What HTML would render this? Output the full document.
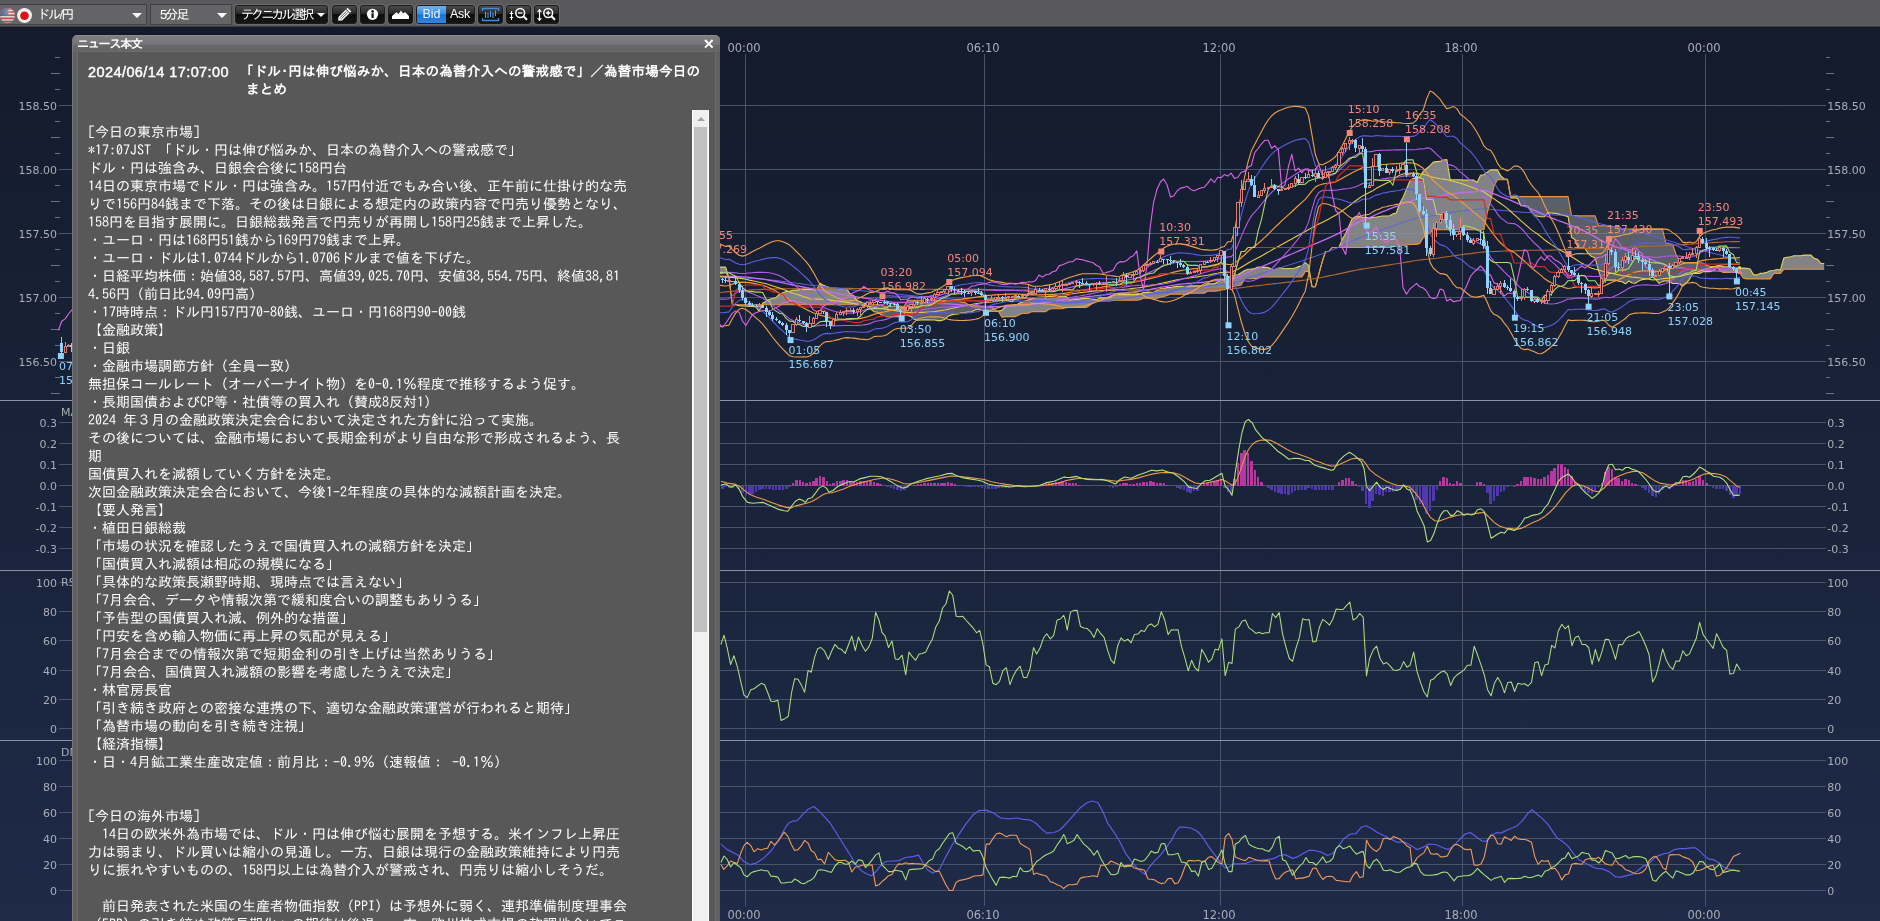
<!DOCTYPE html>
<html lang="ja"><head><meta charset="utf-8"><title>ドル/円 チャート</title>
<style>
html,body{margin:0;padding:0;}
body{width:1880px;height:921px;overflow:hidden;position:relative;background:linear-gradient(#141a2b 0%,#182238 45%,#1e2a47 100%);font-family:"Liberation Sans","IPAGothic","Noto Sans CJK JP",sans-serif;}
#tb,#news{will-change:transform;}
#tb{position:absolute;left:0;top:0;width:1880px;height:27px;background:#59595b;border-bottom:1px solid #3c3c3e;box-sizing:border-box;}
.cb{position:absolute;top:4px;height:21px;box-sizing:border-box;background:#646466;border:1px solid #434345;border-top-color:#3e3e40;color:#fff;font-size:12px;line-height:19px;font-family:"Liberation Sans","IPAGothic",sans-serif;}
.cb .ar{position:absolute;top:8px;width:0;height:0;border-left:5px solid transparent;border-right:5px solid transparent;border-top:5px solid #fff;}
.bt{position:absolute;top:5px;height:19px;width:25px;box-sizing:border-box;border:1px solid #1c1c1c;border-radius:3px;background:linear-gradient(#4a4a4a 0%,#2a2a2a 45%,#0c0c0c 50%,#161616 100%);color:#fff;font-size:12px;line-height:17px;text-align:center;box-shadow:0 0 0 1px #6a6a6c;}
#news{position:absolute;left:72px;top:35px;width:648px;height:900px;box-sizing:border-box;background:#606062;border-radius:5px 5px 0 0;border-left:1px solid #757577;border-top:1px solid #8a8a8c;}
#nt{position:absolute;left:0;top:0;width:647px;height:16px;border-radius:4px 4px 0 0;background:linear-gradient(#7f7f81 0%,#757577 52%,#676769 58%,#656567 100%);}
#nt span{position:absolute;left:4px;top:2px;font-size:12px;line-height:13px;font-weight:bold;color:#fff;font-family:"Liberation Sans","IPAGothic",sans-serif;letter-spacing:-1.2px;}
#nc{position:absolute;left:4px;top:15px;width:639px;height:890px;background:#585858;border:1px solid #6c6c6c;box-sizing:border-box;}
#hd{position:absolute;left:11px;top:11px;color:#fff;font-weight:bold;font-size:13.5px;line-height:18px;font-family:"Liberation Sans","IPAGothic",sans-serif;}
#bd{position:absolute;left:10px;top:71px;color:#fff;font-size:14px;line-height:18px;white-space:pre;font-family:"IPAGothic","Liberation Mono",monospace;}
#sb{position:absolute;left:614px;top:58px;width:17px;height:830px;background:#f0f0f0;border-left:1px solid #fff;border-right:1px solid #fff;box-sizing:border-box;}
#sb i{position:absolute;left:1px;top:17px;width:13px;height:505px;background:#c1c1c1;}
#sb b{position:absolute;left:4px;top:7px;width:0;height:0;border-left:4px solid transparent;border-right:4px solid transparent;border-bottom:4px solid #a3a3a3;}
</style></head><body>
<svg width="1880" height="921" viewBox="0 0 1880 921" style="position:absolute;left:0;top:0;will-change:transform">
<defs><linearGradient id="bg" x1="0" y1="0" x2="0" y2="1"><stop offset="0" stop-color="#141a2b"/><stop offset="0.45" stop-color="#182238"/><stop offset="1" stop-color="#1e2a47"/></linearGradient></defs>
<g stroke="#4a5468" stroke-width="1" shape-rendering="crispEdges"><line x1="59" y1="105.5" x2="1826" y2="105.5"/><line x1="59" y1="169.5" x2="1826" y2="169.5"/><line x1="59" y1="233.5" x2="1826" y2="233.5"/><line x1="59" y1="297.5" x2="1826" y2="297.5"/><line x1="59" y1="361.5" x2="1826" y2="361.5"/><line x1="59" y1="422.5" x2="1826" y2="422.5"/><line x1="59" y1="443.5" x2="1826" y2="443.5"/><line x1="59" y1="464.5" x2="1826" y2="464.5"/><line x1="59" y1="485.5" x2="1826" y2="485.5"/><line x1="59" y1="506.5" x2="1826" y2="506.5"/><line x1="59" y1="527.5" x2="1826" y2="527.5"/><line x1="59" y1="548.5" x2="1826" y2="548.5"/><line x1="59" y1="582.5" x2="1826" y2="582.5"/><line x1="59" y1="611.5" x2="1826" y2="611.5"/><line x1="59" y1="640.5" x2="1826" y2="640.5"/><line x1="59" y1="670.5" x2="1826" y2="670.5"/><line x1="59" y1="699.5" x2="1826" y2="699.5"/><line x1="59" y1="728.5" x2="1826" y2="728.5"/><line x1="59" y1="760.5" x2="1826" y2="760.5"/><line x1="59" y1="786.5" x2="1826" y2="786.5"/><line x1="59" y1="812.5" x2="1826" y2="812.5"/><line x1="59" y1="838.5" x2="1826" y2="838.5"/><line x1="59" y1="864.5" x2="1826" y2="864.5"/><line x1="59" y1="890.5" x2="1826" y2="890.5"/><line x1="745.5" y1="54" x2="745.5" y2="906"/><line x1="984.5" y1="54" x2="984.5" y2="906"/><line x1="1220.5" y1="54" x2="1220.5" y2="906"/><line x1="1462.5" y1="54" x2="1462.5" y2="906"/><line x1="1705.5" y1="54" x2="1705.5" y2="906"/></g>
<g stroke="#6a7385" stroke-width="1" shape-rendering="crispEdges"><line x1="1826" y1="57.5" x2="1830" y2="57.5"/><line x1="55" y1="57.5" x2="60" y2="57.5"/><line x1="1826" y1="73.5" x2="1834" y2="73.5"/><line x1="51" y1="73.5" x2="60" y2="73.5"/><line x1="1826" y1="89.5" x2="1830" y2="89.5"/><line x1="55" y1="89.5" x2="60" y2="89.5"/><line x1="1826" y1="121.5" x2="1830" y2="121.5"/><line x1="55" y1="121.5" x2="60" y2="121.5"/><line x1="1826" y1="137.5" x2="1834" y2="137.5"/><line x1="51" y1="137.5" x2="60" y2="137.5"/><line x1="1826" y1="153.5" x2="1830" y2="153.5"/><line x1="55" y1="153.5" x2="60" y2="153.5"/><line x1="1826" y1="185.5" x2="1830" y2="185.5"/><line x1="55" y1="185.5" x2="60" y2="185.5"/><line x1="1826" y1="201.5" x2="1834" y2="201.5"/><line x1="51" y1="201.5" x2="60" y2="201.5"/><line x1="1826" y1="217.5" x2="1830" y2="217.5"/><line x1="55" y1="217.5" x2="60" y2="217.5"/><line x1="1826" y1="249.5" x2="1830" y2="249.5"/><line x1="55" y1="249.5" x2="60" y2="249.5"/><line x1="1826" y1="265.5" x2="1834" y2="265.5"/><line x1="51" y1="265.5" x2="60" y2="265.5"/><line x1="1826" y1="281.5" x2="1830" y2="281.5"/><line x1="55" y1="281.5" x2="60" y2="281.5"/><line x1="1826" y1="313.5" x2="1830" y2="313.5"/><line x1="55" y1="313.5" x2="60" y2="313.5"/><line x1="1826" y1="329.5" x2="1834" y2="329.5"/><line x1="51" y1="329.5" x2="60" y2="329.5"/><line x1="1826" y1="345.5" x2="1830" y2="345.5"/><line x1="55" y1="345.5" x2="60" y2="345.5"/><line x1="1826" y1="377.5" x2="1830" y2="377.5"/><line x1="55" y1="377.5" x2="60" y2="377.5"/><line x1="1826" y1="393.5" x2="1834" y2="393.5"/><line x1="51" y1="393.5" x2="60" y2="393.5"/></g>
<g stroke="#8b93a3" stroke-width="1.4" shape-rendering="crispEdges"><line x1="0" y1="400.5" x2="1880" y2="400.5"/><line x1="0" y1="570.5" x2="1880" y2="570.5"/><line x1="0" y1="740.5" x2="1880" y2="740.5"/></g>
<clipPath id="mc"><rect x="58" y="28" width="1768" height="372"/></clipPath>
<g clip-path="url(#mc)" fill="none" stroke-linejoin="round">
<polygon points="112.3,351.2 115.7,351.2 119.0,351.2 122.4,351.2 125.8,351.2 129.1,351.2 132.5,351.2 135.9,351.9 139.2,348.2 142.6,348.2 144.4,347.1 144.4,347.1 142.6,347.1 139.2,347.1 135.9,347.1 132.5,347.1 129.1,347.1 125.8,347.1 122.4,347.1 119.0,347.1 115.7,347.1 112.3,347.1" fill="#8a8a90" fill-opacity="0.6" stroke="none"/>
<polygon points="144.4,347.1 146.0,346.1 149.4,346.1 152.7,346.1 156.1,346.1 159.5,346.1 162.8,344.9 166.2,344.9 169.6,344.9 172.9,344.9 176.3,344.6 179.7,344.5 183.1,344.5 186.4,343.8 189.8,343.8 193.2,344.1 196.5,343.0 199.9,343.0 203.3,342.1 206.6,341.7 210.0,339.9 213.4,339.9 216.8,338.8 220.1,338.5 223.5,335.4 226.9,335.4 230.2,331.8 233.6,331.5 237.0,329.9 240.3,325.8 243.7,324.8 247.1,324.3 250.5,324.3 253.8,323.7 257.2,323.7 260.6,319.4 263.9,318.2 267.3,316.1 270.7,312.5 274.0,312.3 277.4,312.3 280.8,312.1 284.2,311.7 287.5,311.0 290.9,310.4 294.3,309.4 297.6,309.0 301.0,307.3 304.4,306.6 307.7,306.3 311.1,306.3 314.5,306.3 317.9,302.8 321.2,302.0 324.6,299.7 328.0,298.7 331.3,297.4 334.7,297.2 338.1,295.9 341.4,295.6 344.8,295.2 348.2,293.4 351.6,292.4 354.9,292.4 358.3,292.4 361.7,292.2 365.0,291.7 368.4,291.7 371.8,291.7 375.1,291.9 378.5,292.4 381.9,292.4 385.3,292.4 388.6,291.5 392.0,291.5 395.4,291.0 398.7,290.2 402.1,289.8 405.5,288.6 408.8,288.6 412.2,288.6 415.6,285.3 419.0,285.3 422.3,285.2 425.7,285.1 429.1,285.0 432.4,285.0 435.8,285.0 439.2,285.0 442.5,285.0 445.9,285.0 449.3,285.0 452.7,285.0 456.0,285.4 459.4,285.4 462.8,284.9 466.1,284.8 469.5,284.8 472.9,284.9 476.2,284.8 479.6,284.8 483.0,284.8 486.4,285.4 489.7,285.8 492.8,285.8 492.8,285.8 489.7,287.5 486.4,288.3 483.0,288.3 479.6,288.3 476.2,288.3 472.9,290.4 469.5,290.4 466.1,290.4 462.8,290.4 459.4,290.4 456.0,290.4 452.7,290.4 449.3,291.0 445.9,291.3 442.5,291.3 439.2,291.3 435.8,293.3 432.4,293.3 429.1,293.3 425.7,294.0 422.3,294.2 419.0,294.2 415.6,294.6 412.2,299.6 408.8,300.6 405.5,302.0 402.1,308.9 398.7,308.9 395.4,309.6 392.0,309.6 388.6,310.5 385.3,310.9 381.9,311.8 378.5,311.8 375.1,311.8 371.8,313.2 368.4,313.2 365.0,313.7 361.7,313.7 358.3,313.7 354.9,313.7 351.6,313.7 348.2,314.4 344.8,317.1 341.4,317.1 338.1,317.1 334.7,318.4 331.3,318.6 328.0,320.1 324.6,320.1 321.2,322.1 317.9,322.9 314.5,322.9 311.1,322.9 307.7,322.9 304.4,322.9 301.0,322.9 297.6,324.4 294.3,324.4 290.9,324.4 287.5,325.0 284.2,325.0 280.8,327.3 277.4,327.3 274.0,327.3 270.7,327.3 267.3,329.9 263.9,331.6 260.6,331.7 257.2,331.7 253.8,331.7 250.5,332.3 247.1,332.3 243.7,332.3 240.3,332.3 237.0,335.9 233.6,337.5 230.2,337.5 226.9,340.4 223.5,340.4 220.1,343.2 216.8,343.5 213.4,344.6 210.0,344.6 206.6,346.0 203.3,346.0 199.9,346.0 196.5,346.0 193.2,346.0 189.8,346.0 186.4,346.0 183.1,346.0 179.7,346.0 176.3,346.0 172.9,346.0 169.6,346.0 166.2,346.0 162.8,346.0 159.5,347.3 156.1,347.3 152.7,347.3 149.4,347.1 146.0,347.1 144.4,347.1" fill="#929292" fill-opacity="0.88" stroke="none"/>
<polygon points="492.8,285.8 493.1,285.8 494.0,285.7 494.0,285.7 493.1,285.7 492.8,285.8" fill="#8a8a90" fill-opacity="0.6" stroke="none"/>
<polygon points="494.0,285.7 496.5,285.2 499.8,285.0 503.2,285.0 506.6,285.0 509.9,285.0 513.3,285.5 516.7,285.5 520.1,284.7 523.4,282.3 526.8,282.3 530.2,282.3 533.5,282.3 536.9,282.3 540.3,282.3 543.6,281.9 547.0,281.9 550.4,281.9 553.8,282.6 557.1,282.6 560.5,282.6 563.9,282.6 567.2,282.2 570.6,281.8 574.0,279.8 577.3,279.0 580.7,278.3 584.1,278.3 587.5,278.3 590.8,278.3 594.2,278.1 597.6,278.1 600.9,277.6 604.3,277.8 607.7,277.7 611.0,277.5 614.4,277.4 617.8,277.4 621.2,277.4 624.5,276.3 627.9,275.9 631.3,275.6 634.6,275.6 638.0,274.3 641.4,272.9 644.7,272.9 648.1,272.9 651.5,272.6 654.9,272.3 658.2,272.4 661.6,272.4 665.0,272.3 668.3,272.3 671.7,272.4 675.1,272.1 678.4,272.1 681.8,271.0 685.2,270.4 688.6,268.2 691.9,268.2 695.3,268.2 698.7,268.2 702.0,268.2 705.4,268.0 708.8,267.5 712.1,267.3 715.5,267.1 718.9,267.1 722.3,267.1 725.6,267.1 729.0,278.1 732.4,304.8 735.7,304.8 735.7,304.8 735.7,304.8 735.7,304.8 732.4,304.8 729.0,278.1 725.6,272.2 722.3,273.6 718.9,273.6 715.5,273.6 712.1,274.4 708.8,274.4 705.4,274.8 702.0,274.9 698.7,274.9 695.3,274.9 691.9,274.9 688.6,274.9 685.2,277.2 681.8,277.8 678.4,277.8 675.1,277.8 671.7,277.8 668.3,277.8 665.0,277.8 661.6,279.3 658.2,279.3 654.9,279.3 651.5,279.3 648.1,279.3 644.7,279.3 641.4,279.3 638.0,280.7 634.6,281.3 631.3,281.3 627.9,281.3 624.5,281.3 621.2,281.3 617.8,281.3 614.4,281.3 611.0,281.3 607.7,281.3 604.3,281.3 600.9,281.3 597.6,281.3 594.2,281.3 590.8,281.3 587.5,281.3 584.1,281.3 580.7,281.3 577.3,281.3 574.0,281.3 570.6,283.1 567.2,283.1 563.9,283.1 560.5,283.2 557.1,283.4 553.8,283.4 550.4,283.5 547.0,284.1 543.6,284.1 540.3,284.1 536.9,284.1 533.5,284.1 530.2,284.1 526.8,284.1 523.4,284.1 520.1,285.6 516.7,285.6 513.3,285.6 509.9,285.6 506.6,285.6 503.2,285.7 499.8,285.7 496.5,285.7 494.0,285.7" fill="#929292" fill-opacity="0.88" stroke="none"/>
<polygon points="735.7,304.8 739.1,305.6 742.5,306.0 745.8,306.0 749.2,306.4 752.6,306.4 756.0,306.9 759.3,311.4 762.0,304.8 762.0,304.8 759.3,304.8 756.0,304.8 752.6,304.8 749.2,304.8 745.8,304.8 742.5,304.8 739.1,304.8 735.7,304.8" fill="#8a8a90" fill-opacity="0.6" stroke="none"/>
<polygon points="762.0,304.8 762.7,303.1 766.1,301.4 769.4,299.3 772.8,298.5 776.2,297.4 779.5,294.2 782.9,292.8 786.3,291.4 789.7,291.2 793.0,290.0 796.4,290.4 799.8,289.4 803.1,289.2 806.5,289.5 809.9,289.5 813.2,289.5 816.6,290.5 820.0,283.3 823.4,285.3 826.7,286.6 830.1,287.7 833.5,288.3 836.8,288.3 840.2,288.6 843.6,288.6 846.9,289.1 850.3,294.6 853.7,295.6 857.1,300.6 860.4,301.7 863.8,303.4 867.2,304.1 867.7,304.8 867.7,304.8 867.2,304.8 863.8,304.8 860.4,304.8 857.1,304.8 853.7,304.8 850.3,304.8 846.9,304.8 843.6,304.8 840.2,304.8 836.8,304.8 833.5,304.8 830.1,304.8 826.7,304.8 823.4,304.8 820.0,304.8 816.6,304.8 813.2,304.8 809.9,304.8 806.5,304.8 803.1,304.8 799.8,304.8 796.4,304.8 793.0,304.8 789.7,304.8 786.3,304.8 782.9,304.8 779.5,304.8 776.2,304.8 772.8,304.8 769.4,304.8 766.1,304.8 762.7,304.8 762.0,304.8" fill="#929292" fill-opacity="0.88" stroke="none"/>
<polygon points="867.7,304.8 870.5,308.7 873.9,311.7 877.3,312.0 880.6,314.4 884.0,315.6 887.4,316.7 890.8,316.7 894.1,316.7 897.5,316.8 900.9,315.8 904.2,314.5 907.6,315.5 911.0,316.5 914.3,319.3 917.7,320.3 921.1,320.0 924.5,319.9 927.8,319.9 931.2,320.0 934.6,320.0 937.9,320.6 941.3,320.6 944.7,319.4 948.0,316.3 951.4,314.9 954.8,314.2 958.2,313.9 961.5,312.7 964.9,312.5 968.3,312.0 971.6,311.8 975.0,309.9 978.4,309.2 981.7,309.9 985.1,311.2 988.5,311.2 991.9,311.2 995.2,311.2 997.6,311.1 997.6,311.1 995.2,309.7 991.9,307.2 988.5,307.2 985.1,307.2 981.7,306.9 978.4,306.9 975.0,306.9 971.6,306.6 968.3,304.8 964.9,302.4 961.5,302.3 958.2,300.3 954.8,300.3 951.4,300.3 948.0,300.3 944.7,300.3 941.3,300.3 937.9,300.3 934.6,300.3 931.2,300.3 927.8,300.3 924.5,300.3 921.1,300.3 917.7,300.3 914.3,300.3 911.0,300.3 907.6,300.3 904.2,306.2 900.9,306.2 897.5,306.2 894.1,306.2 890.8,306.2 887.4,306.2 884.0,306.2 880.6,304.8 877.3,304.8 873.9,304.8 870.5,304.8 867.7,304.8" fill="#8a8a90" fill-opacity="0.6" stroke="none"/>
<polygon points="997.6,311.1 998.6,311.1 1002.0,310.2 1005.3,306.9 1008.7,305.9 1012.1,305.9 1015.4,305.5 1018.8,303.5 1022.2,302.0 1025.6,300.7 1028.9,299.9 1032.3,298.4 1035.7,297.5 1039.0,297.4 1042.4,297.3 1045.8,297.3 1049.1,296.1 1052.5,296.1 1055.9,296.1 1059.3,296.1 1062.6,296.3 1066.0,296.5 1069.4,299.9 1072.7,299.4 1076.1,299.1 1079.5,299.1 1082.8,298.5 1086.2,298.5 1089.6,298.5 1093.0,299.3 1096.3,299.9 1099.7,297.9 1103.1,297.9 1106.4,297.9 1109.8,297.8 1113.2,295.3 1116.5,294.7 1119.9,294.6 1123.3,294.6 1126.7,294.6 1130.0,294.6 1133.4,294.6 1136.8,294.6 1140.1,294.0 1143.5,292.5 1146.9,292.5 1150.2,292.5 1153.6,292.5 1157.0,290.5 1160.4,288.7 1163.7,288.7 1167.1,287.5 1170.5,287.5 1173.8,286.8 1177.2,286.4 1180.6,286.4 1183.9,286.4 1187.3,286.4 1190.7,285.9 1194.1,285.9 1197.4,285.9 1200.8,285.9 1204.2,285.9 1207.5,283.8 1210.9,283.8 1214.3,283.8 1217.6,281.9 1221.0,279.4 1224.4,279.2 1227.8,277.3 1231.1,276.3 1234.5,275.3 1237.9,274.8 1241.2,272.8 1244.6,270.5 1248.0,269.3 1251.3,269.1 1254.7,268.5 1258.1,267.0 1261.5,267.4 1264.8,267.4 1268.2,267.5 1271.6,269.2 1274.9,269.5 1278.3,268.0 1281.7,268.0 1285.0,268.8 1288.4,268.5 1291.8,268.5 1295.2,268.0 1298.5,266.6 1301.9,265.9 1305.3,262.6 1308.6,265.4 1312.0,286.7 1315.4,286.7 1318.7,274.7 1322.1,262.1 1325.5,251.5 1328.9,251.5 1332.2,247.5 1335.6,247.5 1339.0,247.5 1342.3,239.3 1345.7,233.4 1349.1,225.7 1352.4,218.6 1355.8,216.4 1359.2,216.4 1362.6,217.1 1365.9,217.4 1369.3,218.1 1372.7,217.4 1376.0,217.3 1379.4,216.5 1382.8,216.0 1386.1,216.0 1389.5,215.8 1392.9,213.9 1396.3,213.0 1399.6,203.8 1403.0,197.4 1406.4,189.5 1409.7,181.1 1413.1,178.3 1416.5,178.1 1419.8,177.2 1423.2,171.4 1426.6,168.5 1430.0,165.7 1433.3,162.1 1436.7,161.6 1440.1,161.4 1443.4,160.0 1446.8,159.5 1450.2,179.8 1453.5,179.8 1456.9,179.8 1460.3,179.8 1463.7,180.1 1467.0,180.1 1470.4,180.1 1473.8,180.1 1477.1,182.5 1480.5,175.2 1483.9,174.7 1487.2,172.3 1490.6,169.9 1494.0,169.9 1497.4,169.9 1500.7,175.6 1504.1,178.9 1507.5,179.3 1508.3,184.0 1508.3,184.0 1507.5,179.8 1504.1,179.8 1500.7,179.8 1497.4,179.8 1494.0,186.0 1490.6,201.5 1487.2,213.2 1483.9,229.7 1480.5,229.7 1477.1,229.7 1473.8,229.7 1470.4,229.7 1467.0,229.7 1463.7,229.7 1460.3,229.7 1456.9,229.7 1453.5,229.7 1450.2,229.7 1446.8,229.7 1443.4,229.7 1440.1,229.7 1436.7,229.7 1433.3,229.7 1430.0,233.1 1426.6,234.8 1423.2,237.7 1419.8,243.5 1416.5,244.4 1413.1,244.5 1409.7,244.5 1406.4,245.2 1403.0,245.2 1399.6,245.2 1396.3,246.2 1392.9,246.8 1389.5,247.5 1386.1,247.5 1382.8,247.5 1379.4,247.5 1376.0,247.5 1372.7,247.5 1369.3,247.5 1365.9,247.5 1362.6,247.5 1359.2,247.5 1355.8,247.5 1352.4,247.5 1349.1,247.5 1345.7,247.5 1342.3,247.5 1339.0,247.5 1335.6,247.5 1332.2,247.5 1328.9,251.5 1325.5,251.5 1322.1,262.1 1318.7,274.7 1315.4,286.7 1312.0,286.7 1308.6,271.4 1305.3,271.4 1301.9,276.9 1298.5,277.0 1295.2,277.0 1291.8,277.0 1288.4,277.0 1285.0,277.0 1281.7,277.0 1278.3,277.0 1274.9,277.0 1271.6,277.0 1268.2,277.0 1264.8,277.0 1261.5,277.1 1258.1,278.5 1254.7,278.5 1251.3,278.7 1248.0,278.7 1244.6,278.7 1241.2,285.0 1237.9,285.8 1234.5,286.2 1231.1,287.3 1227.8,287.9 1224.4,289.8 1221.0,290.0 1217.6,291.0 1214.3,291.2 1210.9,291.2 1207.5,291.2 1204.2,293.3 1200.8,293.3 1197.4,293.3 1194.1,293.3 1190.7,293.3 1187.3,294.2 1183.9,294.2 1180.6,294.2 1177.2,294.2 1173.8,294.2 1170.5,294.2 1167.1,295.4 1163.7,296.5 1160.4,297.3 1157.0,298.2 1153.6,298.2 1150.2,298.2 1146.9,298.2 1143.5,298.2 1140.1,299.7 1136.8,300.3 1133.4,300.3 1130.0,300.3 1126.7,300.3 1123.3,300.3 1119.9,300.3 1116.5,300.3 1113.2,300.5 1109.8,301.0 1106.4,301.0 1103.1,301.0 1099.7,301.0 1096.3,301.0 1093.0,302.9 1089.6,305.5 1086.2,307.4 1082.8,307.4 1079.5,307.4 1076.1,307.4 1072.7,307.4 1069.4,307.4 1066.0,307.4 1062.6,308.8 1059.3,308.8 1055.9,308.8 1052.5,308.8 1049.1,309.2 1045.8,311.6 1042.4,311.6 1039.0,311.6 1035.7,311.6 1032.3,311.6 1028.9,313.1 1025.6,313.5 1022.2,313.5 1018.8,315.0 1015.4,316.6 1012.1,316.6 1008.7,316.6 1005.3,316.6 1002.0,317.1 998.6,311.7 997.6,311.1" fill="#929292" fill-opacity="0.88" stroke="none"/>
<polygon points="1508.3,184.0 1510.8,197.9 1514.2,197.9 1517.6,198.2 1520.9,205.7 1524.3,205.7 1527.7,206.1 1531.1,211.2 1534.4,215.6 1537.8,216.2 1541.2,216.7 1544.5,216.7 1547.9,212.6 1551.3,213.0 1554.6,213.4 1558.0,213.9 1561.4,214.9 1564.8,215.6 1568.1,216.6 1571.5,237.2 1574.9,239.5 1578.2,248.0 1581.6,248.0 1585.0,248.4 1588.3,253.5 1591.7,256.6 1595.1,257.7 1598.5,270.6 1601.8,280.1 1605.2,280.1 1608.6,280.1 1611.9,280.1 1615.3,280.1 1618.7,281.1 1622.0,281.8 1625.4,283.8 1628.8,281.0 1632.2,283.0 1635.5,283.3 1638.9,280.9 1642.3,279.6 1645.6,279.3 1649.0,278.5 1652.4,277.0 1655.8,279.4 1659.1,283.4 1662.5,281.4 1665.9,280.7 1669.2,281.1 1672.6,283.5 1676.0,283.5 1679.3,283.5 1682.7,286.0 1686.1,283.3 1689.4,279.3 1692.8,273.4 1696.2,273.4 1699.6,273.4 1702.9,271.8 1706.3,271.6 1709.7,271.6 1713.0,270.8 1716.4,268.0 1717.1,267.4 1717.1,267.4 1716.4,266.6 1713.0,266.6 1709.7,266.6 1706.3,265.0 1702.9,263.0 1699.6,263.0 1696.2,263.0 1692.8,263.0 1689.4,263.0 1686.1,263.0 1682.7,262.0 1679.3,260.8 1676.0,254.4 1672.6,244.3 1669.2,243.6 1665.9,243.6 1662.5,229.1 1659.1,229.1 1655.8,229.1 1652.4,229.1 1649.0,229.1 1645.6,229.1 1642.3,229.1 1638.9,229.1 1635.5,229.1 1632.2,229.1 1628.8,229.1 1625.4,229.1 1622.0,229.1 1618.7,226.5 1615.3,226.5 1611.9,226.5 1608.6,226.5 1605.2,225.8 1601.8,225.8 1598.5,225.8 1595.1,215.9 1591.7,215.9 1588.3,215.9 1585.0,215.9 1581.6,215.9 1578.2,215.9 1574.9,215.5 1571.5,215.2 1568.1,196.6 1564.8,196.6 1561.4,196.6 1558.0,196.6 1554.6,196.6 1551.3,196.6 1547.9,196.6 1544.5,196.6 1541.2,196.6 1537.8,196.6 1534.4,196.6 1531.1,196.6 1527.7,196.6 1524.3,196.6 1520.9,196.6 1517.6,196.6 1514.2,196.3 1510.8,196.3 1508.3,184.0" fill="#8a8a90" fill-opacity="0.6" stroke="none"/>
<polygon points="1717.1,267.4 1719.8,265.4 1723.1,266.8 1726.5,266.8 1729.9,266.7 1733.3,267.8 1736.6,268.1 1740.0,268.1 1743.4,268.1 1746.7,268.4 1750.1,269.0 1753.5,274.6 1756.8,274.9 1760.2,273.4 1763.6,273.1 1767.0,272.3 1770.3,270.7 1773.7,270.5 1777.1,269.5 1780.4,270.1 1783.8,258.0 1787.2,257.2 1790.5,256.7 1793.9,255.7 1797.3,255.7 1800.7,255.7 1804.0,255.1 1807.4,255.1 1810.8,255.0 1814.1,258.3 1817.5,259.3 1820.9,263.4 1824.2,263.5 1824.2,269.3 1820.9,269.3 1817.5,269.3 1814.1,269.3 1810.8,269.3 1807.4,269.3 1804.0,269.3 1800.7,269.3 1797.3,269.3 1793.9,269.3 1790.5,269.3 1787.2,269.3 1783.8,269.3 1780.4,273.4 1777.1,273.4 1773.7,273.4 1770.3,278.9 1767.0,278.9 1763.6,278.9 1760.2,278.9 1756.8,278.9 1753.5,278.9 1750.1,278.9 1746.7,278.9 1743.4,278.1 1740.0,273.3 1736.6,272.4 1733.3,272.4 1729.9,272.4 1726.5,272.4 1723.1,272.4 1719.8,270.7 1717.1,267.4" fill="#929292" fill-opacity="0.88" stroke="none"/>
<polyline points="105.5,350.9 108.9,351.2 112.3,351.2 115.7,351.2 119.0,351.2 122.4,351.2 125.8,351.2 129.1,351.2 132.5,351.2 135.9,351.9 139.2,348.2 142.6,348.2 146.0,346.1 149.4,346.1 152.7,346.1 156.1,346.1 159.5,346.1 162.8,344.9 166.2,344.9 169.6,344.9 172.9,344.9 176.3,344.6 179.7,344.5 183.1,344.5 186.4,343.8 189.8,343.8 193.2,344.1 196.5,343.0 199.9,343.0 203.3,342.1 206.6,341.7 210.0,339.9 213.4,339.9 216.8,338.8 220.1,338.5 223.5,335.4 226.9,335.4 230.2,331.8 233.6,331.5 237.0,329.9 240.3,325.8 243.7,324.8 247.1,324.3 250.5,324.3 253.8,323.7 257.2,323.7 260.6,319.4 263.9,318.2 267.3,316.1 270.7,312.5 274.0,312.3 277.4,312.3 280.8,312.1 284.2,311.7 287.5,311.0 290.9,310.4 294.3,309.4 297.6,309.0 301.0,307.3 304.4,306.6 307.7,306.3 311.1,306.3 314.5,306.3 317.9,302.8 321.2,302.0 324.6,299.7 328.0,298.7 331.3,297.4 334.7,297.2 338.1,295.9 341.4,295.6 344.8,295.2 348.2,293.4 351.6,292.4 354.9,292.4 358.3,292.4 361.7,292.2 365.0,291.7 368.4,291.7 371.8,291.7 375.1,291.9 378.5,292.4 381.9,292.4 385.3,292.4 388.6,291.5 392.0,291.5 395.4,291.0 398.7,290.2 402.1,289.8 405.5,288.6 408.8,288.6 412.2,288.6 415.6,285.3 419.0,285.3 422.3,285.2 425.7,285.1 429.1,285.0 432.4,285.0 435.8,285.0 439.2,285.0 442.5,285.0 445.9,285.0 449.3,285.0 452.7,285.0 456.0,285.4 459.4,285.4 462.8,284.9 466.1,284.8 469.5,284.8 472.9,284.9 476.2,284.8 479.6,284.8 483.0,284.8 486.4,285.4 489.7,285.8 493.1,285.8 496.5,285.2 499.8,285.0 503.2,285.0 506.6,285.0 509.9,285.0 513.3,285.5 516.7,285.5 520.1,284.7 523.4,282.3 526.8,282.3 530.2,282.3 533.5,282.3 536.9,282.3 540.3,282.3 543.6,281.9 547.0,281.9 550.4,281.9 553.8,282.6 557.1,282.6 560.5,282.6 563.9,282.6 567.2,282.2 570.6,281.8 574.0,279.8 577.3,279.0 580.7,278.3 584.1,278.3 587.5,278.3 590.8,278.3 594.2,278.1 597.6,278.1 600.9,277.6 604.3,277.8 607.7,277.7 611.0,277.5 614.4,277.4 617.8,277.4 621.2,277.4 624.5,276.3 627.9,275.9 631.3,275.6 634.6,275.6 638.0,274.3 641.4,272.9 644.7,272.9 648.1,272.9 651.5,272.6 654.9,272.3 658.2,272.4 661.6,272.4 665.0,272.3 668.3,272.3 671.7,272.4 675.1,272.1 678.4,272.1 681.8,271.0 685.2,270.4 688.6,268.2 691.9,268.2 695.3,268.2 698.7,268.2 702.0,268.2 705.4,268.0 708.8,267.5 712.1,267.3 715.5,267.1 718.9,267.1 722.3,267.1 725.6,267.1 729.0,278.1 732.4,304.8 735.7,304.8 739.1,305.6 742.5,306.0 745.8,306.0 749.2,306.4 752.6,306.4 756.0,306.9 759.3,311.4 762.7,303.1 766.1,301.4 769.4,299.3 772.8,298.5 776.2,297.4 779.5,294.2 782.9,292.8 786.3,291.4 789.7,291.2 793.0,290.0 796.4,290.4 799.8,289.4 803.1,289.2 806.5,289.5 809.9,289.5 813.2,289.5 816.6,290.5 820.0,283.3 823.4,285.3 826.7,286.6 830.1,287.7 833.5,288.3 836.8,288.3 840.2,288.6 843.6,288.6 846.9,289.1 850.3,294.6 853.7,295.6 857.1,300.6 860.4,301.7 863.8,303.4 867.2,304.1 870.5,308.7 873.9,311.7 877.3,312.0 880.6,314.4 884.0,315.6 887.4,316.7 890.8,316.7 894.1,316.7 897.5,316.8 900.9,315.8 904.2,314.5 907.6,315.5 911.0,316.5 914.3,319.3 917.7,320.3 921.1,320.0 924.5,319.9 927.8,319.9 931.2,320.0 934.6,320.0 937.9,320.6 941.3,320.6 944.7,319.4 948.0,316.3 951.4,314.9 954.8,314.2 958.2,313.9 961.5,312.7 964.9,312.5 968.3,312.0 971.6,311.8 975.0,309.9 978.4,309.2 981.7,309.9 985.1,311.2 988.5,311.2 991.9,311.2 995.2,311.2 998.6,311.1 1002.0,310.2 1005.3,306.9 1008.7,305.9 1012.1,305.9 1015.4,305.5 1018.8,303.5 1022.2,302.0 1025.6,300.7 1028.9,299.9 1032.3,298.4 1035.7,297.5 1039.0,297.4 1042.4,297.3 1045.8,297.3 1049.1,296.1 1052.5,296.1 1055.9,296.1 1059.3,296.1 1062.6,296.3 1066.0,296.5 1069.4,299.9 1072.7,299.4 1076.1,299.1 1079.5,299.1 1082.8,298.5 1086.2,298.5 1089.6,298.5 1093.0,299.3 1096.3,299.9 1099.7,297.9 1103.1,297.9 1106.4,297.9 1109.8,297.8 1113.2,295.3 1116.5,294.7 1119.9,294.6 1123.3,294.6 1126.7,294.6 1130.0,294.6 1133.4,294.6 1136.8,294.6 1140.1,294.0 1143.5,292.5 1146.9,292.5 1150.2,292.5 1153.6,292.5 1157.0,290.5 1160.4,288.7 1163.7,288.7 1167.1,287.5 1170.5,287.5 1173.8,286.8 1177.2,286.4 1180.6,286.4 1183.9,286.4 1187.3,286.4 1190.7,285.9 1194.1,285.9 1197.4,285.9 1200.8,285.9 1204.2,285.9 1207.5,283.8 1210.9,283.8 1214.3,283.8 1217.6,281.9 1221.0,279.4 1224.4,279.2 1227.8,277.3 1231.1,276.3 1234.5,275.3 1237.9,274.8 1241.2,272.8 1244.6,270.5 1248.0,269.3 1251.3,269.1 1254.7,268.5 1258.1,267.0 1261.5,267.4 1264.8,267.4 1268.2,267.5 1271.6,269.2 1274.9,269.5 1278.3,268.0 1281.7,268.0 1285.0,268.8 1288.4,268.5 1291.8,268.5 1295.2,268.0 1298.5,266.6 1301.9,265.9 1305.3,262.6 1308.6,265.4 1312.0,286.7 1315.4,286.7 1318.7,274.7 1322.1,262.1 1325.5,251.5 1328.9,251.5 1332.2,247.5 1335.6,247.5 1339.0,247.5 1342.3,239.3 1345.7,233.4 1349.1,225.7 1352.4,218.6 1355.8,216.4 1359.2,216.4 1362.6,217.1 1365.9,217.4 1369.3,218.1 1372.7,217.4 1376.0,217.3 1379.4,216.5 1382.8,216.0 1386.1,216.0 1389.5,215.8 1392.9,213.9 1396.3,213.0 1399.6,203.8 1403.0,197.4 1406.4,189.5 1409.7,181.1 1413.1,178.3 1416.5,178.1 1419.8,177.2 1423.2,171.4 1426.6,168.5 1430.0,165.7 1433.3,162.1 1436.7,161.6 1440.1,161.4 1443.4,160.0 1446.8,159.5 1450.2,179.8 1453.5,179.8 1456.9,179.8 1460.3,179.8 1463.7,180.1 1467.0,180.1 1470.4,180.1 1473.8,180.1 1477.1,182.5 1480.5,175.2 1483.9,174.7 1487.2,172.3 1490.6,169.9 1494.0,169.9 1497.4,169.9 1500.7,175.6 1504.1,178.9 1507.5,179.3 1510.8,197.9 1514.2,197.9 1517.6,198.2 1520.9,205.7 1524.3,205.7 1527.7,206.1 1531.1,211.2 1534.4,215.6 1537.8,216.2 1541.2,216.7 1544.5,216.7 1547.9,212.6 1551.3,213.0 1554.6,213.4 1558.0,213.9 1561.4,214.9 1564.8,215.6 1568.1,216.6 1571.5,237.2 1574.9,239.5 1578.2,248.0 1581.6,248.0 1585.0,248.4 1588.3,253.5 1591.7,256.6 1595.1,257.7 1598.5,270.6 1601.8,280.1 1605.2,280.1 1608.6,280.1 1611.9,280.1 1615.3,280.1 1618.7,281.1 1622.0,281.8 1625.4,283.8 1628.8,281.0 1632.2,283.0 1635.5,283.3 1638.9,280.9 1642.3,279.6 1645.6,279.3 1649.0,278.5 1652.4,277.0 1655.8,279.4 1659.1,283.4 1662.5,281.4 1665.9,280.7 1669.2,281.1 1672.6,283.5 1676.0,283.5 1679.3,283.5 1682.7,286.0 1686.1,283.3 1689.4,279.3 1692.8,273.4 1696.2,273.4 1699.6,273.4 1702.9,271.8 1706.3,271.6 1709.7,271.6 1713.0,270.8 1716.4,268.0 1719.8,265.4 1723.1,266.8 1726.5,266.8 1729.9,266.7 1733.3,267.8 1736.6,268.1 1740.0,268.1 1743.4,268.1 1746.7,268.4 1750.1,269.0 1753.5,274.6 1756.8,274.9 1760.2,273.4 1763.6,273.1 1767.0,272.3 1770.3,270.7 1773.7,270.5 1777.1,269.5 1780.4,270.1 1783.8,258.0 1787.2,257.2 1790.5,256.7 1793.9,255.7 1797.3,255.7 1800.7,255.7 1804.0,255.1 1807.4,255.1 1810.8,255.0 1814.1,258.3 1817.5,259.3 1820.9,263.4 1824.2,263.5" stroke="#e6d25a" stroke-width="1.1" />
<polyline points="105.5,347.1 108.9,347.1 112.3,347.1 115.7,347.1 119.0,347.1 122.4,347.1 125.8,347.1 129.1,347.1 132.5,347.1 135.9,347.1 139.2,347.1 142.6,347.1 146.0,347.1 149.4,347.1 152.7,347.3 156.1,347.3 159.5,347.3 162.8,346.0 166.2,346.0 169.6,346.0 172.9,346.0 176.3,346.0 179.7,346.0 183.1,346.0 186.4,346.0 189.8,346.0 193.2,346.0 196.5,346.0 199.9,346.0 203.3,346.0 206.6,346.0 210.0,344.6 213.4,344.6 216.8,343.5 220.1,343.2 223.5,340.4 226.9,340.4 230.2,337.5 233.6,337.5 237.0,335.9 240.3,332.3 243.7,332.3 247.1,332.3 250.5,332.3 253.8,331.7 257.2,331.7 260.6,331.7 263.9,331.6 267.3,329.9 270.7,327.3 274.0,327.3 277.4,327.3 280.8,327.3 284.2,325.0 287.5,325.0 290.9,324.4 294.3,324.4 297.6,324.4 301.0,322.9 304.4,322.9 307.7,322.9 311.1,322.9 314.5,322.9 317.9,322.9 321.2,322.1 324.6,320.1 328.0,320.1 331.3,318.6 334.7,318.4 338.1,317.1 341.4,317.1 344.8,317.1 348.2,314.4 351.6,313.7 354.9,313.7 358.3,313.7 361.7,313.7 365.0,313.7 368.4,313.2 371.8,313.2 375.1,311.8 378.5,311.8 381.9,311.8 385.3,310.9 388.6,310.5 392.0,309.6 395.4,309.6 398.7,308.9 402.1,308.9 405.5,302.0 408.8,300.6 412.2,299.6 415.6,294.6 419.0,294.2 422.3,294.2 425.7,294.0 429.1,293.3 432.4,293.3 435.8,293.3 439.2,291.3 442.5,291.3 445.9,291.3 449.3,291.0 452.7,290.4 456.0,290.4 459.4,290.4 462.8,290.4 466.1,290.4 469.5,290.4 472.9,290.4 476.2,288.3 479.6,288.3 483.0,288.3 486.4,288.3 489.7,287.5 493.1,285.7 496.5,285.7 499.8,285.7 503.2,285.7 506.6,285.6 509.9,285.6 513.3,285.6 516.7,285.6 520.1,285.6 523.4,284.1 526.8,284.1 530.2,284.1 533.5,284.1 536.9,284.1 540.3,284.1 543.6,284.1 547.0,284.1 550.4,283.5 553.8,283.4 557.1,283.4 560.5,283.2 563.9,283.1 567.2,283.1 570.6,283.1 574.0,281.3 577.3,281.3 580.7,281.3 584.1,281.3 587.5,281.3 590.8,281.3 594.2,281.3 597.6,281.3 600.9,281.3 604.3,281.3 607.7,281.3 611.0,281.3 614.4,281.3 617.8,281.3 621.2,281.3 624.5,281.3 627.9,281.3 631.3,281.3 634.6,281.3 638.0,280.7 641.4,279.3 644.7,279.3 648.1,279.3 651.5,279.3 654.9,279.3 658.2,279.3 661.6,279.3 665.0,277.8 668.3,277.8 671.7,277.8 675.1,277.8 678.4,277.8 681.8,277.8 685.2,277.2 688.6,274.9 691.9,274.9 695.3,274.9 698.7,274.9 702.0,274.9 705.4,274.8 708.8,274.4 712.1,274.4 715.5,273.6 718.9,273.6 722.3,273.6 725.6,272.2 729.0,278.1 732.4,304.8 735.7,304.8 739.1,304.8 742.5,304.8 745.8,304.8 749.2,304.8 752.6,304.8 756.0,304.8 759.3,304.8 762.7,304.8 766.1,304.8 769.4,304.8 772.8,304.8 776.2,304.8 779.5,304.8 782.9,304.8 786.3,304.8 789.7,304.8 793.0,304.8 796.4,304.8 799.8,304.8 803.1,304.8 806.5,304.8 809.9,304.8 813.2,304.8 816.6,304.8 820.0,304.8 823.4,304.8 826.7,304.8 830.1,304.8 833.5,304.8 836.8,304.8 840.2,304.8 843.6,304.8 846.9,304.8 850.3,304.8 853.7,304.8 857.1,304.8 860.4,304.8 863.8,304.8 867.2,304.8 870.5,304.8 873.9,304.8 877.3,304.8 880.6,304.8 884.0,306.2 887.4,306.2 890.8,306.2 894.1,306.2 897.5,306.2 900.9,306.2 904.2,306.2 907.6,300.3 911.0,300.3 914.3,300.3 917.7,300.3 921.1,300.3 924.5,300.3 927.8,300.3 931.2,300.3 934.6,300.3 937.9,300.3 941.3,300.3 944.7,300.3 948.0,300.3 951.4,300.3 954.8,300.3 958.2,300.3 961.5,302.3 964.9,302.4 968.3,304.8 971.6,306.6 975.0,306.9 978.4,306.9 981.7,306.9 985.1,307.2 988.5,307.2 991.9,307.2 995.2,309.7 998.6,311.7 1002.0,317.1 1005.3,316.6 1008.7,316.6 1012.1,316.6 1015.4,316.6 1018.8,315.0 1022.2,313.5 1025.6,313.5 1028.9,313.1 1032.3,311.6 1035.7,311.6 1039.0,311.6 1042.4,311.6 1045.8,311.6 1049.1,309.2 1052.5,308.8 1055.9,308.8 1059.3,308.8 1062.6,308.8 1066.0,307.4 1069.4,307.4 1072.7,307.4 1076.1,307.4 1079.5,307.4 1082.8,307.4 1086.2,307.4 1089.6,305.5 1093.0,302.9 1096.3,301.0 1099.7,301.0 1103.1,301.0 1106.4,301.0 1109.8,301.0 1113.2,300.5 1116.5,300.3 1119.9,300.3 1123.3,300.3 1126.7,300.3 1130.0,300.3 1133.4,300.3 1136.8,300.3 1140.1,299.7 1143.5,298.2 1146.9,298.2 1150.2,298.2 1153.6,298.2 1157.0,298.2 1160.4,297.3 1163.7,296.5 1167.1,295.4 1170.5,294.2 1173.8,294.2 1177.2,294.2 1180.6,294.2 1183.9,294.2 1187.3,294.2 1190.7,293.3 1194.1,293.3 1197.4,293.3 1200.8,293.3 1204.2,293.3 1207.5,291.2 1210.9,291.2 1214.3,291.2 1217.6,291.0 1221.0,290.0 1224.4,289.8 1227.8,287.9 1231.1,287.3 1234.5,286.2 1237.9,285.8 1241.2,285.0 1244.6,278.7 1248.0,278.7 1251.3,278.7 1254.7,278.5 1258.1,278.5 1261.5,277.1 1264.8,277.0 1268.2,277.0 1271.6,277.0 1274.9,277.0 1278.3,277.0 1281.7,277.0 1285.0,277.0 1288.4,277.0 1291.8,277.0 1295.2,277.0 1298.5,277.0 1301.9,276.9 1305.3,271.4 1308.6,271.4 1312.0,286.7 1315.4,286.7 1318.7,274.7 1322.1,262.1 1325.5,251.5 1328.9,251.5 1332.2,247.5 1335.6,247.5 1339.0,247.5 1342.3,247.5 1345.7,247.5 1349.1,247.5 1352.4,247.5 1355.8,247.5 1359.2,247.5 1362.6,247.5 1365.9,247.5 1369.3,247.5 1372.7,247.5 1376.0,247.5 1379.4,247.5 1382.8,247.5 1386.1,247.5 1389.5,247.5 1392.9,246.8 1396.3,246.2 1399.6,245.2 1403.0,245.2 1406.4,245.2 1409.7,244.5 1413.1,244.5 1416.5,244.4 1419.8,243.5 1423.2,237.7 1426.6,234.8 1430.0,233.1 1433.3,229.7 1436.7,229.7 1440.1,229.7 1443.4,229.7 1446.8,229.7 1450.2,229.7 1453.5,229.7 1456.9,229.7 1460.3,229.7 1463.7,229.7 1467.0,229.7 1470.4,229.7 1473.8,229.7 1477.1,229.7 1480.5,229.7 1483.9,229.7 1487.2,213.2 1490.6,201.5 1494.0,186.0 1497.4,179.8 1500.7,179.8 1504.1,179.8 1507.5,179.8 1510.8,196.3 1514.2,196.3 1517.6,196.6 1520.9,196.6 1524.3,196.6 1527.7,196.6 1531.1,196.6 1534.4,196.6 1537.8,196.6 1541.2,196.6 1544.5,196.6 1547.9,196.6 1551.3,196.6 1554.6,196.6 1558.0,196.6 1561.4,196.6 1564.8,196.6 1568.1,196.6 1571.5,215.2 1574.9,215.5 1578.2,215.9 1581.6,215.9 1585.0,215.9 1588.3,215.9 1591.7,215.9 1595.1,215.9 1598.5,225.8 1601.8,225.8 1605.2,225.8 1608.6,226.5 1611.9,226.5 1615.3,226.5 1618.7,226.5 1622.0,229.1 1625.4,229.1 1628.8,229.1 1632.2,229.1 1635.5,229.1 1638.9,229.1 1642.3,229.1 1645.6,229.1 1649.0,229.1 1652.4,229.1 1655.8,229.1 1659.1,229.1 1662.5,229.1 1665.9,243.6 1669.2,243.6 1672.6,244.3 1676.0,254.4 1679.3,260.8 1682.7,262.0 1686.1,263.0 1689.4,263.0 1692.8,263.0 1696.2,263.0 1699.6,263.0 1702.9,263.0 1706.3,265.0 1709.7,266.6 1713.0,266.6 1716.4,266.6 1719.8,270.7 1723.1,272.4 1726.5,272.4 1729.9,272.4 1733.3,272.4 1736.6,272.4 1740.0,273.3 1743.4,278.1 1746.7,278.9 1750.1,278.9 1753.5,278.9 1756.8,278.9 1760.2,278.9 1763.6,278.9 1767.0,278.9 1770.3,278.9 1773.7,273.4 1777.1,273.4 1780.4,273.4 1783.8,269.3 1787.2,269.3 1790.5,269.3 1793.9,269.3 1797.3,269.3 1800.7,269.3 1804.0,269.3 1807.4,269.3 1810.8,269.3 1814.1,269.3 1817.5,269.3 1820.9,269.3 1824.2,269.3" stroke="#e8953e" stroke-width="1.1" />
<polyline points="105.5,338.0 108.9,338.0 112.3,338.1 115.7,338.2 119.0,338.2 122.4,338.3 125.8,338.4 129.1,338.4 132.5,338.4 135.9,338.5 139.2,338.5 142.6,338.5 146.0,338.5 149.4,338.5 152.7,338.5 156.1,338.4 159.5,338.3 162.8,338.2 166.2,338.2 169.6,338.1 173.0,338.0 176.3,338.0 179.7,337.9 183.1,337.8 186.4,337.7 189.8,337.6 193.2,337.5 196.5,337.4 199.9,337.3 203.3,337.2 206.6,337.1 210.0,336.9 213.4,336.8 216.8,336.6 220.1,336.5 223.5,336.4 226.9,336.2 230.2,336.1 233.6,335.9 237.0,335.8 240.3,335.6 243.7,335.4 247.1,335.2 250.5,335.0 253.8,334.8 257.2,334.6 260.6,334.4 263.9,334.2 267.3,334.1 270.7,333.9 274.0,333.7 277.4,333.5 280.8,333.3 284.2,333.1 287.5,332.9 290.9,332.7 294.3,332.5 297.6,332.3 301.0,332.2 304.4,331.9 307.8,331.7 311.1,331.5 314.5,331.3 317.9,331.1 321.2,330.9 324.6,330.6 328.0,330.4 331.3,330.2 334.7,329.9 338.1,329.7 341.5,329.5 344.8,329.2 348.2,329.0 351.6,328.8 354.9,328.5 358.3,328.3 361.7,328.0 365.0,327.8 368.4,327.5 371.8,327.3 375.1,327.0 378.5,326.8 381.9,326.5 385.3,326.3 388.6,326.0 392.0,325.8 395.4,325.5 398.7,325.2 402.1,325.0 405.5,324.7 408.8,324.5 412.2,324.2 415.6,323.9 419.0,323.7 422.3,323.4 425.7,323.1 429.1,322.8 432.4,322.5 435.8,322.2 439.2,322.0 442.5,321.7 445.9,321.4 449.3,321.1 452.7,320.8 456.0,320.5 459.4,320.2 462.8,319.9 466.1,319.6 469.5,319.2 472.9,318.9 476.2,318.6 479.6,318.3 483.0,318.0 486.4,317.6 489.7,317.3 493.1,317.0 496.5,316.7 499.8,316.3 503.2,316.0 506.6,315.7 510.0,315.3 513.3,315.0 516.7,314.6 520.1,314.3 523.4,313.9 526.8,313.5 530.2,313.2 533.5,312.8 536.9,312.5 540.3,312.1 543.6,311.7 547.0,311.4 550.4,311.0 553.8,310.6 557.1,310.2 560.5,309.9 563.9,309.5 567.2,309.1 570.6,308.7 574.0,308.3 577.3,307.9 580.7,307.5 584.1,307.1 587.5,306.7 590.8,306.4 594.2,305.9 597.6,305.5 600.9,305.1 604.3,304.7 607.7,304.3 611.0,303.8 614.4,303.4 617.8,303.0 621.2,302.6 624.5,302.1 627.9,301.7 631.3,301.3 634.6,300.9 638.0,300.5 641.4,300.1 644.8,299.8 648.1,299.7 651.5,299.5 654.9,299.2 658.2,299.0 661.6,298.7 665.0,298.5 668.3,298.2 671.7,297.9 675.1,297.5 678.5,297.2 681.8,296.9 685.2,296.5 688.6,296.1 691.9,295.8 695.3,295.4 698.7,295.0 702.0,294.6 705.4,294.1 708.8,293.7 712.1,293.4 715.5,293.0 718.9,292.6 722.3,292.3 725.6,291.9 729.0,291.6 732.4,291.3 735.7,291.0 739.1,290.7 742.5,290.5 745.9,290.2 749.2,290.1 752.6,289.9 756.0,289.7 759.3,289.6 762.7,289.4 766.1,289.3 769.4,289.1 772.8,289.0 776.2,288.9 779.5,288.9 782.9,288.8 786.3,288.8 789.7,288.7 793.0,288.7 796.4,288.6 799.8,288.5 803.1,288.5 806.5,288.4 809.9,288.4 813.2,288.4 816.6,288.3 820.0,288.2 823.4,288.2 826.7,288.2 830.1,288.3 833.5,288.4 836.8,288.4 840.2,288.4 843.6,288.4 846.9,288.4 850.3,288.4 853.7,288.5 857.1,288.5 860.4,288.5 863.8,288.5 867.2,288.6 870.5,288.6 873.9,288.6 877.3,288.6 880.6,288.6 884.0,288.6 887.4,288.6 890.8,288.7 894.1,288.7 897.5,288.8 900.9,288.8 904.2,288.9 907.6,289.0 911.0,289.1 914.4,289.1 917.7,289.2 921.1,289.2 924.5,289.3 927.8,289.3 931.2,289.3 934.6,289.4 937.9,289.4 941.3,289.4 944.7,289.4 948.0,289.4 951.4,289.4 954.8,289.4 958.2,289.4 961.5,289.4 964.9,289.4 968.3,289.4 971.6,289.4 975.0,289.4 978.4,289.4 981.8,289.4 985.1,289.5 988.5,289.5 991.9,289.6 995.2,289.6 998.6,289.7 1002.0,289.7 1005.3,289.8 1008.7,289.9 1012.1,289.9 1015.4,290.0 1018.8,290.0 1022.2,290.0 1025.6,290.1 1028.9,290.1 1032.3,290.2 1035.7,290.2 1039.0,290.2 1042.4,290.3 1045.8,290.3 1049.2,290.3 1052.5,290.3 1055.9,290.3 1059.3,290.3 1062.6,290.3 1066.0,290.3 1069.4,290.3 1072.7,290.3 1076.1,290.3 1079.5,290.2 1082.8,290.2 1086.2,290.2 1089.6,290.2 1093.0,290.2 1096.3,290.2 1099.7,290.2 1103.1,290.2 1106.4,290.2 1109.8,290.3 1113.2,290.2 1116.5,290.2 1119.9,290.3 1123.3,290.2 1126.7,290.2 1130.0,290.2 1133.4,290.2 1136.8,290.1 1140.1,290.1 1143.5,290.0 1146.9,290.0 1150.2,289.9 1153.6,289.8 1157.0,289.7 1160.4,289.6 1163.7,289.5 1167.1,289.4 1170.5,289.3 1173.8,289.3 1177.2,289.2 1180.6,289.1 1183.9,289.1 1187.3,289.1 1190.7,289.1 1194.1,289.1 1197.4,289.1 1200.8,289.0 1204.2,289.0 1207.5,288.9 1210.9,288.8 1214.3,288.8 1217.7,288.7 1221.0,288.6 1224.4,288.6 1227.8,288.7 1231.1,288.7 1234.5,288.4 1237.9,288.1 1241.2,287.7 1244.6,287.3 1248.0,286.8 1251.3,286.4 1254.7,286.0 1258.1,285.6 1261.5,285.2 1264.8,284.8 1268.2,284.4 1271.6,284.0 1274.9,283.6 1278.3,283.3 1281.7,282.9 1285.0,282.5 1288.4,282.1 1291.8,281.7 1295.2,281.3 1298.5,280.9 1301.9,280.4 1305.3,280.0 1308.6,279.5 1312.0,279.0 1315.4,278.6 1318.8,278.0 1322.1,277.3 1325.5,276.6 1328.9,275.9 1332.2,275.2 1335.6,274.6 1339.0,273.9 1342.3,273.1 1345.7,272.4 1349.1,271.6 1352.5,270.9 1355.8,270.2 1359.2,269.6 1362.6,268.9 1365.9,268.5 1369.3,268.0 1372.7,267.5 1376.0,267.0 1379.4,266.5 1382.8,265.9 1386.2,265.4 1389.5,264.9 1392.9,264.3 1396.3,263.8 1399.6,263.2 1403.0,262.7 1406.4,262.1 1409.7,261.6 1413.1,261.0 1416.5,260.5 1419.8,260.0 1423.2,259.6 1426.6,259.3 1430.0,259.0 1433.3,258.6 1436.7,258.2 1440.1,257.7 1443.4,257.2 1446.8,256.7 1450.2,256.3 1453.5,255.8 1456.9,255.4 1460.3,254.8 1463.7,254.4 1467.0,253.9 1470.4,253.6 1473.8,253.1 1477.1,252.7 1480.5,252.3 1483.9,251.9 1487.2,251.7 1490.6,251.7 1494.0,251.5 1497.4,251.4 1500.7,251.2 1504.1,251.0 1507.5,250.9 1510.8,250.8 1514.2,250.7 1517.6,250.6 1521.0,250.6 1524.3,250.4 1527.7,250.3 1531.1,250.3 1534.4,250.3 1537.8,250.2 1541.2,250.2 1544.5,250.2 1547.9,250.2 1551.3,250.1 1554.7,250.0 1558.0,249.8 1561.4,249.7 1564.8,249.5 1568.1,249.3 1571.5,249.1 1574.9,248.9 1578.2,248.8 1581.6,248.7 1585.0,248.6 1588.3,248.6 1591.7,248.5 1595.1,248.5 1598.5,248.4 1601.8,248.3 1605.2,248.2 1608.6,248.0 1611.9,247.7 1615.3,247.6 1618.7,247.5 1622.0,247.4 1625.4,247.2 1628.8,247.1 1632.2,246.9 1635.5,246.7 1638.9,246.6 1642.3,246.4 1645.6,246.3 1649.0,246.2 1652.4,246.1 1655.8,246.0 1659.1,245.8 1662.5,245.7 1665.9,245.5 1669.2,245.4 1672.6,245.2 1676.0,245.0 1679.3,244.8 1682.7,244.6 1686.1,244.4 1689.5,244.2 1692.8,244.0 1696.2,243.8 1699.6,243.5 1702.9,243.2 1706.3,243.0 1709.7,242.8 1713.0,242.6 1716.4,242.4 1719.8,242.2 1723.2,242.0 1726.5,241.8 1729.9,241.7 1733.3,241.6 1736.6,241.6 1740.0,241.5" stroke="#b4682c" stroke-width="1.1" />
<polyline points="105.5,346.5 108.9,346.5 112.3,346.5 115.7,346.4 119.0,346.4 122.4,346.4 125.8,346.4 129.1,346.3 132.5,346.2 135.9,346.1 139.2,345.9 142.6,345.8 146.0,345.6 149.4,345.3 152.7,345.0 156.1,344.7 159.5,344.3 162.8,344.0 166.2,343.7 169.6,343.3 173.0,343.0 176.3,342.7 179.7,342.3 183.1,341.9 186.4,341.5 189.8,341.0 193.2,340.6 196.5,340.1 199.9,339.7 203.3,339.2 206.6,338.8 210.0,338.3 213.4,337.8 216.8,337.3 220.1,336.8 223.5,336.3 226.9,335.8 230.2,335.3 233.6,334.7 237.0,334.1 240.3,333.6 243.7,333.0 247.1,332.4 250.5,331.8 253.8,331.2 257.2,330.6 260.6,330.0 263.9,329.4 267.3,328.8 270.7,328.2 274.0,327.6 277.4,327.0 280.8,326.4 284.2,325.8 287.5,325.2 290.9,324.6 294.3,324.1 297.6,323.5 301.0,322.9 304.4,322.4 307.8,321.8 311.1,321.1 314.5,320.5 317.9,319.9 321.2,319.2 324.6,318.6 328.0,318.0 331.3,317.3 334.7,316.7 338.1,316.0 341.5,315.4 344.8,314.7 348.2,314.0 351.6,313.3 354.9,312.7 358.3,312.0 361.7,311.3 365.0,310.7 368.4,310.0 371.8,309.4 375.1,308.7 378.5,308.0 381.9,307.4 385.3,306.7 388.6,306.1 392.0,305.5 395.4,304.9 398.7,304.2 402.1,303.7 405.5,303.1 408.8,302.5 412.2,301.9 415.6,301.3 419.0,300.8 422.3,300.3 425.7,299.7 429.1,299.1 432.4,298.6 435.8,297.9 439.2,297.4 442.5,296.8 445.9,296.2 449.3,295.7 452.7,295.1 456.0,294.5 459.4,293.9 462.8,293.4 466.1,292.8 469.5,292.3 472.9,291.8 476.2,291.3 479.6,290.8 483.0,290.4 486.4,289.9 489.7,289.6 493.1,289.3 496.5,289.0 499.8,288.7 503.2,288.3 506.6,288.0 510.0,287.6 513.3,287.2 516.7,286.9 520.1,286.7 523.4,286.4 526.8,286.0 530.2,285.8 533.5,285.5 536.9,285.3 540.3,285.0 543.6,284.7 547.0,284.5 550.4,284.2 553.8,283.9 557.1,283.7 560.5,283.5 563.9,283.2 567.2,283.0 570.6,282.8 574.0,282.5 577.3,282.3 580.7,282.1 584.1,281.9 587.5,281.6 590.8,281.5 594.2,281.2 597.6,281.0 600.9,280.8 604.3,280.5 607.7,280.3 611.0,280.1 614.4,279.9 617.8,279.6 621.2,279.3 624.5,279.0 627.9,278.8 631.3,278.6 634.6,278.3 638.0,278.1 641.4,277.9 644.8,277.9 648.1,278.2 651.5,278.4 654.9,278.6 658.2,278.7 661.6,278.9 665.0,278.9 668.3,279.0 671.7,279.1 675.1,279.1 678.5,279.1 681.8,279.1 685.2,279.0 688.6,278.9 691.9,278.8 695.3,278.7 698.7,278.6 702.0,278.4 705.4,278.3 708.8,278.1 712.1,278.0 715.5,278.0 718.9,277.9 722.3,277.9 725.6,277.8 729.0,277.8 732.4,277.7 735.7,277.7 739.1,277.7 742.5,277.8 745.9,278.0 749.2,278.3 752.6,278.5 756.0,278.7 759.3,278.9 762.7,279.1 766.1,279.4 769.4,279.7 772.8,280.1 776.2,280.5 779.5,280.9 782.9,281.4 786.3,281.8 789.7,282.3 793.0,282.8 796.4,283.2 799.8,283.6 803.1,284.1 806.5,284.6 809.9,285.1 813.2,285.4 816.6,285.7 820.0,286.1 823.4,286.5 826.7,286.9 830.1,287.4 833.5,287.8 836.8,288.1 840.2,288.5 843.6,288.9 846.9,289.3 850.3,289.6 853.7,290.0 857.1,290.3 860.4,290.7 863.8,291.0 867.2,291.3 870.5,291.6 873.9,291.8 877.3,292.1 880.6,292.4 884.0,292.7 887.4,293.0 890.8,293.4 894.1,293.7 897.5,294.1 900.9,294.5 904.2,294.9 907.6,295.2 911.0,295.6 914.4,295.9 917.7,296.3 921.1,296.6 924.5,296.9 927.8,297.2 931.2,297.5 934.6,297.7 937.9,298.0 941.3,298.2 944.7,298.5 948.0,298.7 951.4,298.9 954.8,299.1 958.2,299.4 961.5,299.7 964.9,299.9 968.3,300.2 971.6,300.5 975.0,300.7 978.4,300.9 981.8,301.0 985.1,300.8 988.5,300.7 991.9,300.6 995.2,300.5 998.6,300.5 1002.0,300.5 1005.3,300.6 1008.7,300.6 1012.1,300.7 1015.4,300.8 1018.8,300.9 1022.2,301.1 1025.6,301.3 1028.9,301.4 1032.3,301.6 1035.7,301.8 1039.0,302.0 1042.4,302.3 1045.8,302.4 1049.2,302.6 1052.5,302.7 1055.9,302.7 1059.3,302.8 1062.6,302.8 1066.0,302.9 1069.4,302.9 1072.7,302.9 1076.1,302.8 1079.5,302.6 1082.8,302.4 1086.2,302.2 1089.6,302.0 1093.0,301.8 1096.3,301.6 1099.7,301.3 1103.1,301.1 1106.4,300.7 1109.8,300.4 1113.2,300.0 1116.5,299.6 1119.9,299.1 1123.3,298.6 1126.7,298.0 1130.0,297.5 1133.4,297.1 1136.8,296.6 1140.1,296.1 1143.5,295.4 1146.9,294.9 1150.2,294.3 1153.6,293.8 1157.0,293.3 1160.4,292.8 1163.7,292.2 1167.1,291.5 1170.5,290.9 1173.8,290.4 1177.2,289.9 1180.6,289.4 1183.9,289.0 1187.3,288.6 1190.7,288.2 1194.1,287.8 1197.4,287.5 1200.8,287.1 1204.2,286.6 1207.5,286.2 1210.9,285.8 1214.3,285.4 1217.7,284.9 1221.0,284.4 1224.4,284.2 1227.8,284.0 1231.1,283.6 1234.5,282.8 1237.9,281.7 1241.2,280.5 1244.6,279.3 1248.0,278.0 1251.3,276.8 1254.7,275.8 1258.1,274.7 1261.5,273.6 1264.8,272.5 1268.2,271.4 1271.6,270.3 1274.9,269.3 1278.3,268.3 1281.7,267.3 1285.0,266.3 1288.4,265.3 1291.8,264.2 1295.2,263.1 1298.5,262.0 1301.9,260.9 1305.3,259.7 1308.6,258.5 1312.0,257.4 1315.4,256.2 1318.8,255.0 1322.1,253.8 1325.5,252.5 1328.9,251.2 1332.2,249.9 1335.6,248.6 1339.0,247.2 1342.3,245.7 1345.7,244.2 1349.1,242.6 1352.5,241.0 1355.8,239.5 1359.2,238.0 1362.6,236.6 1365.9,235.5 1369.3,234.5 1372.7,233.2 1376.0,231.9 1379.4,230.7 1382.8,229.5 1386.2,228.3 1389.5,227.1 1392.9,225.9 1396.3,224.8 1399.6,223.6 1403.0,222.4 1406.4,221.3 1409.7,220.3 1413.1,219.2 1416.5,218.3 1419.8,217.6 1423.2,216.9 1426.6,216.5 1430.0,216.2 1433.3,215.7 1436.7,215.1 1440.1,214.4 1443.4,213.7 1446.8,213.1 1450.2,212.6 1453.5,212.1 1456.9,211.6 1460.3,211.1 1463.7,210.7 1467.0,210.3 1470.4,210.0 1473.8,209.7 1477.1,209.4 1480.5,209.1 1483.9,208.9 1487.2,209.2 1490.6,209.5 1494.0,209.8 1497.4,210.1 1500.7,210.3 1504.1,210.6 1507.5,210.8 1510.8,211.1 1514.2,211.5 1517.6,211.8 1521.0,212.1 1524.3,212.3 1527.7,212.5 1531.1,212.7 1534.4,213.0 1537.8,213.4 1541.2,213.8 1544.5,214.2 1547.9,214.5 1551.3,214.8 1554.7,215.0 1558.0,215.2 1561.4,215.1 1564.8,214.9 1568.1,214.9 1571.5,215.4 1574.9,216.1 1578.2,217.1 1581.6,218.1 1585.0,219.2 1588.3,220.3 1591.7,221.3 1595.1,222.2 1598.5,223.3 1601.8,224.2 1605.2,224.9 1608.6,225.6 1611.9,226.2 1615.3,226.9 1618.7,227.7 1622.0,228.5 1625.4,229.2 1628.8,229.9 1632.2,230.7 1635.5,231.4 1638.9,232.3 1642.3,233.1 1645.6,234.0 1649.0,234.9 1652.4,236.0 1655.8,236.9 1659.1,237.9 1662.5,238.8 1665.9,239.8 1669.2,240.8 1672.6,241.8 1676.0,242.9 1679.3,244.0 1682.7,245.1 1686.1,246.3 1689.5,247.4 1692.8,248.5 1696.2,249.5 1699.6,250.4 1702.9,250.9 1706.3,251.6 1709.7,252.4 1713.0,253.3 1716.4,254.1 1719.8,254.9 1723.2,255.7 1726.5,256.6 1729.9,257.5 1733.3,258.5 1736.6,259.5 1740.0,260.6" stroke="#5a63e6" stroke-width="1.0" />
<polyline points="105.5,347.9 108.9,347.8 112.3,347.7 115.7,347.6 119.0,347.5 122.4,347.4 125.8,347.3 129.1,347.1 132.5,346.9 135.9,346.7 139.2,346.4 142.6,346.2 146.0,345.9 149.4,345.5 152.7,345.0 156.1,344.5 159.5,343.9 162.8,343.4 166.2,342.9 169.6,342.4 173.0,341.8 176.3,341.2 179.7,340.7 183.1,340.0 186.4,339.4 189.8,338.8 193.2,338.1 196.5,337.4 199.9,336.8 203.3,336.1 206.6,335.4 210.0,334.8 213.4,334.2 216.8,333.4 220.1,332.7 223.5,332.0 226.9,331.3 230.2,330.5 233.6,329.7 237.0,328.9 240.3,328.1 243.7,327.3 247.1,326.6 250.5,325.8 253.8,324.9 257.2,324.1 260.6,323.2 263.9,322.4 267.3,321.6 270.7,320.8 274.0,319.9 277.4,319.1 280.8,318.3 284.2,317.4 287.5,316.7 290.9,315.8 294.3,315.1 297.6,314.3 301.0,313.5 304.4,312.7 307.8,312.0 311.1,311.2 314.5,310.4 317.9,309.6 321.2,308.8 324.6,308.0 328.0,307.3 331.3,306.6 334.7,305.9 338.1,305.3 341.5,304.5 344.8,303.7 348.2,303.1 351.6,302.4 354.9,301.6 358.3,301.0 361.7,300.2 365.0,299.5 368.4,298.8 371.8,298.1 375.1,297.4 378.5,296.8 381.9,296.1 385.3,295.5 388.6,294.9 392.0,294.4 395.4,293.8 398.7,293.3 402.1,292.9 405.5,292.5 408.8,292.2 412.2,291.8 415.6,291.5 419.0,291.2 422.3,290.9 425.7,290.5 429.1,290.2 432.4,289.9 435.8,289.6 439.2,289.3 442.5,289.0 445.9,288.7 449.3,288.5 452.7,288.3 456.0,287.9 459.4,287.6 462.8,287.4 466.1,287.1 469.5,286.9 472.9,286.7 476.2,286.5 479.6,286.2 483.0,286.0 486.4,285.7 489.7,285.6 493.1,285.4 496.5,285.3 499.8,285.1 503.2,284.8 506.6,284.7 510.0,284.4 513.3,284.2 516.7,284.0 520.1,283.8 523.4,283.5 526.8,283.4 530.2,283.2 533.5,282.9 536.9,282.7 540.3,282.5 543.6,282.2 547.0,282.0 550.4,281.7 553.8,281.4 557.1,281.2 560.5,280.9 563.9,280.7 567.2,280.5 570.6,280.2 574.0,280.0 577.3,279.8 580.7,279.4 584.1,279.3 587.5,279.1 590.8,278.8 594.2,278.6 597.6,278.4 600.9,278.1 604.3,277.8 607.7,277.6 611.0,277.3 614.4,277.1 617.8,276.8 621.2,276.5 624.5,276.2 627.9,276.0 631.3,275.8 634.6,275.5 638.0,275.3 641.4,275.1 644.8,275.2 648.1,275.6 651.5,276.0 654.9,276.2 658.2,276.4 661.6,276.6 665.0,276.8 668.3,276.9 671.7,277.0 675.1,277.0 678.5,277.0 681.8,277.1 685.2,277.0 688.6,277.0 691.9,276.9 695.3,276.8 698.7,276.7 702.0,276.5 705.4,276.3 708.8,276.3 712.1,276.2 715.5,276.2 718.9,276.2 722.3,276.2 725.6,276.3 729.0,276.3 732.4,276.3 735.7,276.4 739.1,276.6 742.5,276.9 745.9,277.2 749.2,277.5 752.6,277.9 756.0,278.3 759.3,278.7 762.7,279.2 766.1,279.7 769.4,280.3 772.8,280.9 776.2,281.5 779.5,282.2 782.9,282.8 786.3,283.6 789.7,284.3 793.0,285.0 796.4,285.7 799.8,286.3 803.1,287.0 806.5,287.7 809.9,288.4 813.2,289.1 816.6,289.6 820.0,290.2 823.4,290.7 826.7,291.4 830.1,292.1 833.5,292.8 836.8,293.4 840.2,294.0 843.6,294.6 846.9,295.1 850.3,295.7 853.7,296.3 857.1,296.9 860.4,297.4 863.8,298.0 867.2,298.4 870.5,298.9 873.9,299.4 877.3,299.9 880.6,300.4 884.0,300.8 887.4,301.3 890.8,301.8 894.1,302.3 897.5,302.5 900.9,302.4 904.2,302.4 907.6,302.4 911.0,302.4 914.4,302.5 917.7,302.6 921.1,302.7 924.5,302.8 927.8,302.9 931.2,303.1 934.6,303.2 937.9,303.4 941.3,303.5 944.7,303.7 948.0,303.9 951.4,304.1 954.8,304.4 958.2,304.7 961.5,305.0 964.9,305.2 968.3,305.4 971.6,305.6 975.0,305.7 978.4,305.9 981.8,306.1 985.1,306.3 988.5,306.6 991.9,306.7 995.2,306.7 998.6,306.6 1002.0,306.5 1005.3,306.4 1008.7,306.2 1012.1,306.1 1015.4,306.0 1018.8,305.8 1022.2,305.5 1025.6,305.2 1028.9,304.8 1032.3,304.4 1035.7,304.0 1039.0,303.4 1042.4,302.9 1045.8,302.4 1049.2,302.0 1052.5,301.6 1055.9,301.1 1059.3,300.5 1062.6,300.0 1066.0,299.6 1069.4,299.2 1072.7,298.8 1076.1,298.4 1079.5,297.9 1082.8,297.3 1086.2,296.8 1089.6,296.4 1093.0,296.1 1096.3,295.7 1099.7,295.3 1103.1,295.0 1106.4,294.6 1109.8,294.2 1113.2,293.9 1116.5,293.6 1119.9,293.3 1123.3,292.9 1126.7,292.6 1130.0,292.2 1133.4,291.9 1136.8,291.5 1140.1,291.0 1143.5,290.5 1146.9,290.0 1150.2,289.4 1153.6,288.7 1157.0,288.1 1160.4,287.4 1163.7,286.8 1167.1,286.3 1170.5,285.7 1173.8,285.2 1177.2,284.7 1180.6,284.2 1183.9,283.8 1187.3,283.5 1190.7,283.3 1194.1,283.0 1197.4,282.8 1200.8,282.5 1204.2,282.1 1207.5,281.7 1210.9,281.3 1214.3,280.9 1217.7,280.4 1221.0,279.8 1224.4,279.6 1227.8,279.6 1231.1,279.2 1234.5,278.3 1237.9,277.0 1241.2,275.5 1244.6,274.0 1248.0,272.4 1251.3,270.9 1254.7,269.5 1258.1,268.2 1261.5,266.8 1264.8,265.3 1268.2,263.9 1271.6,262.4 1274.9,261.0 1278.3,259.6 1281.7,258.2 1285.0,256.8 1288.4,255.4 1291.8,254.0 1295.2,252.5 1298.5,251.1 1301.9,249.6 1305.3,248.1 1308.6,246.6 1312.0,245.2 1315.4,243.7 1318.8,242.3 1322.1,240.9 1325.5,239.4 1328.9,237.9 1332.2,236.4 1335.6,234.8 1339.0,233.1 1342.3,231.2 1345.7,229.4 1349.1,227.5 1352.5,225.5 1355.8,223.7 1359.2,221.9 1362.6,220.2 1365.9,218.9 1369.3,217.6 1372.7,216.1 1376.0,214.5 1379.4,213.1 1382.8,211.6 1386.2,210.3 1389.5,208.9 1392.9,207.6 1396.3,206.3 1399.6,205.0 1403.0,203.7 1406.4,202.6 1409.7,201.4 1413.1,200.3 1416.5,199.4 1419.8,198.8 1423.2,198.1 1426.6,197.9 1430.0,197.8 1433.3,197.3 1436.7,196.8 1440.1,196.0 1443.4,195.2 1446.8,194.5 1450.2,194.0 1453.5,193.6 1456.9,193.2 1460.3,192.7 1463.7,192.4 1467.0,192.1 1470.4,192.0 1473.8,191.8 1477.1,191.3 1480.5,190.7 1483.9,190.4 1487.2,191.2 1490.6,192.4 1494.0,193.8 1497.4,195.2 1500.7,196.6 1504.1,197.9 1507.5,199.1 1510.8,200.4 1514.2,201.8 1517.6,203.3 1521.0,204.8 1524.3,206.1 1527.7,207.5 1531.1,208.9 1534.4,210.4 1537.8,211.9 1541.2,213.4 1544.5,215.0 1547.9,216.5 1551.3,217.9 1554.7,219.2 1558.0,220.5 1561.4,221.7 1564.8,222.9 1568.1,224.2 1571.5,225.5 1574.9,226.8 1578.2,228.3 1581.6,229.8 1585.0,231.4 1588.3,233.1 1591.7,235.0 1595.1,236.9 1598.5,238.9 1601.8,240.8 1605.2,242.4 1608.6,243.8 1611.9,245.2 1615.3,246.7 1618.7,247.8 1622.0,248.8 1625.4,250.0 1628.8,251.4 1632.2,252.6 1635.5,253.7 1638.9,254.9 1642.3,256.1 1645.6,257.4 1649.0,258.7 1652.4,260.1 1655.8,261.6 1659.1,262.9 1662.5,264.2 1665.9,265.4 1669.2,266.4 1672.6,267.1 1676.0,267.7 1679.3,267.9 1682.7,267.9 1686.1,268.3 1689.5,268.7 1692.8,269.2 1696.2,269.7 1699.6,269.9 1702.9,270.1 1706.3,270.3 1709.7,270.5 1713.0,270.8 1716.4,271.0 1719.8,271.1 1723.2,271.2 1726.5,271.4 1729.9,271.8 1733.3,272.2 1736.6,272.5 1740.0,272.3" stroke="#c46cf2" stroke-width="1.3" />
<polyline points="105.5,348.0 108.9,347.8 112.3,347.5 115.7,347.3 119.0,347.0 122.4,346.8 125.8,346.5 129.1,346.3 132.5,345.8 135.9,345.4 139.2,345.0 142.6,344.7 146.0,344.0 149.4,343.3 152.7,342.6 156.1,341.8 159.5,340.9 162.8,340.1 166.2,339.3 169.6,338.4 173.0,337.5 176.3,336.6 179.7,335.7 183.1,334.7 186.4,333.8 189.8,332.8 193.2,331.7 196.5,330.7 199.9,329.7 203.3,328.7 206.6,327.6 210.0,326.7 213.4,325.6 216.8,324.5 220.1,323.3 223.5,322.3 226.9,321.4 230.2,320.3 233.6,319.2 237.0,318.2 240.3,317.0 243.7,316.0 247.1,315.1 250.5,314.1 253.8,313.1 257.2,312.1 260.6,311.1 263.9,310.1 267.3,309.2 270.7,308.2 274.0,307.2 277.4,306.2 280.8,305.3 284.2,304.4 287.5,303.4 290.9,302.5 294.3,301.7 297.6,300.8 301.0,300.0 304.4,299.3 307.8,298.5 311.1,297.6 314.5,297.0 317.9,296.4 321.2,295.9 324.6,295.4 328.0,295.1 331.3,294.5 334.7,294.0 338.1,293.7 341.5,293.2 344.8,292.7 348.2,292.4 351.6,292.0 354.9,291.6 358.3,291.3 361.7,290.9 365.0,290.6 368.4,290.3 371.8,290.0 375.1,289.7 378.5,289.4 381.9,289.1 385.3,288.9 388.6,288.8 392.0,288.6 395.4,288.3 398.7,288.1 402.1,288.1 405.5,288.0 408.8,287.9 412.2,287.7 415.6,287.6 419.0,287.4 422.3,287.4 425.7,287.2 429.1,287.1 432.4,287.0 435.8,286.7 439.2,286.5 442.5,286.4 445.9,286.2 449.3,286.1 452.7,285.9 456.0,285.6 459.4,285.3 462.8,285.1 466.1,284.9 469.5,284.6 472.9,284.3 476.2,284.1 479.6,284.0 483.0,283.7 486.4,283.4 489.7,283.3 493.1,283.1 496.5,282.9 499.8,282.8 503.2,282.6 506.6,282.3 510.0,282.0 513.3,281.8 516.7,281.5 520.1,281.3 523.4,281.1 526.8,280.8 530.2,280.7 533.5,280.5 536.9,280.2 540.3,280.0 543.6,279.7 547.0,279.5 550.4,279.3 553.8,279.0 557.1,278.6 560.5,278.3 563.9,278.1 567.2,277.8 570.6,277.4 574.0,277.0 577.3,276.7 580.7,276.5 584.1,276.2 587.5,275.9 590.8,275.6 594.2,275.2 597.6,275.0 600.9,274.6 604.3,274.3 607.7,274.0 611.0,273.7 614.4,273.5 617.8,273.1 621.2,272.7 624.5,272.4 627.9,272.3 631.3,272.0 634.6,271.8 638.0,271.6 641.4,271.4 644.8,271.7 648.1,272.4 651.5,273.1 654.9,273.8 658.2,274.2 661.6,274.6 665.0,274.9 668.3,275.3 671.7,275.6 675.1,275.9 678.5,276.2 681.8,276.4 685.2,276.5 688.6,276.6 691.9,276.6 695.3,276.6 698.7,276.5 702.0,276.4 705.4,276.3 708.8,276.3 712.1,276.4 715.5,276.5 718.9,276.6 722.3,276.8 725.6,277.0 729.0,277.2 732.4,277.4 735.7,277.7 739.1,278.1 742.5,278.6 745.9,279.3 749.2,280.1 752.6,280.8 756.0,281.5 759.3,282.2 762.7,283.0 766.1,283.8 769.4,284.8 772.8,285.9 776.2,287.0 779.5,288.1 782.9,289.2 786.3,290.5 789.7,292.0 793.0,293.2 796.4,294.2 799.8,295.3 803.1,296.4 806.5,297.6 809.9,298.7 813.2,299.2 816.6,299.1 820.0,299.1 823.4,299.2 826.7,299.6 830.1,300.1 833.5,300.6 836.8,301.0 840.2,301.4 843.6,301.9 846.9,302.4 850.3,302.9 853.7,303.5 857.1,304.1 860.4,304.8 863.8,305.4 867.2,306.1 870.5,306.8 873.9,307.4 877.3,308.0 880.6,308.5 884.0,309.0 887.4,309.4 890.8,309.9 894.1,310.4 897.5,311.0 900.9,311.6 904.2,312.1 907.6,312.4 911.0,312.5 914.4,312.5 917.7,312.5 921.1,312.4 924.5,312.3 927.8,312.1 931.2,311.9 934.6,311.6 937.9,311.1 941.3,310.6 944.7,310.0 948.0,309.2 951.4,308.5 954.8,307.7 958.2,306.9 961.5,306.3 964.9,305.7 968.3,305.2 971.6,304.5 975.0,303.8 978.4,303.2 981.8,302.7 985.1,302.5 988.5,302.2 991.9,302.0 995.2,301.5 998.6,300.9 1002.0,300.5 1005.3,300.2 1008.7,299.8 1012.1,299.5 1015.4,299.2 1018.8,299.0 1022.2,298.7 1025.6,298.4 1028.9,298.1 1032.3,297.8 1035.7,297.6 1039.0,297.3 1042.4,297.1 1045.8,296.9 1049.2,296.6 1052.5,296.4 1055.9,296.0 1059.3,295.7 1062.6,295.3 1066.0,294.8 1069.4,294.2 1072.7,293.7 1076.1,293.2 1079.5,292.7 1082.8,292.4 1086.2,292.0 1089.6,291.6 1093.0,291.3 1096.3,291.0 1099.7,290.8 1103.1,290.5 1106.4,290.3 1109.8,290.2 1113.2,290.0 1116.5,289.9 1119.9,289.8 1123.3,289.4 1126.7,289.2 1130.0,288.8 1133.4,288.4 1136.8,288.0 1140.1,287.6 1143.5,287.1 1146.9,286.5 1150.2,285.9 1153.6,285.1 1157.0,284.4 1160.4,283.6 1163.7,282.8 1167.1,282.1 1170.5,281.3 1173.8,280.6 1177.2,279.9 1180.6,279.3 1183.9,278.7 1187.3,278.3 1190.7,277.8 1194.1,277.3 1197.4,276.9 1200.8,276.3 1204.2,275.7 1207.5,275.2 1210.9,274.6 1214.3,273.9 1217.7,273.2 1221.0,272.5 1224.4,272.3 1227.8,272.4 1231.1,272.0 1234.5,270.8 1237.9,269.2 1241.2,267.3 1244.6,265.3 1248.0,263.3 1251.3,261.3 1254.7,259.6 1258.1,257.8 1261.5,255.9 1264.8,254.0 1268.2,252.1 1271.6,250.1 1274.9,248.3 1278.3,246.4 1281.7,244.6 1285.0,242.7 1288.4,240.8 1291.8,239.0 1295.2,237.1 1298.5,235.2 1301.9,233.3 1305.3,231.4 1308.6,229.5 1312.0,227.7 1315.4,225.8 1318.8,224.1 1322.1,222.5 1325.5,220.7 1328.9,218.9 1332.2,217.1 1335.6,215.2 1339.0,213.0 1342.3,210.8 1345.7,208.4 1349.1,205.9 1352.5,203.3 1355.8,200.8 1359.2,198.3 1362.6,195.9 1365.9,194.2 1369.3,192.6 1372.7,190.7 1376.0,188.6 1379.4,186.8 1382.8,185.0 1386.2,183.3 1389.5,181.7 1392.9,179.6 1396.3,177.2 1399.6,175.3 1403.0,174.0 1406.4,173.5 1409.7,173.2 1413.1,173.0 1416.5,173.4 1419.8,173.9 1423.2,174.2 1426.6,175.2 1430.0,176.5 1433.3,177.3 1436.7,178.0 1440.1,178.7 1443.4,179.1 1446.8,179.7 1450.2,180.5 1453.5,181.5 1456.9,182.3 1460.3,183.2 1463.7,184.3 1467.0,185.5 1470.4,186.8 1473.8,188.0 1477.1,189.3 1480.5,190.6 1483.9,192.0 1487.2,194.2 1490.6,196.6 1494.0,198.9 1497.4,201.2 1500.7,203.5 1504.1,205.9 1507.5,208.7 1510.8,211.5 1514.2,214.6 1517.6,217.7 1521.0,220.9 1524.3,223.7 1527.7,226.6 1531.1,229.6 1534.4,231.9 1537.8,234.2 1541.2,236.9 1544.5,239.8 1547.9,242.2 1551.3,244.6 1554.7,246.6 1558.0,248.7 1561.4,250.7 1564.8,252.6 1568.1,254.6 1571.5,256.8 1574.9,258.8 1578.2,261.0 1581.6,263.1 1585.0,265.0 1588.3,266.7 1591.7,268.3 1595.1,269.2 1598.5,270.0 1601.8,271.0 1605.2,271.8 1608.6,272.4 1611.9,273.2 1615.3,274.2 1618.7,274.9 1622.0,275.5 1625.4,276.0 1628.8,276.6 1632.2,277.1 1635.5,277.4 1638.9,277.7 1642.3,278.2 1645.6,278.7 1649.0,279.3 1652.4,279.9 1655.8,279.6 1659.1,279.2 1662.5,278.8 1665.9,278.4 1669.2,278.1 1672.6,277.6 1676.0,277.1 1679.3,276.5 1682.7,275.7 1686.1,274.8 1689.5,274.0 1692.8,273.3 1696.2,272.4 1699.6,271.2 1702.9,270.0 1706.3,269.0 1709.7,267.9 1713.0,266.9 1716.4,266.1 1719.8,265.3 1723.2,264.8 1726.5,264.4 1729.9,264.4 1733.3,264.4 1736.6,264.5 1740.0,264.5" stroke="#e9c94a" stroke-width="1.1" />
<polyline points="105.5,328.5 108.9,328.1 112.3,327.2 115.7,327.0 119.0,326.9 122.4,327.2 125.8,326.1 129.1,326.2 132.5,325.2 135.9,324.4 139.2,321.9 142.6,320.9 146.0,319.1 149.4,315.9 152.7,311.6 156.1,307.1 159.5,302.5 162.8,298.8 166.2,296.4 169.6,293.3 173.0,291.0 176.3,289.1 179.7,286.8 183.1,284.2 186.4,282.4 189.8,281.2 193.2,279.4 196.5,277.9 199.9,277.7 203.3,277.9 206.6,278.3 210.0,278.6 213.4,279.8 216.8,279.6 220.1,279.8 223.5,280.2 226.9,283.3 230.2,283.9 233.6,284.3 237.0,284.0 240.3,282.8 243.7,282.2 247.1,281.4 250.5,281.9 253.8,280.8 257.2,281.1 260.6,281.5 263.9,281.0 267.3,281.1 270.7,281.1 274.0,281.1 277.4,280.7 280.8,280.9 284.2,281.4 287.5,282.2 290.9,282.6 294.3,283.6 297.6,284.2 301.0,284.3 304.4,284.3 307.8,284.4 311.1,284.0 314.5,284.1 317.9,284.2 321.2,283.8 324.6,283.2 328.0,283.3 331.3,281.8 334.7,281.6 338.1,281.8 341.5,280.8 344.8,280.5 348.2,280.5 351.6,279.9 354.9,279.6 358.3,279.5 361.7,278.7 365.0,278.4 368.4,278.1 371.8,278.3 375.1,278.3 378.5,278.3 381.9,278.1 385.3,278.5 388.6,278.8 392.0,279.0 395.4,279.0 398.7,279.2 402.1,279.0 405.5,279.0 408.8,279.0 412.2,278.2 415.6,278.5 419.0,278.4 422.3,278.9 425.7,279.0 429.1,278.6 432.4,278.5 435.8,277.1 439.2,277.0 442.5,276.6 445.9,275.9 449.3,275.8 452.7,275.7 456.0,274.4 459.4,273.6 462.8,273.1 466.1,272.7 469.5,272.0 472.9,271.2 476.2,271.3 479.6,271.1 483.0,270.0 486.4,270.1 489.7,270.6 493.1,270.8 496.5,270.8 499.8,270.8 503.2,270.2 506.6,270.5 510.0,269.2 513.3,268.6 516.7,268.4 520.1,268.2 523.4,267.9 526.8,267.6 530.2,267.4 533.5,267.6 536.9,268.1 540.3,267.7 543.6,267.2 547.0,267.2 550.4,266.9 553.8,266.2 557.1,265.5 560.5,265.9 563.9,265.9 567.2,265.6 570.6,265.2 574.0,265.5 577.3,265.5 580.7,265.5 584.1,265.8 587.5,265.7 590.8,265.8 594.2,265.3 597.6,265.0 600.9,264.2 604.3,263.0 607.7,262.7 611.0,262.0 614.4,262.2 617.8,261.6 621.2,260.3 624.5,259.9 627.9,260.0 631.3,260.2 634.6,260.3 638.0,260.2 641.4,260.2 644.8,252.4 648.1,237.8 651.5,231.7 654.9,228.5 658.2,226.9 661.6,226.2 665.0,226.4 668.3,226.7 671.7,227.1 675.1,228.0 678.5,229.1 681.8,230.1 685.2,231.6 688.6,233.3 691.9,234.2 695.3,235.3 698.7,235.6 702.0,236.2 705.4,237.6 708.8,239.0 712.1,239.9 715.5,241.5 718.9,243.2 722.3,245.0 725.6,246.4 729.0,246.0 732.4,249.6 735.7,252.8 739.1,255.3 742.5,256.1 745.9,255.2 749.2,253.5 752.6,251.6 756.0,249.7 759.3,248.2 762.7,246.5 766.1,244.5 769.4,242.9 772.8,241.5 776.2,240.8 779.5,240.8 782.9,241.8 786.3,243.3 789.7,245.1 793.0,248.1 796.4,251.5 799.8,254.8 803.1,258.5 806.5,262.2 809.9,266.6 813.2,272.1 816.6,278.2 820.0,284.4 823.4,289.3 826.7,292.3 830.1,294.3 833.5,296.1 836.8,297.7 840.2,299.0 843.6,300.6 846.9,301.2 850.3,300.7 853.7,300.2 857.1,299.0 860.4,297.5 863.8,295.8 867.2,293.7 870.5,292.5 873.9,292.1 877.3,290.7 880.6,289.3 884.0,288.3 887.4,287.9 890.8,288.8 894.1,289.4 897.5,289.8 900.9,289.8 904.2,289.8 907.6,289.6 911.0,290.3 914.4,292.5 917.7,293.9 921.1,294.1 924.5,293.5 927.8,292.9 931.2,292.3 934.6,290.7 937.9,289.2 941.3,287.4 944.7,285.3 948.0,282.5 951.4,280.6 954.8,279.4 958.2,278.4 961.5,277.6 964.9,277.0 968.3,276.5 971.6,275.8 975.0,275.5 978.4,275.3 981.8,276.2 985.1,277.8 988.5,279.6 991.9,280.5 995.2,281.3 998.6,281.7 1002.0,282.4 1005.3,283.1 1008.7,283.2 1012.1,283.4 1015.4,283.5 1018.8,283.5 1022.2,283.7 1025.6,284.0 1028.9,284.5 1032.3,286.1 1035.7,286.3 1039.0,286.2 1042.4,286.0 1045.8,285.4 1049.2,284.9 1052.5,284.2 1055.9,283.1 1059.3,281.7 1062.6,280.2 1066.0,278.7 1069.4,277.6 1072.7,276.5 1076.1,275.4 1079.5,274.5 1082.8,273.8 1086.2,273.7 1089.6,273.7 1093.0,273.7 1096.3,273.8 1099.7,274.0 1103.1,274.5 1106.4,275.0 1109.8,275.5 1113.2,275.9 1116.5,276.5 1119.9,276.2 1123.3,274.5 1126.7,274.0 1130.0,272.7 1133.4,271.8 1136.8,270.2 1140.1,268.3 1143.5,265.0 1146.9,261.9 1150.2,259.0 1153.6,256.0 1157.0,253.5 1160.4,250.5 1163.7,248.1 1167.1,246.2 1170.5,245.0 1173.8,244.2 1177.2,243.8 1180.6,243.9 1183.9,244.4 1187.3,245.3 1190.7,246.1 1194.1,247.1 1197.4,248.1 1200.8,249.2 1204.2,249.9 1207.5,249.9 1210.9,250.3 1214.3,249.9 1217.7,249.4 1221.0,247.4 1224.4,246.5 1227.8,241.7 1231.1,241.7 1234.5,231.3 1237.9,212.9 1241.2,194.2 1244.6,177.0 1248.0,162.1 1251.3,151.1 1254.7,144.4 1258.1,138.1 1261.5,131.5 1264.8,125.4 1268.2,120.0 1271.6,115.8 1274.9,113.0 1278.3,111.1 1281.7,109.7 1285.0,108.3 1288.4,107.3 1291.8,106.7 1295.2,106.2 1298.5,106.6 1301.9,107.1 1305.3,108.0 1308.6,115.9 1312.0,135.2 1315.4,154.8 1318.8,163.7 1322.1,164.9 1325.5,163.3 1328.9,161.6 1332.2,159.3 1335.6,156.5 1339.0,151.2 1342.3,145.4 1345.7,138.8 1349.1,132.0 1352.5,126.5 1355.8,123.6 1359.2,121.1 1362.6,119.9 1365.9,120.1 1369.3,120.4 1372.7,121.2 1376.0,120.8 1379.4,121.1 1382.8,121.7 1386.2,122.0 1389.5,122.3 1392.9,122.4 1396.3,122.7 1399.6,122.8 1403.0,123.3 1406.4,123.5 1409.7,123.4 1413.1,123.1 1416.5,120.2 1419.8,114.2 1423.2,110.2 1426.6,99.0 1430.0,91.1 1433.3,92.5 1436.7,95.9 1440.1,99.2 1443.4,104.2 1446.8,108.8 1450.2,107.7 1453.5,106.6 1456.9,108.6 1460.3,114.2 1463.7,116.6 1467.0,119.7 1470.4,122.5 1473.8,127.2 1477.1,132.5 1480.5,138.8 1483.9,145.9 1487.2,149.2 1490.6,150.3 1494.0,155.6 1497.4,163.1 1500.7,167.7 1504.1,169.2 1507.5,171.0 1510.8,168.9 1514.2,166.1 1517.6,166.1 1521.0,168.0 1524.3,172.4 1527.7,179.1 1531.1,184.3 1534.4,188.5 1537.8,192.2 1541.2,197.6 1544.5,205.2 1547.9,212.3 1551.3,218.7 1554.7,224.7 1558.0,231.9 1561.4,240.2 1564.8,248.9 1568.1,257.1 1571.5,255.3 1574.9,254.0 1578.2,253.6 1581.6,253.5 1585.0,253.8 1588.3,253.7 1591.7,253.8 1595.1,253.8 1598.5,253.9 1601.8,253.4 1605.2,250.1 1608.6,242.8 1611.9,237.4 1615.3,236.6 1618.7,236.1 1622.0,235.3 1625.4,234.2 1628.8,234.3 1632.2,232.8 1635.5,231.1 1638.9,229.9 1642.3,229.1 1645.6,228.6 1649.0,228.9 1652.4,229.1 1655.8,229.1 1659.1,229.0 1662.5,229.1 1665.9,229.1 1669.2,230.1 1672.6,232.6 1676.0,234.9 1679.3,237.9 1682.7,242.1 1686.1,242.9 1689.5,242.0 1692.8,243.0 1696.2,241.7 1699.6,236.5 1702.9,233.5 1706.3,231.9 1709.7,230.8 1713.0,229.8 1716.4,229.2 1719.8,228.1 1723.2,227.5 1726.5,227.1 1729.9,227.0 1733.3,227.1 1736.6,227.6 1740.0,228.1" stroke="#f0a24a" stroke-width="1.1" />
<polyline points="105.5,362.0 108.9,361.4 112.3,361.2 115.7,360.3 119.0,359.3 122.4,357.9 125.8,357.8 129.1,356.4 132.5,355.5 135.9,354.6 139.2,355.6 142.6,355.7 146.0,355.0 149.4,356.0 152.7,357.8 156.1,359.4 159.5,361.2 162.8,362.7 166.2,362.7 169.6,363.6 173.0,363.1 176.3,362.5 179.7,362.2 183.1,362.0 186.4,360.9 189.8,359.5 193.2,358.0 196.5,356.6 199.9,354.0 203.3,350.8 206.6,347.2 210.0,344.2 213.4,340.0 216.8,337.4 220.1,334.4 223.5,331.6 226.9,325.9 230.2,323.1 233.6,320.6 237.0,319.2 240.3,318.8 243.7,318.2 247.1,317.5 250.5,315.4 253.8,314.9 257.2,313.3 260.6,311.5 263.9,310.5 267.3,309.6 270.7,308.6 274.0,307.1 277.4,306.7 280.8,305.9 284.2,304.4 287.5,302.9 290.9,301.9 294.3,300.3 297.6,299.0 301.0,298.7 304.4,298.5 307.8,298.0 311.1,297.4 314.5,296.9 317.9,296.7 321.2,296.6 324.6,296.9 328.0,296.6 331.3,297.5 334.7,297.2 338.1,297.2 341.5,297.5 344.8,297.5 348.2,297.5 351.6,297.4 354.9,297.3 358.3,297.3 361.7,297.6 365.0,297.4 368.4,297.3 371.8,296.7 375.1,296.1 378.5,295.6 381.9,295.2 385.3,294.1 388.6,293.5 392.0,293.0 395.4,293.0 398.7,292.4 402.1,292.6 405.5,292.7 408.8,292.7 412.2,292.6 415.6,292.5 419.0,292.4 422.3,291.7 425.7,291.6 429.1,291.7 432.4,291.4 435.8,292.3 439.2,292.3 442.5,292.3 445.9,292.7 449.3,292.7 452.7,292.6 456.0,293.1 459.4,293.4 462.8,293.4 466.1,293.6 469.5,293.7 472.9,293.6 476.2,293.2 479.6,293.1 483.0,293.4 486.4,292.0 489.7,290.9 493.1,290.1 496.5,290.1 499.8,289.4 503.2,289.2 506.6,288.0 510.0,288.4 513.3,288.2 516.7,287.7 520.1,287.7 523.4,287.2 526.8,286.8 530.2,286.7 533.5,285.8 536.9,284.6 540.3,284.6 543.6,284.7 547.0,284.2 550.4,284.0 553.8,284.1 557.1,284.3 560.5,283.0 563.9,282.3 567.2,282.3 570.6,282.4 574.0,281.2 577.3,280.5 580.7,279.5 584.1,278.6 587.5,278.4 590.8,277.9 594.2,278.1 597.6,278.0 600.9,278.2 604.3,278.5 607.7,278.4 611.0,278.4 614.4,277.7 617.8,277.5 621.2,277.9 624.5,277.6 627.9,277.3 631.3,276.4 634.6,275.9 638.0,275.7 641.4,275.8 644.8,285.4 648.1,303.7 651.5,313.0 654.9,319.0 658.2,323.2 661.6,326.2 665.0,328.4 668.3,330.0 671.7,331.2 675.1,331.9 678.5,332.2 681.8,332.3 685.2,332.1 688.6,331.5 691.9,331.2 695.3,330.7 698.7,330.6 702.0,330.2 705.4,329.5 708.8,328.8 712.1,328.4 715.5,327.7 718.9,327.0 722.3,326.2 725.6,325.7 729.0,325.1 732.4,318.5 735.7,313.1 739.1,309.3 742.5,308.3 745.9,309.5 749.2,312.0 752.6,314.8 756.0,317.9 759.3,320.7 762.7,324.2 766.1,328.4 769.4,332.8 772.8,337.5 776.2,341.7 779.5,345.7 782.9,349.1 786.3,352.5 789.7,355.8 793.0,356.8 796.4,357.0 799.8,357.0 803.1,356.9 806.5,357.0 809.9,356.0 813.2,353.5 816.6,349.9 820.0,345.9 823.4,342.8 826.7,341.6 830.1,341.4 833.5,340.8 836.8,339.9 840.2,339.1 843.6,338.0 846.9,337.6 850.3,337.9 853.7,338.1 857.1,338.6 860.4,339.1 863.8,339.4 867.2,339.8 870.5,338.8 873.9,336.6 877.3,336.2 880.6,336.2 884.0,335.7 887.4,334.4 890.8,331.7 894.1,329.6 897.5,328.5 900.9,328.3 904.2,328.3 907.6,328.0 911.0,326.0 914.4,321.9 917.7,319.2 921.1,318.0 924.5,317.5 927.8,317.0 931.2,316.7 934.6,316.9 937.9,316.9 941.3,317.3 944.7,318.0 948.0,319.2 951.4,319.9 954.8,320.2 958.2,320.4 961.5,320.5 964.9,320.4 968.3,320.2 971.6,319.9 975.0,319.3 978.4,318.6 981.8,316.6 985.1,314.0 988.5,311.3 991.9,309.8 995.2,308.4 998.6,307.6 1002.0,306.5 1005.3,305.4 1008.7,305.1 1012.1,304.8 1015.4,304.5 1018.8,304.7 1022.2,304.9 1025.6,304.9 1028.9,304.6 1032.3,303.6 1035.7,303.5 1039.0,303.5 1042.4,303.6 1045.8,304.0 1049.2,304.3 1052.5,304.6 1055.9,305.4 1059.3,306.2 1062.6,307.0 1066.0,307.6 1069.4,307.4 1072.7,307.2 1076.1,306.9 1079.5,306.7 1082.8,306.2 1086.2,305.3 1089.6,304.3 1093.0,303.3 1096.3,302.1 1099.7,301.0 1103.1,299.4 1106.4,297.8 1109.8,296.3 1113.2,295.0 1116.5,293.5 1119.9,293.0 1123.3,293.5 1126.7,293.0 1130.0,293.2 1133.4,292.8 1136.8,293.1 1140.1,293.7 1143.5,295.4 1146.9,296.9 1150.2,298.2 1153.6,299.4 1157.0,300.2 1160.4,301.4 1163.7,301.9 1167.1,302.0 1170.5,301.3 1173.8,300.2 1177.2,299.0 1180.6,297.4 1183.9,295.5 1187.3,293.8 1190.7,292.2 1194.1,290.3 1197.4,288.4 1200.8,286.0 1204.2,283.7 1207.5,282.7 1210.9,280.9 1214.3,279.9 1217.7,279.0 1221.0,279.3 1224.4,280.6 1227.8,287.3 1231.1,287.4 1234.5,294.9 1237.9,308.6 1241.2,321.5 1244.6,332.5 1248.0,341.0 1251.3,346.0 1254.7,347.6 1258.1,348.6 1261.5,349.4 1264.8,349.4 1268.2,348.4 1271.6,345.6 1274.9,341.8 1278.3,337.2 1281.7,332.1 1285.0,327.4 1288.4,322.4 1291.8,316.8 1295.2,310.8 1298.5,304.4 1301.9,297.6 1305.3,290.9 1308.6,274.9 1312.0,246.5 1315.4,219.5 1318.8,206.7 1322.1,203.5 1325.5,203.7 1328.9,204.5 1332.2,205.9 1335.6,207.1 1339.0,208.9 1342.3,210.9 1345.7,213.8 1349.1,216.7 1352.5,218.5 1355.8,218.3 1359.2,217.4 1362.6,215.2 1365.9,214.9 1369.3,214.3 1372.7,211.9 1376.0,210.0 1379.4,209.1 1382.8,207.3 1386.2,206.7 1389.5,205.7 1392.9,205.2 1396.3,204.4 1399.6,204.1 1403.0,202.5 1406.4,202.1 1409.7,202.2 1413.1,202.9 1416.5,207.9 1419.8,217.5 1423.2,226.5 1426.6,245.6 1430.0,262.4 1433.3,268.0 1436.7,271.2 1440.1,273.6 1443.4,273.9 1446.8,274.9 1450.2,279.3 1453.5,284.4 1456.9,287.6 1460.3,287.9 1463.7,290.5 1467.0,293.2 1470.4,296.0 1473.8,297.0 1477.1,297.1 1480.5,296.4 1483.9,295.4 1487.2,302.0 1490.6,310.4 1494.0,314.3 1497.4,315.7 1500.7,318.2 1504.1,322.8 1507.5,327.0 1510.8,332.5 1514.2,338.7 1517.6,344.3 1521.0,348.4 1524.3,349.6 1527.7,349.1 1531.1,350.5 1534.4,351.8 1537.8,353.5 1541.2,353.7 1544.5,352.0 1547.9,349.5 1551.3,346.6 1554.7,343.3 1558.0,338.7 1561.4,332.9 1564.8,326.3 1568.1,319.9 1571.5,320.6 1574.9,320.4 1578.2,320.3 1581.6,320.2 1585.0,320.4 1588.3,321.2 1591.7,321.6 1595.1,321.8 1598.5,321.3 1601.8,320.2 1605.2,320.9 1608.6,325.0 1611.9,327.3 1615.3,325.3 1618.7,323.3 1622.0,320.9 1625.4,318.5 1628.8,315.1 1632.2,313.7 1635.5,313.1 1638.9,313.0 1642.3,312.9 1645.6,312.9 1649.0,313.0 1652.4,313.4 1655.8,313.5 1659.1,313.3 1662.5,312.1 1665.9,310.6 1669.2,307.9 1672.6,302.9 1676.0,298.1 1679.3,292.5 1682.7,285.3 1686.1,282.8 1689.5,283.0 1692.8,282.4 1696.2,283.2 1699.6,286.2 1702.9,287.3 1706.3,287.7 1709.7,288.2 1713.0,288.3 1716.4,288.5 1719.8,288.9 1723.2,288.8 1726.5,288.5 1729.9,289.0 1733.3,288.8 1736.6,287.9 1740.0,287.3" stroke="#f0a24a" stroke-width="1.1" />
<polyline points="105.5,334.1 108.9,333.7 112.3,332.9 115.7,332.5 119.0,332.3 122.4,332.3 125.8,331.4 129.1,331.3 132.5,330.3 135.9,329.4 139.2,327.5 142.6,326.7 146.0,325.1 149.4,322.6 152.7,319.3 156.1,315.8 159.5,312.3 162.8,309.4 166.2,307.5 169.6,305.0 173.0,303.0 176.3,301.3 179.7,299.3 183.1,297.2 186.4,295.4 189.8,294.2 193.2,292.5 196.5,291.0 199.9,290.4 203.3,290.0 206.6,289.8 210.0,289.5 213.4,289.9 216.8,289.3 220.1,288.9 223.5,288.8 226.9,290.4 230.2,290.4 233.6,290.4 237.0,289.9 240.3,288.8 243.7,288.2 247.1,287.4 250.5,287.5 253.8,286.4 257.2,286.5 260.6,286.5 263.9,285.9 267.3,285.8 270.7,285.7 274.0,285.4 277.4,285.0 280.8,285.0 284.2,285.2 287.5,285.6 290.9,285.8 294.3,286.3 297.6,286.7 301.0,286.7 304.4,286.7 307.8,286.7 311.1,286.2 314.5,286.3 317.9,286.3 321.2,285.9 324.6,285.5 328.0,285.5 331.3,284.4 334.7,284.2 338.1,284.4 341.5,283.6 344.8,283.3 348.2,283.3 351.6,282.8 354.9,282.5 358.3,282.5 361.7,281.8 365.0,281.5 368.4,281.3 371.8,281.3 375.1,281.3 378.5,281.2 381.9,280.9 385.3,281.1 388.6,281.3 392.0,281.4 395.4,281.3 398.7,281.4 402.1,281.3 405.5,281.3 408.8,281.3 412.2,280.6 415.6,280.8 419.0,280.7 422.3,281.0 425.7,281.1 429.1,280.8 432.4,280.7 435.8,279.6 439.2,279.5 442.5,279.2 445.9,278.7 449.3,278.6 452.7,278.6 456.0,277.5 459.4,276.9 462.8,276.5 466.1,276.1 469.5,275.6 472.9,274.9 476.2,274.9 479.6,274.7 483.0,273.9 486.4,273.7 489.7,273.9 493.1,274.0 496.5,274.0 499.8,273.9 503.2,273.4 506.6,273.4 510.0,272.4 513.3,271.9 516.7,271.6 520.1,271.5 523.4,271.1 526.8,270.8 530.2,270.6 533.5,270.6 536.9,270.8 540.3,270.6 543.6,270.1 547.0,270.0 550.4,269.7 553.8,269.1 557.1,268.6 560.5,268.8 563.9,268.6 567.2,268.4 570.6,268.0 574.0,268.1 577.3,268.0 580.7,267.8 584.1,267.9 587.5,267.8 590.8,267.8 594.2,267.4 597.6,267.2 600.9,266.5 604.3,265.6 607.7,265.3 611.0,264.8 614.4,264.8 617.8,264.3 621.2,263.2 624.5,262.8 627.9,262.8 631.3,262.9 634.6,262.9 638.0,262.8 641.4,262.8 644.8,257.9 648.1,248.8 651.5,245.2 654.9,243.6 658.2,243.0 661.6,242.9 665.0,243.4 668.3,243.9 671.7,244.5 675.1,245.3 678.5,246.3 681.8,247.2 685.2,248.3 688.6,249.6 691.9,250.4 695.3,251.2 698.7,251.4 702.0,251.9 705.4,252.9 708.8,253.9 712.1,254.6 715.5,255.9 718.9,257.2 722.3,258.5 725.6,259.6 729.0,259.2 732.4,261.1 735.7,262.9 739.1,264.3 742.5,264.8 745.9,264.3 749.2,263.2 752.6,262.1 756.0,261.0 759.3,260.3 762.7,259.4 766.1,258.5 769.4,257.9 772.8,257.5 776.2,257.6 779.5,258.3 782.9,259.6 786.3,261.5 789.7,263.5 793.0,266.3 796.4,269.0 799.8,271.9 803.1,274.9 806.5,278.0 809.9,281.5 813.2,285.7 816.6,290.2 820.0,294.7 823.4,298.2 826.7,300.5 830.1,302.1 833.5,303.6 836.8,304.7 840.2,305.7 843.6,306.8 846.9,307.2 850.3,306.9 853.7,306.6 857.1,305.6 860.4,304.4 863.8,303.1 867.2,301.4 870.5,300.2 873.9,299.5 877.3,298.3 880.6,297.1 884.0,296.2 887.4,295.7 890.8,295.9 894.1,296.1 897.5,296.2 900.9,296.2 904.2,296.2 907.6,296.0 911.0,296.2 914.4,297.4 917.7,298.1 921.1,298.1 924.5,297.5 927.8,296.9 931.2,296.3 934.6,295.1 937.9,293.8 941.3,292.4 944.7,290.7 948.0,288.6 951.4,287.2 954.8,286.2 958.2,285.4 961.5,284.8 964.9,284.3 968.3,283.8 971.6,283.2 975.0,282.8 978.4,282.5 981.8,282.9 985.1,283.8 988.5,284.9 991.9,285.4 995.2,285.8 998.6,286.0 1002.0,286.5 1005.3,286.8 1008.7,286.9 1012.1,287.0 1015.4,287.0 1018.8,287.0 1022.2,287.2 1025.6,287.4 1028.9,287.9 1032.3,289.0 1035.7,289.1 1039.0,289.1 1042.4,289.0 1045.8,288.5 1049.2,288.1 1052.5,287.6 1055.9,286.8 1059.3,285.8 1062.6,284.7 1066.0,283.5 1069.4,282.6 1072.7,281.6 1076.1,280.7 1079.5,279.8 1082.8,279.2 1086.2,279.0 1089.6,278.8 1093.0,278.6 1096.3,278.5 1099.7,278.5 1103.1,278.7 1106.4,278.8 1109.8,279.0 1113.2,279.1 1116.5,279.3 1119.9,279.0 1123.3,277.7 1126.7,277.2 1130.0,276.1 1133.4,275.3 1136.8,274.0 1140.1,272.5 1143.5,270.0 1146.9,267.8 1150.2,265.5 1153.6,263.2 1157.0,261.3 1160.4,259.0 1163.7,257.1 1167.1,255.5 1170.5,254.4 1173.8,253.6 1177.2,253.0 1180.6,252.8 1183.9,253.0 1187.3,253.4 1190.7,253.8 1194.1,254.3 1197.4,254.9 1200.8,255.3 1204.2,255.5 1207.5,255.4 1210.9,255.4 1214.3,254.9 1217.7,254.3 1221.0,252.7 1224.4,252.2 1227.8,249.3 1231.1,249.3 1234.5,241.9 1237.9,228.8 1241.2,215.4 1244.6,202.9 1248.0,191.9 1251.3,183.6 1254.7,178.2 1258.1,173.2 1261.5,167.8 1264.8,162.7 1268.2,158.1 1271.6,154.1 1274.9,151.1 1278.3,148.8 1281.7,146.8 1285.0,144.9 1288.4,143.2 1291.8,141.7 1295.2,140.3 1298.5,139.6 1301.9,138.9 1305.3,138.5 1308.6,142.4 1312.0,153.8 1315.4,165.6 1318.8,170.8 1322.1,171.3 1325.5,170.0 1328.9,168.8 1332.2,167.1 1335.6,165.0 1339.0,160.8 1342.3,156.3 1345.7,151.3 1349.1,146.2 1352.5,141.8 1355.8,139.4 1359.2,137.1 1362.6,135.8 1365.9,135.9 1369.3,136.1 1372.7,136.3 1376.0,135.6 1379.4,135.7 1382.8,136.0 1386.2,136.1 1389.5,136.2 1392.9,136.2 1396.3,136.3 1399.6,136.3 1403.0,136.5 1406.4,136.6 1409.7,136.6 1413.1,136.4 1416.5,134.9 1419.8,131.5 1423.2,129.6 1426.6,123.4 1430.0,119.7 1433.3,121.8 1436.7,125.2 1440.1,128.3 1443.4,132.5 1446.8,136.5 1450.2,136.3 1453.5,136.3 1456.9,138.5 1460.3,143.1 1463.7,145.6 1467.0,148.6 1470.4,151.4 1473.8,155.5 1477.1,160.0 1480.5,165.1 1483.9,170.8 1487.2,174.6 1490.6,177.0 1494.0,182.1 1497.4,188.5 1500.7,192.8 1504.1,194.8 1507.5,197.0 1510.8,196.1 1514.2,194.9 1517.6,195.8 1521.0,198.1 1524.3,202.0 1527.7,207.5 1531.1,212.0 1534.4,215.7 1537.8,219.1 1541.2,223.6 1544.5,229.6 1547.9,235.1 1551.3,240.0 1554.7,244.5 1558.0,249.7 1561.4,255.7 1564.8,261.8 1568.1,267.6 1571.5,266.2 1574.9,265.0 1578.2,264.7 1581.6,264.6 1585.0,264.9 1588.3,265.0 1591.7,265.1 1595.1,265.1 1598.5,265.2 1601.8,264.6 1605.2,261.9 1608.6,256.5 1611.9,252.4 1615.3,251.4 1618.7,250.7 1622.0,249.5 1625.4,248.2 1628.8,247.8 1632.2,246.3 1635.5,244.8 1638.9,243.8 1642.3,243.1 1645.6,242.7 1649.0,242.9 1652.4,243.1 1655.8,243.2 1659.1,243.1 1662.5,242.9 1665.9,242.7 1669.2,243.1 1672.6,244.3 1676.0,245.5 1679.3,247.0 1682.7,249.3 1686.1,249.6 1689.5,248.9 1692.8,249.5 1696.2,248.6 1699.6,244.8 1702.9,242.4 1706.3,241.2 1709.7,240.4 1713.0,239.6 1716.4,239.1 1719.8,238.2 1723.2,237.7 1726.5,237.4 1729.9,237.3 1733.3,237.3 1736.6,237.7 1740.0,237.9" stroke="#5b5fe0" stroke-width="1.1" />
<polyline points="105.5,356.4 108.9,355.9 112.3,355.5 115.7,354.8 119.0,353.9 122.4,352.8 125.8,352.5 129.1,351.3 132.5,350.5 135.9,349.5 139.2,350.0 142.6,349.9 146.0,349.0 149.4,349.4 152.7,350.1 156.1,350.7 159.5,351.5 162.8,352.0 166.2,351.7 169.6,351.8 173.0,351.1 176.3,350.2 179.7,349.7 183.1,349.0 186.4,347.8 189.8,346.5 193.2,344.9 196.5,343.5 199.9,341.2 203.3,338.6 206.6,335.7 210.0,333.3 213.4,330.0 216.8,327.8 220.1,325.3 223.5,323.0 226.9,318.8 230.2,316.5 233.6,314.5 237.0,313.3 240.3,312.8 243.7,312.2 247.1,311.4 250.5,309.8 253.8,309.2 257.2,307.9 260.6,306.5 263.9,305.6 267.3,304.9 270.7,304.0 274.0,302.8 277.4,302.4 280.8,301.7 284.2,300.6 287.5,299.4 290.9,298.7 294.3,297.5 297.6,296.6 301.0,296.3 304.4,296.1 307.8,295.7 311.1,295.1 314.5,294.8 317.9,294.6 321.2,294.5 324.6,294.6 328.0,294.4 331.3,294.9 334.7,294.6 338.1,294.7 341.5,294.7 344.8,294.7 348.2,294.7 351.6,294.5 354.9,294.3 358.3,294.3 361.7,294.5 365.0,294.2 368.4,294.1 371.8,293.6 375.1,293.2 378.5,292.7 381.9,292.3 385.3,291.5 388.6,291.1 392.0,290.7 395.4,290.7 398.7,290.2 402.1,290.3 405.5,290.4 408.8,290.4 412.2,290.2 415.6,290.2 419.0,290.1 422.3,289.5 425.7,289.5 429.1,289.5 432.4,289.2 435.8,289.8 439.2,289.7 442.5,289.7 445.9,289.9 449.3,289.9 452.7,289.8 456.0,290.0 459.4,290.1 462.8,290.0 466.1,290.1 469.5,290.1 472.9,289.8 476.2,289.6 479.6,289.4 483.0,289.5 486.4,288.3 489.7,287.5 493.1,286.9 496.5,286.9 499.8,286.3 503.2,286.1 506.6,285.1 510.0,285.2 513.3,285.0 516.7,284.5 520.1,284.5 523.4,284.0 526.8,283.6 530.2,283.5 533.5,282.8 536.9,281.8 540.3,281.8 543.6,281.8 547.0,281.4 550.4,281.1 553.8,281.1 557.1,281.2 560.5,280.1 563.9,279.5 567.2,279.5 570.6,279.5 574.0,278.6 577.3,278.0 580.7,277.2 584.1,276.5 587.5,276.3 590.8,275.9 594.2,276.0 597.6,275.9 600.9,275.9 604.3,275.9 607.7,275.8 611.0,275.6 614.4,275.1 617.8,274.9 621.2,274.9 624.5,274.6 627.9,274.4 631.3,273.7 634.6,273.3 638.0,273.2 641.4,273.2 644.8,279.9 648.1,292.7 651.5,299.5 654.9,304.0 658.2,307.2 661.6,309.6 665.0,311.4 668.3,312.8 671.7,313.8 675.1,314.5 678.5,315.0 681.8,315.3 685.2,315.3 688.6,315.1 691.9,315.0 695.3,314.8 698.7,314.7 702.0,314.6 705.4,314.1 708.8,313.8 712.1,313.7 715.5,313.3 718.9,313.0 722.3,312.7 725.6,312.4 729.0,311.9 732.4,307.0 735.7,303.1 739.1,300.3 742.5,299.6 745.9,300.4 749.2,302.2 752.6,304.3 756.0,306.6 759.3,308.6 762.7,311.2 766.1,314.4 769.4,317.8 772.8,321.5 776.2,324.9 779.5,328.3 782.9,331.2 786.3,334.3 789.7,337.3 793.0,338.7 796.4,339.4 799.8,340.0 803.1,340.5 806.5,341.2 809.9,341.1 813.2,339.9 816.6,338.0 820.0,335.7 823.4,333.9 826.7,333.4 830.1,333.6 833.5,333.3 836.8,332.8 840.2,332.4 843.6,331.8 846.9,331.6 850.3,331.7 853.7,331.8 857.1,332.0 860.4,332.2 863.8,332.2 867.2,332.1 870.5,331.1 873.9,329.2 877.3,328.6 880.6,328.4 884.0,327.8 887.4,326.6 890.8,324.5 894.1,322.9 897.5,322.0 900.9,321.9 904.2,321.9 907.6,321.6 911.0,320.1 914.4,317.0 917.7,315.0 921.1,314.0 924.5,313.5 927.8,313.0 931.2,312.6 934.6,312.6 937.9,312.3 941.3,312.3 944.7,312.5 948.0,313.1 951.4,313.4 954.8,313.4 958.2,313.4 961.5,313.3 964.9,313.2 968.3,312.9 971.6,312.6 975.0,312.0 978.4,311.4 981.8,309.8 985.1,308.0 988.5,306.0 991.9,304.9 995.2,303.9 998.6,303.3 1002.0,302.5 1005.3,301.7 1008.7,301.5 1012.1,301.2 1015.4,301.0 1018.8,301.2 1022.2,301.3 1025.6,301.4 1028.9,301.3 1032.3,300.7 1035.7,300.6 1039.0,300.6 1042.4,300.7 1045.8,300.9 1049.2,301.0 1052.5,301.2 1055.9,301.7 1059.3,302.1 1062.6,302.6 1066.0,302.8 1069.4,302.5 1072.7,302.1 1076.1,301.7 1079.5,301.3 1082.8,300.8 1086.2,300.0 1089.6,299.2 1093.0,298.3 1096.3,297.4 1099.7,296.5 1103.1,295.2 1106.4,294.0 1109.8,292.9 1113.2,291.8 1116.5,290.7 1119.9,290.2 1123.3,290.4 1126.7,289.8 1130.0,289.8 1133.4,289.3 1136.8,289.2 1140.1,289.5 1143.5,290.4 1146.9,291.1 1150.2,291.7 1153.6,292.2 1157.0,292.4 1160.4,292.9 1163.7,293.0 1167.1,292.7 1170.5,291.9 1173.8,290.9 1177.2,289.8 1180.6,288.5 1183.9,287.0 1187.3,285.7 1190.7,284.5 1194.1,283.1 1197.4,281.7 1200.8,279.8 1204.2,278.1 1207.5,277.2 1210.9,275.8 1214.3,274.9 1217.7,274.0 1221.0,274.0 1224.4,274.9 1227.8,279.7 1231.1,279.8 1234.5,284.3 1237.9,292.6 1241.2,300.2 1244.6,306.6 1248.0,311.2 1251.3,313.5 1254.7,313.8 1258.1,313.5 1261.5,313.1 1264.8,312.1 1268.2,310.3 1271.6,307.3 1274.9,303.7 1278.3,299.5 1281.7,295.0 1285.0,290.9 1288.4,286.6 1291.8,281.8 1295.2,276.7 1298.5,271.4 1301.9,265.8 1305.3,260.4 1308.6,248.4 1312.0,227.9 1315.4,208.7 1318.8,199.5 1322.1,197.0 1325.5,197.0 1328.9,197.4 1332.2,198.1 1335.6,198.7 1339.0,199.3 1342.3,200.0 1345.7,201.3 1349.1,202.6 1352.5,203.2 1355.8,202.5 1359.2,201.3 1362.6,199.3 1365.9,199.1 1369.3,198.7 1372.7,196.8 1376.0,195.1 1379.4,194.4 1382.8,193.0 1386.2,192.6 1389.5,191.8 1392.9,191.4 1396.3,190.8 1399.6,190.5 1403.0,189.3 1406.4,189.0 1409.7,189.1 1413.1,189.6 1416.5,193.3 1419.8,200.3 1423.2,207.1 1426.6,221.2 1430.0,233.8 1433.3,238.8 1436.7,242.0 1440.1,244.6 1443.4,245.6 1446.8,247.3 1450.2,250.7 1453.5,254.8 1456.9,257.8 1460.3,258.9 1463.7,261.5 1467.0,264.3 1470.4,267.1 1473.8,268.7 1477.1,269.7 1480.5,270.1 1483.9,270.5 1487.2,276.5 1490.6,283.7 1494.0,287.9 1497.4,290.3 1500.7,293.1 1504.1,297.2 1507.5,301.0 1510.8,305.3 1514.2,309.9 1517.6,314.6 1521.0,318.3 1524.3,320.1 1527.7,320.8 1531.1,322.8 1534.4,324.6 1537.8,326.6 1541.2,327.7 1544.5,327.5 1547.9,326.6 1551.3,325.3 1554.7,323.5 1558.0,320.9 1561.4,317.4 1564.8,313.4 1568.1,309.5 1571.5,309.7 1574.9,309.4 1578.2,309.2 1581.6,309.1 1585.0,309.3 1588.3,310.0 1591.7,310.3 1595.1,310.5 1598.5,310.1 1601.8,309.1 1605.2,309.1 1608.6,311.3 1611.9,312.3 1615.3,310.5 1618.7,308.8 1622.0,306.6 1625.4,304.4 1628.8,301.7 1632.2,300.3 1635.5,299.4 1638.9,299.1 1642.3,299.0 1645.6,298.9 1649.0,299.0 1652.4,299.3 1655.8,299.4 1659.1,299.2 1662.5,298.3 1665.9,297.0 1669.2,294.9 1672.6,291.2 1676.0,287.6 1679.3,283.4 1682.7,278.1 1686.1,276.1 1689.5,276.2 1692.8,275.8 1696.2,276.3 1699.6,277.9 1702.9,278.3 1706.3,278.4 1709.7,278.6 1713.0,278.6 1716.4,278.6 1719.8,278.7 1723.2,278.6 1726.5,278.3 1729.9,278.6 1733.3,278.5 1736.6,277.9 1740.0,277.4" stroke="#5b5fe0" stroke-width="1.1" />
<polyline points="105.5,339.7 108.9,339.2 112.3,338.5 115.7,338.1 119.0,337.7 122.4,337.4 125.8,336.6 129.1,336.3 132.5,335.3 135.9,334.5 139.2,333.2 142.6,332.5 146.0,331.1 149.4,329.3 152.7,327.0 156.1,324.5 159.5,322.1 162.8,320.1 166.2,318.5 169.6,316.7 173.0,315.0 176.3,313.6 179.7,311.9 183.1,310.1 186.4,308.5 189.8,307.3 193.2,305.6 196.5,304.1 199.9,303.1 203.3,302.2 206.6,301.3 210.0,300.5 213.4,299.9 216.8,298.9 220.1,298.0 223.5,297.3 226.9,297.5 230.2,297.0 233.6,296.4 237.0,295.7 240.3,294.8 243.7,294.2 247.1,293.4 250.5,293.1 253.8,292.1 257.2,291.8 260.6,291.5 263.9,290.8 267.3,290.6 270.7,290.3 274.0,289.8 277.4,289.4 280.8,289.2 284.2,289.1 287.5,289.1 290.9,289.0 294.3,289.1 297.6,289.1 301.0,289.1 304.4,289.0 307.8,289.0 311.1,288.4 314.5,288.4 317.9,288.4 321.2,288.1 324.6,287.7 328.0,287.7 331.3,287.0 334.7,286.8 338.1,287.0 341.5,286.4 344.8,286.1 348.2,286.2 351.6,285.7 354.9,285.5 358.3,285.5 361.7,285.0 365.0,284.7 368.4,284.5 371.8,284.4 375.1,284.2 378.5,284.1 381.9,283.8 385.3,283.7 388.6,283.7 392.0,283.7 395.4,283.7 398.7,283.6 402.1,283.5 405.5,283.5 408.8,283.6 412.2,283.0 415.6,283.1 419.0,283.1 422.3,283.1 425.7,283.2 429.1,283.0 432.4,282.8 435.8,282.2 439.2,282.1 442.5,281.8 445.9,281.5 449.3,281.4 452.7,281.4 456.0,280.7 459.4,280.2 462.8,279.9 466.1,279.6 469.5,279.2 472.9,278.7 476.2,278.6 479.6,278.4 483.0,277.8 486.4,277.4 489.7,277.3 493.1,277.2 496.5,277.2 499.8,277.0 503.2,276.5 506.6,276.4 510.0,275.6 513.3,275.1 516.7,274.9 520.1,274.7 523.4,274.3 526.8,274.0 530.2,273.8 533.5,273.6 536.9,273.6 540.3,273.4 543.6,273.0 547.0,272.9 550.4,272.6 553.8,272.1 557.1,271.8 560.5,271.6 563.9,271.4 567.2,271.1 570.6,270.9 574.0,270.8 577.3,270.5 580.7,270.1 584.1,270.1 587.5,270.0 590.8,269.8 594.2,269.6 597.6,269.4 600.9,268.9 604.3,268.2 607.7,267.9 611.0,267.5 614.4,267.4 617.8,266.9 621.2,266.1 624.5,265.8 627.9,265.7 631.3,265.6 634.6,265.5 638.0,265.4 641.4,265.4 644.8,263.4 648.1,259.7 651.5,258.8 654.9,258.7 658.2,259.0 661.6,259.6 665.0,260.4 668.3,261.1 671.7,261.8 675.1,262.6 678.5,263.4 681.8,264.2 685.2,265.1 688.6,266.0 691.9,266.5 695.3,267.1 698.7,267.2 702.0,267.5 705.4,268.2 708.8,268.9 712.1,269.4 715.5,270.3 718.9,271.1 722.3,272.1 725.6,272.8 729.0,272.3 732.4,272.6 735.7,272.9 739.1,273.3 742.5,273.5 745.9,273.3 749.2,273.0 752.6,272.7 756.0,272.4 759.3,272.4 762.7,272.4 766.1,272.5 769.4,272.8 772.8,273.5 776.2,274.5 779.5,275.8 782.9,277.5 786.3,279.7 789.7,282.0 793.0,284.4 796.4,286.6 799.8,288.9 803.1,291.3 806.5,293.8 809.9,296.4 813.2,299.2 816.6,302.1 820.0,304.9 823.4,307.1 826.7,308.7 830.1,310.0 833.5,311.0 836.8,311.8 840.2,312.4 843.6,313.0 846.9,313.3 850.3,313.1 853.7,312.9 857.1,312.2 860.4,311.4 863.8,310.3 867.2,309.1 870.5,307.9 873.9,307.0 877.3,305.9 880.6,304.9 884.0,304.1 887.4,303.4 890.8,303.1 894.1,302.8 897.5,302.7 900.9,302.6 904.2,302.6 907.6,302.4 911.0,302.2 914.4,302.3 917.7,302.3 921.1,302.1 924.5,301.5 927.8,301.0 931.2,300.4 934.6,299.5 937.9,298.4 941.3,297.3 944.7,296.2 948.0,294.7 951.4,293.7 954.8,293.0 958.2,292.4 961.5,291.9 964.9,291.5 968.3,291.1 971.6,290.5 975.0,290.1 978.4,289.7 981.8,289.6 985.1,289.9 988.5,290.2 991.9,290.3 995.2,290.4 998.6,290.4 1002.0,290.5 1005.3,290.5 1008.7,290.5 1012.1,290.5 1015.4,290.5 1018.8,290.6 1022.2,290.7 1025.6,290.9 1028.9,291.2 1032.3,291.9 1035.7,292.0 1039.0,292.0 1042.4,291.9 1045.8,291.6 1049.2,291.4 1052.5,291.0 1055.9,290.5 1059.3,289.9 1062.6,289.2 1066.0,288.4 1069.4,287.6 1072.7,286.8 1076.1,285.9 1079.5,285.2 1082.8,284.6 1086.2,284.2 1089.6,283.9 1093.0,283.5 1096.3,283.2 1099.7,283.0 1103.1,282.8 1106.4,282.6 1109.8,282.4 1113.2,282.3 1116.5,282.2 1119.9,281.8 1123.3,280.9 1126.7,280.3 1130.0,279.5 1133.4,278.8 1136.8,277.8 1140.1,276.8 1143.5,275.1 1146.9,273.6 1150.2,272.0 1153.6,270.5 1157.0,269.1 1160.4,267.4 1163.7,266.0 1167.1,264.8 1170.5,263.8 1173.8,262.9 1177.2,262.2 1180.6,261.7 1183.9,261.5 1187.3,261.5 1190.7,261.5 1194.1,261.5 1197.4,261.6 1200.8,261.4 1204.2,261.2 1207.5,260.8 1210.9,260.5 1214.3,259.9 1217.7,259.3 1221.0,258.0 1224.4,257.9 1227.8,256.9 1231.1,256.9 1234.5,252.5 1237.9,244.8 1241.2,236.6 1244.6,228.9 1248.0,221.7 1251.3,216.1 1254.7,212.1 1258.1,208.3 1261.5,204.2 1264.8,200.0 1268.2,196.1 1271.6,192.4 1274.9,189.3 1278.3,186.5 1281.7,183.9 1285.0,181.4 1288.4,179.0 1291.8,176.7 1295.2,174.4 1298.5,172.5 1301.9,170.6 1305.3,169.0 1308.6,168.9 1312.0,172.3 1315.4,176.4 1318.8,178.0 1322.1,177.8 1325.5,176.8 1328.9,175.9 1332.2,174.9 1335.6,173.4 1339.0,170.4 1342.3,167.2 1345.7,163.8 1349.1,160.3 1352.5,157.1 1355.8,155.2 1359.2,153.2 1362.6,151.7 1365.9,151.7 1369.3,151.7 1372.7,151.4 1376.0,150.5 1379.4,150.4 1382.8,150.2 1386.2,150.2 1389.5,150.1 1392.9,150.0 1396.3,149.9 1399.6,149.9 1403.0,149.7 1406.4,149.7 1409.7,149.7 1413.1,149.7 1416.5,149.5 1419.8,148.7 1423.2,149.0 1426.6,147.9 1430.0,148.2 1433.3,151.0 1436.7,154.4 1440.1,157.3 1443.4,160.8 1446.8,164.2 1450.2,164.9 1453.5,165.9 1456.9,168.3 1460.3,172.1 1463.7,174.6 1467.0,177.5 1470.4,180.4 1473.8,183.8 1477.1,187.4 1480.5,191.3 1483.9,195.7 1487.2,200.1 1490.6,203.7 1494.0,208.5 1497.4,213.9 1500.7,217.9 1504.1,220.4 1507.5,223.0 1510.8,223.4 1514.2,223.6 1517.6,225.5 1521.0,228.2 1524.3,231.5 1527.7,235.8 1531.1,239.7 1534.4,243.0 1537.8,246.0 1541.2,249.6 1544.5,254.1 1547.9,258.0 1551.3,261.4 1554.7,264.2 1558.0,267.5 1561.4,271.1 1564.8,274.7 1568.1,278.1 1571.5,277.1 1574.9,276.1 1578.2,275.8 1581.6,275.7 1585.0,276.0 1588.3,276.2 1591.7,276.4 1595.1,276.5 1598.5,276.4 1601.8,275.7 1605.2,273.7 1608.6,270.2 1611.9,267.4 1615.3,266.2 1618.7,265.2 1622.0,263.8 1625.4,262.3 1628.8,261.2 1632.2,259.8 1635.5,258.4 1638.9,257.6 1642.3,257.0 1645.6,256.7 1649.0,256.9 1652.4,257.2 1655.8,257.2 1659.1,257.1 1662.5,256.7 1665.9,256.3 1669.2,256.0 1672.6,256.0 1676.0,256.0 1679.3,256.1 1682.7,256.5 1686.1,256.2 1689.5,255.7 1692.8,256.1 1696.2,255.6 1699.6,253.1 1702.9,251.4 1706.3,250.5 1709.7,249.9 1713.0,249.3 1716.4,249.0 1719.8,248.4 1723.2,247.9 1726.5,247.6 1729.9,247.6 1733.3,247.6 1736.6,247.7 1740.0,247.8" stroke="#b45ae8" stroke-width="1.1" />
<polyline points="105.5,350.8 108.9,350.3 112.3,349.9 115.7,349.2 119.0,348.5 122.4,347.7 125.8,347.2 129.1,346.3 132.5,345.4 135.9,344.5 139.2,344.4 142.6,344.1 146.0,343.0 149.4,342.7 152.7,342.4 156.1,342.0 159.5,341.7 162.8,341.4 166.2,340.6 169.6,340.1 173.0,339.1 176.3,338.0 179.7,337.1 183.1,336.0 186.4,334.7 189.8,333.4 193.2,331.8 196.5,330.4 199.9,328.5 203.3,326.5 206.6,324.2 210.0,322.4 213.4,319.9 216.8,318.2 220.1,316.2 223.5,314.4 226.9,311.7 230.2,310.0 233.6,308.5 237.0,307.5 240.3,306.8 243.7,306.2 247.1,305.4 250.5,304.2 253.8,303.5 257.2,302.6 260.6,301.5 263.9,300.7 267.3,300.1 270.7,299.4 274.0,298.5 277.4,298.1 280.8,297.6 284.2,296.7 287.5,296.0 290.9,295.4 294.3,294.7 297.6,294.1 301.0,293.9 304.4,293.8 307.8,293.5 311.1,292.9 314.5,292.6 317.9,292.5 321.2,292.3 324.6,292.3 328.0,292.2 331.3,292.3 334.7,292.0 338.1,292.1 341.5,292.0 344.8,291.8 348.2,291.8 351.6,291.6 354.9,291.4 358.3,291.4 361.7,291.3 365.0,291.1 368.4,290.9 371.8,290.6 375.1,290.2 378.5,289.8 381.9,289.5 385.3,288.9 388.6,288.6 392.0,288.3 395.4,288.3 398.7,288.0 402.1,288.1 405.5,288.1 408.8,288.1 412.2,287.8 415.6,287.8 419.0,287.7 422.3,287.4 425.7,287.4 429.1,287.3 432.4,287.1 435.8,287.3 439.2,287.2 442.5,287.1 445.9,287.1 449.3,287.0 452.7,287.0 456.0,286.9 459.4,286.8 462.8,286.7 466.1,286.6 469.5,286.5 472.9,286.1 476.2,285.9 479.6,285.7 483.0,285.6 486.4,284.7 489.7,284.1 493.1,283.6 496.5,283.7 499.8,283.2 503.2,282.9 506.6,282.2 510.0,282.0 513.3,281.7 516.7,281.3 520.1,281.2 523.4,280.7 526.8,280.4 530.2,280.2 533.5,279.7 536.9,279.1 540.3,279.0 543.6,278.9 547.0,278.6 550.4,278.3 553.8,278.1 557.1,278.0 560.5,277.3 563.9,276.8 567.2,276.7 570.6,276.6 574.0,276.0 577.3,275.5 580.7,274.8 584.1,274.3 587.5,274.2 590.8,273.8 594.2,273.8 597.6,273.7 600.9,273.5 604.3,273.3 607.7,273.1 611.0,272.9 614.4,272.6 617.8,272.2 621.2,272.0 624.5,271.7 627.9,271.5 631.3,271.0 634.6,270.7 638.0,270.6 641.4,270.6 644.8,274.4 648.1,281.7 651.5,285.9 654.9,288.9 658.2,291.1 661.6,292.9 665.0,294.4 668.3,295.6 671.7,296.5 675.1,297.2 678.5,297.8 681.8,298.2 685.2,298.6 688.6,298.7 691.9,298.8 695.3,298.9 698.7,298.9 702.0,298.9 705.4,298.8 708.8,298.8 712.1,298.9 715.5,299.0 718.9,299.0 722.3,299.1 725.6,299.2 729.0,298.7 732.4,295.6 735.7,293.0 739.1,291.3 742.5,290.9 745.9,291.4 749.2,292.5 752.6,293.7 756.0,295.2 759.3,296.5 762.7,298.3 766.1,300.5 769.4,302.8 772.8,305.5 776.2,308.1 779.5,310.8 782.9,313.3 786.3,316.1 789.7,318.9 793.0,320.6 796.4,321.8 799.8,323.0 803.1,324.1 806.5,325.4 809.9,326.2 813.2,326.4 816.6,326.0 820.0,325.4 823.4,325.0 826.7,325.2 830.1,325.7 833.5,325.9 836.8,325.8 840.2,325.7 843.6,325.5 846.9,325.5 850.3,325.5 853.7,325.5 857.1,325.4 860.4,325.2 863.8,324.9 867.2,324.4 870.5,323.4 873.9,321.8 877.3,321.0 880.6,320.5 884.0,319.9 887.4,318.9 890.8,317.4 894.1,316.2 897.5,315.6 900.9,315.5 904.2,315.5 907.6,315.2 911.0,314.1 914.4,312.1 917.7,310.8 921.1,310.0 924.5,309.5 927.8,309.0 931.2,308.5 934.6,308.2 937.9,307.7 941.3,307.3 944.7,307.1 948.0,307.0 951.4,306.8 954.8,306.6 958.2,306.4 961.5,306.2 964.9,305.9 968.3,305.6 971.6,305.2 975.0,304.7 978.4,304.2 981.8,303.1 985.1,301.9 988.5,300.7 991.9,300.1 995.2,299.4 998.6,299.0 1002.0,298.5 1005.3,298.0 1008.7,297.8 1012.1,297.7 1015.4,297.5 1018.8,297.7 1022.2,297.8 1025.6,297.9 1028.9,297.9 1032.3,297.8 1035.7,297.7 1039.0,297.7 1042.4,297.8 1045.8,297.8 1049.2,297.8 1052.5,297.8 1055.9,298.0 1059.3,298.0 1062.6,298.1 1066.0,298.0 1069.4,297.5 1072.7,297.0 1076.1,296.4 1079.5,296.0 1082.8,295.4 1086.2,294.8 1089.6,294.1 1093.0,293.4 1096.3,292.7 1099.7,292.0 1103.1,291.1 1106.4,290.2 1109.8,289.4 1113.2,288.6 1116.5,287.8 1119.9,287.4 1123.3,287.2 1126.7,286.6 1130.0,286.3 1133.4,285.8 1136.8,285.4 1140.1,285.2 1143.5,285.3 1146.9,285.2 1150.2,285.1 1153.6,284.9 1157.0,284.7 1160.4,284.4 1163.7,284.0 1167.1,283.4 1170.5,282.5 1173.8,281.6 1177.2,280.6 1180.6,279.6 1183.9,278.5 1187.3,277.7 1190.7,276.9 1194.1,275.9 1197.4,275.0 1200.8,273.7 1204.2,272.4 1207.5,271.7 1210.9,270.7 1214.3,269.9 1217.7,269.1 1221.0,268.7 1224.4,269.3 1227.8,272.1 1231.1,272.2 1234.5,273.7 1237.9,276.7 1241.2,279.0 1244.6,280.7 1248.0,281.4 1251.3,281.0 1254.7,279.9 1258.1,278.5 1261.5,276.8 1264.8,274.7 1268.2,272.3 1271.6,269.0 1274.9,265.5 1278.3,261.9 1281.7,258.0 1285.0,254.4 1288.4,250.7 1291.8,246.8 1295.2,242.6 1298.5,238.5 1301.9,234.1 1305.3,229.9 1308.6,221.9 1312.0,209.4 1315.4,197.9 1318.8,192.4 1322.1,190.6 1325.5,190.2 1328.9,190.2 1332.2,190.4 1335.6,190.3 1339.0,189.7 1342.3,189.1 1345.7,188.8 1349.1,188.5 1352.5,187.8 1355.8,186.7 1359.2,185.3 1362.6,183.4 1365.9,183.3 1369.3,183.0 1372.7,181.7 1376.0,180.3 1379.4,179.7 1382.8,178.8 1386.2,178.4 1389.5,177.9 1392.9,177.6 1396.3,177.2 1399.6,177.0 1403.0,176.1 1406.4,175.9 1409.7,176.0 1413.1,176.3 1416.5,178.7 1419.8,183.1 1423.2,187.7 1426.6,196.8 1430.0,205.3 1433.3,209.5 1436.7,212.8 1440.1,215.5 1443.4,217.4 1446.8,219.6 1450.2,222.1 1453.5,225.2 1456.9,227.9 1460.3,230.0 1463.7,232.6 1467.0,235.3 1470.4,238.2 1473.8,240.4 1477.1,242.2 1480.5,243.9 1483.9,245.6 1487.2,251.0 1490.6,257.0 1494.0,261.4 1497.4,264.8 1500.7,268.0 1504.1,271.6 1507.5,275.0 1510.8,278.0 1514.2,281.2 1517.6,284.9 1521.0,288.3 1524.3,290.5 1527.7,292.4 1531.1,295.1 1534.4,297.4 1537.8,299.7 1541.2,301.7 1544.5,303.1 1547.9,303.7 1551.3,304.0 1554.7,303.8 1558.0,303.1 1561.4,302.0 1564.8,300.5 1568.1,299.0 1571.5,298.9 1574.9,298.3 1578.2,298.1 1581.6,298.0 1585.0,298.2 1588.3,298.7 1591.7,299.0 1595.1,299.1 1598.5,298.9 1601.8,298.0 1605.2,297.3 1608.6,297.6 1611.9,297.3 1615.3,295.7 1618.7,294.2 1622.0,292.3 1625.4,290.4 1628.8,288.2 1632.2,286.8 1635.5,285.8 1638.9,285.3 1642.3,285.0 1645.6,284.8 1649.0,285.0 1652.4,285.3 1655.8,285.4 1659.1,285.2 1662.5,284.4 1665.9,283.5 1669.2,282.0 1672.6,279.5 1676.0,277.1 1679.3,274.3 1682.7,270.9 1686.1,269.5 1689.5,269.3 1692.8,269.2 1696.2,269.4 1699.6,269.7 1702.9,269.3 1706.3,269.1 1709.7,269.1 1713.0,268.8 1716.4,268.7 1719.8,268.6 1723.2,268.4 1726.5,268.1 1729.9,268.3 1733.3,268.2 1736.6,267.8 1740.0,267.5" stroke="#b45ae8" stroke-width="1.1" />
<polyline points="105.5,345.2 108.9,344.8 112.3,344.2 115.7,343.6 119.0,343.1 122.4,342.5 125.8,341.9 129.1,341.3 132.5,340.4 135.9,339.5 139.2,338.8 142.6,338.3 146.0,337.1 149.4,336.0 152.7,334.7 156.1,333.3 159.5,331.9 162.8,330.7 166.2,329.6 169.6,328.4 173.0,327.1 176.3,325.8 179.7,324.5 183.1,323.1 186.4,321.6 189.8,320.3 193.2,318.7 196.5,317.3 199.9,315.8 203.3,314.3 206.6,312.7 210.0,311.4 213.4,309.9 216.8,308.5 220.1,307.1 223.5,305.9 226.9,304.6 230.2,303.5 233.6,302.4 237.0,301.6 240.3,300.8 243.7,300.2 247.1,299.4 250.5,298.7 253.8,297.8 257.2,297.2 260.6,296.5 263.9,295.7 267.3,295.3 270.7,294.9 274.0,294.1 277.4,293.7 280.8,293.4 284.2,292.9 287.5,292.5 290.9,292.2 294.3,291.9 297.6,291.6 301.0,291.5 304.4,291.4 307.8,291.2 311.1,290.7 314.5,290.5 317.9,290.4 321.2,290.2 324.6,290.0 328.0,289.9 331.3,289.6 334.7,289.4 338.1,289.5 341.5,289.2 344.8,289.0 348.2,289.0 351.6,288.6 354.9,288.4 358.3,288.4 361.7,288.2 365.0,287.9 368.4,287.7 371.8,287.5 375.1,287.2 378.5,286.9 381.9,286.6 385.3,286.3 388.6,286.2 392.0,286.0 395.4,286.0 398.7,285.8 402.1,285.8 405.5,285.8 408.8,285.8 412.2,285.4 415.6,285.5 419.0,285.4 422.3,285.3 425.7,285.3 429.1,285.1 432.4,284.9 435.8,284.7 439.2,284.6 442.5,284.4 445.9,284.3 449.3,284.2 452.7,284.2 456.0,283.8 459.4,283.5 462.8,283.3 466.1,283.1 469.5,282.8 472.9,282.4 476.2,282.2 479.6,282.1 483.0,281.7 486.4,281.0 489.7,280.7 493.1,280.4 496.5,280.4 499.8,280.1 503.2,279.7 506.6,279.3 510.0,278.8 513.3,278.4 516.7,278.1 520.1,278.0 523.4,277.5 526.8,277.2 530.2,277.0 533.5,276.7 536.9,276.3 540.3,276.2 543.6,275.9 547.0,275.7 550.4,275.4 553.8,275.1 557.1,274.9 560.5,274.4 563.9,274.1 567.2,273.9 570.6,273.8 574.0,273.4 577.3,273.0 580.7,272.5 584.1,272.2 587.5,272.1 590.8,271.8 594.2,271.7 597.6,271.5 600.9,271.2 604.3,270.7 607.7,270.5 611.0,270.2 614.4,270.0 617.8,269.6 621.2,269.1 624.5,268.7 627.9,268.6 631.3,268.3 634.6,268.1 638.0,268.0 641.4,268.0 644.8,268.9 648.1,270.7 651.5,272.4 654.9,273.8 658.2,275.1 661.6,276.2 665.0,277.4 668.3,278.3 671.7,279.1 675.1,279.9 678.5,280.6 681.8,281.2 685.2,281.8 688.6,282.4 691.9,282.7 695.3,283.0 698.7,283.1 702.0,283.2 705.4,283.5 708.8,283.9 712.1,284.1 715.5,284.6 718.9,285.1 722.3,285.6 725.6,286.0 729.0,285.5 732.4,284.1 735.7,283.0 739.1,282.3 742.5,282.2 745.9,282.4 749.2,282.7 752.6,283.2 756.0,283.8 759.3,284.5 762.7,285.3 766.1,286.5 769.4,287.8 772.8,289.5 776.2,291.3 779.5,293.3 782.9,295.4 786.3,297.9 789.7,300.4 793.0,302.5 796.4,304.2 799.8,305.9 803.1,307.7 806.5,309.6 809.9,311.3 813.2,312.8 816.6,314.1 820.0,315.2 823.4,316.0 826.7,317.0 830.1,317.9 833.5,318.4 836.8,318.8 840.2,319.0 843.6,319.3 846.9,319.4 850.3,319.3 853.7,319.2 857.1,318.8 860.4,318.3 863.8,317.6 867.2,316.8 870.5,315.6 873.9,314.4 877.3,313.4 880.6,312.7 884.0,312.0 887.4,311.2 890.8,310.2 894.1,309.5 897.5,309.1 900.9,309.1 904.2,309.1 907.6,308.8 911.0,308.1 914.4,307.2 917.7,306.5 921.1,306.1 924.5,305.5 927.8,305.0 931.2,304.5 934.6,303.8 937.9,303.1 941.3,302.3 944.7,301.6 948.0,300.8 951.4,300.3 954.8,299.8 958.2,299.4 961.5,299.1 964.9,298.7 968.3,298.3 971.6,297.9 975.0,297.4 978.4,296.9 981.8,296.4 985.1,295.9 988.5,295.4 991.9,295.2 995.2,294.9 998.6,294.7 1002.0,294.5 1005.3,294.3 1008.7,294.2 1012.1,294.1 1015.4,294.0 1018.8,294.1 1022.2,294.3 1025.6,294.4 1028.9,294.6 1032.3,294.8 1035.7,294.9 1039.0,294.9 1042.4,294.8 1045.8,294.7 1049.2,294.6 1052.5,294.4 1055.9,294.2 1059.3,294.0 1062.6,293.6 1066.0,293.2 1069.4,292.5 1072.7,291.9 1076.1,291.2 1079.5,290.6 1082.8,290.0 1086.2,289.5 1089.6,289.0 1093.0,288.5 1096.3,287.9 1099.7,287.5 1103.1,286.9 1106.4,286.4 1109.8,285.9 1113.2,285.4 1116.5,285.0 1119.9,284.6 1123.3,284.0 1126.7,283.5 1130.0,282.9 1133.4,282.3 1136.8,281.6 1140.1,281.0 1143.5,280.2 1146.9,279.4 1150.2,278.6 1153.6,277.7 1157.0,276.9 1160.4,275.9 1163.7,275.0 1167.1,274.1 1170.5,273.1 1173.8,272.2 1177.2,271.4 1180.6,270.7 1183.9,270.0 1187.3,269.6 1190.7,269.2 1194.1,268.7 1197.4,268.3 1200.8,267.6 1204.2,266.8 1207.5,266.3 1210.9,265.6 1214.3,264.9 1217.7,264.2 1221.0,263.3 1224.4,263.6 1227.8,264.5 1231.1,264.5 1234.5,263.1 1237.9,260.7 1241.2,257.8 1244.6,254.8 1248.0,251.5 1251.3,248.5 1254.7,246.0 1258.1,243.4 1261.5,240.5 1264.8,237.4 1268.2,234.2 1271.6,230.7 1274.9,227.4 1278.3,224.2 1281.7,220.9 1285.0,217.9 1288.4,214.9 1291.8,211.8 1295.2,208.5 1298.5,205.5 1301.9,202.4 1305.3,199.4 1308.6,195.4 1312.0,190.8 1315.4,187.1 1318.8,185.2 1322.1,184.2 1325.5,183.5 1328.9,183.1 1332.2,182.6 1335.6,181.8 1339.0,180.0 1342.3,178.2 1345.7,176.3 1349.1,174.4 1352.5,172.5 1355.8,171.0 1359.2,169.2 1362.6,167.6 1365.9,167.5 1369.3,167.4 1372.7,166.6 1376.0,165.4 1379.4,165.1 1382.8,164.5 1386.2,164.3 1389.5,164.0 1392.9,163.8 1396.3,163.6 1399.6,163.4 1403.0,162.9 1406.4,162.8 1409.7,162.8 1413.1,163.0 1416.5,164.1 1419.8,165.9 1423.2,168.3 1426.6,172.3 1430.0,176.7 1433.3,180.3 1436.7,183.6 1440.1,186.4 1443.4,189.1 1446.8,191.9 1450.2,193.5 1453.5,195.5 1456.9,198.1 1460.3,201.0 1463.7,203.6 1467.0,206.4 1470.4,209.3 1473.8,212.1 1477.1,214.8 1480.5,217.6 1483.9,220.7 1487.2,225.6 1490.6,230.4 1494.0,235.0 1497.4,239.4 1500.7,243.0 1504.1,246.0 1507.5,249.0 1510.8,250.7 1514.2,252.4 1517.6,255.2 1521.0,258.2 1524.3,261.0 1527.7,264.1 1531.1,267.4 1534.4,270.2 1537.8,272.9 1541.2,275.6 1544.5,278.6 1547.9,280.9 1551.3,282.7 1554.7,284.0 1558.0,285.3 1561.4,286.5 1564.8,287.6 1568.1,288.5 1571.5,288.0 1574.9,287.2 1578.2,287.0 1581.6,286.9 1585.0,287.1 1588.3,287.5 1591.7,287.7 1595.1,287.8 1598.5,287.6 1601.8,286.8 1605.2,285.5 1608.6,283.9 1611.9,282.3 1615.3,281.0 1618.7,279.7 1622.0,278.1 1625.4,276.3 1628.8,274.7 1632.2,273.3 1635.5,272.1 1638.9,271.4 1642.3,271.0 1645.6,270.8 1649.0,270.9 1652.4,271.2 1655.8,271.3 1659.1,271.1 1662.5,270.6 1665.9,269.9 1669.2,269.0 1672.6,267.8 1676.0,266.5 1679.3,265.2 1682.7,263.7 1686.1,262.9 1689.5,262.5 1692.8,262.7 1696.2,262.5 1699.6,261.4 1702.9,260.4 1706.3,259.8 1709.7,259.5 1713.0,259.1 1716.4,258.8 1719.8,258.5 1723.2,258.1 1726.5,257.8 1729.9,258.0 1733.3,257.9 1736.6,257.8 1740.0,257.7" stroke="#f39a36" stroke-width="1.2" />
<polyline points="105.5,346.0 108.9,346.0 112.3,343.8 115.7,343.8 119.0,343.8 122.4,343.8 125.8,342.3 129.1,342.3 132.5,341.2 135.9,340.9 139.2,338.1 142.6,338.1 146.0,335.2 149.4,334.6 152.7,332.8 156.1,329.2 159.5,327.7 162.8,327.7 166.2,327.7 169.6,327.1 173.0,327.1 176.3,325.3 179.7,324.4 183.1,322.8 186.4,320.2 189.8,320.2 193.2,320.2 196.5,319.7 199.9,319.7 203.3,318.3 206.6,317.7 210.0,317.7 213.4,316.8 216.8,314.9 220.1,313.9 223.5,313.9 226.9,313.9 230.2,313.9 233.6,307.0 237.0,305.4 240.3,302.7 243.7,300.7 247.1,300.3 250.5,300.1 253.8,298.8 257.2,298.1 260.6,298.1 263.9,297.2 267.3,295.3 270.7,295.3 274.0,295.3 277.4,294.9 280.8,294.3 284.2,294.3 287.5,294.3 290.9,294.3 294.3,294.3 297.6,294.3 301.0,294.3 304.4,292.2 307.8,292.2 311.1,292.2 314.5,291.5 317.9,290.8 321.2,288.9 324.6,288.9 328.0,288.9 331.3,285.8 334.7,285.8 338.1,285.7 341.5,285.6 344.8,285.6 348.2,285.6 351.6,285.6 354.9,285.6 358.3,285.6 361.7,285.6 365.0,285.6 368.4,285.6 371.8,285.6 375.1,285.6 378.5,285.0 381.9,284.9 385.3,284.9 388.6,284.7 392.0,284.6 395.4,284.6 398.7,284.6 402.1,284.4 405.5,284.5 408.8,284.5 412.2,284.5 415.6,284.5 419.0,284.5 422.3,284.5 425.7,284.5 429.1,285.5 432.4,285.5 435.8,285.4 439.2,283.0 442.5,283.0 445.9,283.0 449.3,283.0 452.7,283.0 456.0,283.0 459.4,283.0 462.8,283.0 466.1,283.0 469.5,283.0 472.9,283.0 476.2,283.0 479.6,283.0 483.0,283.0 486.4,283.0 489.7,281.3 493.1,279.9 496.5,279.9 499.8,279.9 503.2,279.9 506.6,279.9 510.0,279.9 513.3,279.9 516.7,279.0 520.1,279.0 523.4,279.0 526.8,279.0 530.2,279.0 533.5,279.0 536.9,279.0 540.3,279.0 543.6,278.2 547.0,278.2 550.4,278.2 553.8,276.2 557.1,274.8 560.5,274.8 563.9,274.8 567.2,274.2 570.6,274.2 574.0,274.2 577.3,274.2 580.7,274.0 584.1,274.0 587.5,273.6 590.8,273.6 594.2,273.6 597.6,271.4 600.9,270.8 604.3,268.9 607.7,268.9 611.0,268.9 614.4,268.9 617.8,268.9 621.2,268.7 624.5,268.4 627.9,268.0 631.3,268.0 634.6,268.0 638.0,268.0 641.4,268.0 644.8,278.1 648.1,304.8 651.5,304.8 654.9,304.8 658.2,304.8 661.6,304.8 665.0,304.8 668.3,304.8 671.7,304.8 675.1,304.8 678.5,304.8 681.8,304.8 685.2,304.8 688.6,304.8 691.9,304.8 695.3,304.8 698.7,304.8 702.0,304.8 705.4,304.8 708.8,304.8 712.1,306.2 715.5,306.2 718.9,306.2 722.3,306.2 725.6,306.2 729.0,306.2 732.4,306.2 735.7,290.3 739.1,288.0 742.5,285.5 745.9,285.0 749.2,285.0 752.6,285.0 756.0,285.2 759.3,285.2 762.7,285.6 766.1,289.9 769.4,289.9 772.8,292.2 776.2,292.2 779.5,293.5 782.9,294.3 786.3,298.8 789.7,302.3 793.0,302.4 796.4,304.8 799.8,306.6 803.1,306.9 806.5,306.9 809.9,306.9 813.2,307.2 816.6,307.2 820.0,307.2 823.4,309.7 826.7,311.7 830.1,317.1 833.5,319.2 836.8,320.0 840.2,320.0 843.6,320.0 846.9,321.1 850.3,321.5 853.7,322.7 857.1,322.7 860.4,322.4 863.8,320.7 867.2,320.2 870.5,319.5 873.9,319.2 877.3,316.8 880.6,316.4 884.0,315.9 887.4,315.9 890.8,315.9 894.1,314.5 897.5,314.5 900.9,314.5 904.2,314.5 907.6,314.5 911.0,314.5 914.4,314.4 917.7,312.6 921.1,307.9 924.5,306.0 927.8,306.0 931.2,306.0 934.6,304.5 937.9,302.9 941.3,302.9 944.7,302.3 948.0,300.8 951.4,300.8 954.8,300.8 958.2,300.8 961.5,300.8 964.9,300.8 968.3,300.8 971.6,300.8 975.0,300.8 978.4,300.8 981.8,300.8 985.1,300.8 988.5,299.9 991.9,299.1 995.2,299.1 998.6,297.9 1002.0,297.9 1005.3,297.9 1008.7,297.9 1012.1,297.9 1015.4,297.9 1018.8,297.9 1022.2,297.9 1025.6,297.9 1028.9,297.5 1032.3,297.5 1035.7,297.5 1039.0,297.5 1042.4,297.5 1045.8,297.5 1049.2,297.5 1052.5,297.5 1055.9,296.8 1059.3,295.4 1062.6,295.4 1066.0,295.4 1069.4,295.4 1072.7,291.4 1076.1,291.3 1079.5,291.3 1082.8,290.0 1086.2,290.0 1089.6,288.6 1093.0,288.5 1096.3,288.5 1099.7,288.5 1103.1,288.5 1106.4,287.6 1109.8,287.6 1113.2,287.6 1116.5,287.6 1119.9,287.6 1123.3,285.5 1126.7,285.5 1130.0,285.5 1133.4,281.9 1136.8,280.9 1140.1,280.7 1143.5,278.7 1146.9,278.2 1150.2,277.1 1153.6,276.6 1157.0,275.9 1160.4,273.6 1163.7,273.6 1167.1,273.6 1170.5,273.6 1173.8,273.6 1177.2,273.6 1180.6,273.6 1183.9,273.6 1187.3,273.6 1190.7,273.6 1194.1,270.6 1197.4,270.6 1200.8,270.6 1204.2,269.9 1207.5,269.9 1210.9,269.9 1214.3,267.4 1217.7,267.4 1221.0,262.8 1224.4,265.4 1227.8,286.7 1231.1,286.7 1234.5,274.7 1237.9,262.1 1241.2,251.5 1244.6,251.5 1248.0,247.5 1251.3,247.5 1254.7,247.5 1258.1,247.5 1261.5,247.5 1264.8,247.5 1268.2,247.5 1271.6,247.5 1274.9,247.5 1278.3,247.5 1281.7,247.5 1285.0,247.5 1288.4,247.5 1291.8,247.5 1295.2,247.5 1298.5,247.5 1301.9,247.5 1305.3,247.5 1308.6,246.8 1312.0,246.2 1315.4,228.8 1318.8,217.0 1322.1,201.6 1325.5,186.5 1328.9,182.2 1332.2,182.2 1335.6,181.3 1339.0,175.5 1342.3,172.6 1345.7,169.6 1349.1,165.8 1352.5,165.8 1355.8,165.8 1359.2,165.8 1362.6,165.8 1365.9,179.8 1369.3,179.8 1372.7,179.8 1376.0,179.8 1379.4,179.8 1382.8,179.8 1386.2,179.8 1389.5,179.8 1392.9,179.8 1396.3,179.8 1399.6,179.8 1403.0,179.8 1406.4,179.8 1409.7,179.8 1413.1,179.8 1416.5,179.8 1419.8,179.8 1423.2,179.8 1426.6,196.3 1430.0,196.3 1433.3,196.6 1436.7,197.2 1440.1,197.2 1443.4,197.2 1446.8,197.2 1450.2,199.8 1453.5,199.8 1456.9,199.8 1460.3,199.8 1463.7,199.8 1467.0,199.8 1470.4,199.8 1473.8,199.8 1477.1,199.8 1480.5,199.8 1483.9,199.8 1487.2,218.4 1490.6,218.7 1494.0,233.6 1497.4,233.6 1500.7,234.4 1504.1,244.4 1507.5,250.8 1510.8,252.0 1514.2,263.0 1517.6,263.0 1521.0,263.0 1524.3,263.0 1527.7,263.0 1531.1,263.0 1534.4,265.0 1537.8,266.6 1541.2,266.6 1544.5,266.6 1547.9,270.7 1551.3,272.4 1554.7,272.4 1558.0,272.4 1561.4,272.4 1564.8,272.4 1568.1,273.3 1571.5,278.1 1574.9,286.3 1578.2,286.3 1581.6,286.3 1585.0,286.3 1588.3,286.3 1591.7,286.3 1595.1,286.3 1598.5,286.3 1601.8,280.8 1605.2,279.3 1608.6,273.4 1611.9,273.4 1615.3,273.4 1618.7,273.4 1622.0,273.4 1625.4,273.4 1628.8,273.4 1632.2,273.4 1635.5,273.4 1638.9,273.4 1642.3,273.4 1645.6,273.4 1649.0,273.4 1652.4,273.4 1655.8,273.4 1659.1,273.4 1662.5,273.4 1665.9,273.4 1669.2,273.4 1672.6,273.4 1676.0,270.2 1679.3,269.9 1682.7,269.9 1686.1,268.2 1689.5,268.2 1692.8,268.2 1696.2,270.1 1699.6,264.1 1702.9,264.1 1706.3,264.1 1709.7,264.1 1713.0,264.1 1716.4,264.1 1719.8,264.1 1723.2,264.1 1726.5,264.1 1729.9,264.1 1733.3,264.1 1736.6,264.1 1740.0,264.1" stroke="#d42a2a" stroke-width="1.2" />
<polyline points="105.5,341.5 108.9,342.1 112.3,342.1 115.7,342.1 119.0,340.4 122.4,339.7 125.8,337.5 129.1,337.4 132.5,336.4 135.9,336.0 139.2,332.7 142.6,332.7 146.0,328.4 149.4,328.4 152.7,326.9 156.1,322.4 159.5,322.0 162.8,321.0 166.2,321.0 169.6,320.4 173.0,320.4 176.3,313.5 179.7,312.0 183.1,309.4 186.4,304.8 189.8,304.4 193.2,304.4 196.5,304.4 199.9,303.7 203.3,303.7 206.6,303.1 210.0,301.2 213.4,301.2 216.8,299.7 220.1,299.3 223.5,298.7 226.9,298.7 230.2,298.7 233.6,298.7 237.0,298.5 240.3,296.7 243.7,296.7 247.1,294.5 250.5,294.4 253.8,293.1 257.2,293.1 260.6,292.3 263.9,289.6 267.3,289.6 270.7,289.6 274.0,289.6 277.4,289.6 280.8,289.1 284.2,289.1 287.5,289.1 290.9,289.5 294.3,290.6 297.6,290.6 301.0,290.6 304.4,290.7 307.8,290.7 311.1,289.8 314.5,288.9 317.9,288.9 321.2,288.3 324.6,288.2 328.0,288.2 331.3,284.9 334.7,284.7 338.1,284.7 341.5,284.6 344.8,284.4 348.2,284.4 351.6,284.4 354.9,284.4 358.3,284.4 361.7,284.4 365.0,284.4 368.4,284.4 371.8,285.2 375.1,285.2 378.5,284.7 381.9,284.7 385.3,284.7 388.6,285.0 392.0,285.1 395.4,285.1 398.7,285.1 402.1,286.4 405.5,287.1 408.8,287.1 412.2,285.8 415.6,285.5 419.0,285.5 422.3,285.5 425.7,285.5 429.1,285.5 432.4,285.5 435.8,283.9 439.2,281.6 442.5,281.6 445.9,281.6 449.3,281.6 452.7,281.6 456.0,281.6 459.4,280.7 462.8,280.7 466.1,280.7 469.5,282.2 472.9,282.2 476.2,282.2 479.6,282.2 483.0,281.5 486.4,280.5 489.7,278.2 493.1,278.2 496.5,276.8 499.8,276.8 503.2,276.8 506.6,276.8 510.0,276.2 513.3,276.2 516.7,276.2 520.1,276.6 523.4,276.4 526.8,276.0 530.2,275.7 533.5,275.7 536.9,275.7 540.3,273.5 543.6,273.5 547.0,273.0 550.4,273.0 553.8,272.4 557.1,271.0 560.5,271.0 563.9,271.0 567.2,271.0 570.6,270.5 574.0,270.6 577.3,270.6 580.7,270.6 584.1,270.6 587.5,271.2 590.8,270.6 594.2,270.6 597.6,270.6 600.9,270.0 604.3,267.5 607.7,267.5 611.0,267.5 614.4,267.5 617.8,267.5 621.2,267.2 624.5,266.6 627.9,266.6 631.3,266.2 634.6,266.2 638.0,266.2 641.4,266.2 644.8,278.1 648.1,304.8 651.5,304.8 654.9,306.3 658.2,307.2 661.6,307.2 665.0,307.9 668.3,307.9 671.7,309.0 675.1,318.0 678.5,301.5 681.8,297.9 685.2,293.8 688.6,292.3 691.9,290.0 695.3,283.6 698.7,280.7 702.0,278.0 705.4,277.6 708.8,275.2 712.1,274.6 715.5,272.5 718.9,272.1 722.3,272.7 725.6,272.7 729.0,272.7 732.4,274.7 735.7,276.3 739.1,282.5 742.5,287.8 745.9,290.5 749.2,291.6 752.6,291.6 756.0,292.1 759.3,292.1 762.7,292.5 766.1,299.2 769.4,301.3 772.8,309.1 776.2,311.1 779.5,313.2 782.9,314.0 786.3,318.6 789.7,321.1 793.0,321.5 796.4,324.0 799.8,324.6 803.1,326.4 806.5,326.4 809.9,326.4 813.2,326.4 816.6,324.4 820.0,321.8 823.4,321.4 826.7,321.4 830.1,321.4 833.5,321.4 836.8,319.9 840.2,319.8 843.6,319.8 846.9,318.8 850.3,318.5 853.7,318.5 857.1,318.5 860.4,316.3 863.8,312.0 867.2,309.6 870.5,308.9 873.9,308.6 877.3,308.6 880.6,308.6 884.0,308.1 887.4,307.6 890.8,303.8 894.1,303.8 897.5,305.3 900.9,307.9 904.2,307.9 907.6,307.9 911.0,307.9 914.4,307.8 917.7,307.8 921.1,305.8 924.5,305.8 927.8,305.8 931.2,304.9 934.6,302.6 937.9,301.1 941.3,298.5 944.7,297.6 948.0,296.0 951.4,294.3 954.8,294.1 958.2,293.8 961.5,293.8 964.9,291.4 968.3,291.4 971.6,291.4 975.0,291.4 978.4,291.8 981.8,292.3 985.1,299.0 988.5,299.0 991.9,299.0 995.2,299.0 998.6,299.0 1002.0,299.0 1005.3,299.0 1008.7,300.7 1012.1,301.8 1015.4,297.9 1018.8,297.8 1022.2,297.8 1025.6,297.6 1028.9,293.2 1032.3,291.9 1035.7,291.8 1039.0,291.8 1042.4,291.8 1045.8,291.7 1049.2,291.7 1052.5,291.7 1055.9,291.1 1059.3,289.7 1062.6,289.7 1066.0,289.7 1069.4,289.7 1072.7,289.7 1076.1,286.0 1079.5,286.0 1082.8,284.9 1086.2,284.9 1089.6,284.9 1093.0,284.3 1096.3,284.3 1099.7,284.3 1103.1,284.3 1106.4,284.2 1109.8,284.2 1113.2,284.2 1116.5,284.2 1119.9,284.2 1123.3,282.1 1126.7,282.1 1130.0,282.1 1133.4,281.9 1136.8,277.9 1140.1,277.8 1143.5,275.8 1146.9,274.5 1150.2,273.4 1153.6,273.0 1157.0,269.7 1160.4,267.4 1163.7,265.0 1167.1,264.7 1170.5,263.4 1173.8,260.5 1177.2,261.3 1180.6,261.3 1183.9,261.4 1187.3,264.9 1190.7,265.4 1194.1,265.4 1197.4,265.4 1200.8,267.0 1204.2,267.0 1207.5,267.0 1210.9,266.0 1214.3,265.8 1217.7,264.5 1221.0,262.3 1224.4,265.4 1227.8,286.7 1231.1,286.7 1234.5,274.7 1237.9,262.1 1241.2,251.5 1244.6,251.5 1248.0,247.5 1251.3,247.5 1254.7,247.5 1258.1,231.1 1261.5,219.3 1264.8,203.9 1268.2,189.6 1271.6,185.3 1274.9,185.3 1278.3,186.8 1281.7,187.2 1285.0,188.7 1288.4,187.4 1291.8,187.1 1295.2,185.5 1298.5,184.4 1301.9,184.4 1305.3,184.2 1308.6,181.1 1312.0,179.8 1315.4,178.8 1318.8,177.7 1322.1,177.5 1325.5,175.6 1328.9,174.4 1332.2,174.0 1335.6,173.1 1339.0,167.3 1342.3,164.4 1345.7,161.9 1349.1,158.4 1352.5,157.4 1355.8,157.1 1359.2,154.2 1362.6,153.2 1365.9,179.8 1369.3,179.8 1372.7,179.8 1376.0,179.8 1379.4,180.5 1382.8,180.5 1386.2,180.5 1389.5,180.5 1392.9,185.2 1396.3,170.5 1399.6,169.6 1403.0,164.7 1406.4,159.9 1409.7,159.9 1413.1,159.9 1416.5,171.5 1419.8,178.0 1423.2,178.7 1426.6,199.5 1430.0,199.5 1433.3,199.8 1436.7,214.3 1440.1,214.3 1443.4,215.0 1446.8,225.1 1450.2,231.5 1453.5,232.7 1456.9,233.7 1460.3,233.7 1463.7,225.5 1467.0,226.2 1470.4,227.0 1473.8,228.0 1477.1,230.0 1480.5,231.5 1483.9,233.5 1487.2,256.0 1490.6,260.3 1494.0,262.5 1497.4,262.5 1500.7,262.5 1504.1,262.5 1507.5,262.5 1510.8,263.3 1514.2,278.1 1517.6,297.1 1521.0,297.1 1524.3,297.1 1527.7,297.1 1531.1,297.1 1534.4,297.1 1537.8,297.1 1541.2,300.9 1544.5,295.4 1547.9,295.4 1551.3,294.2 1554.7,289.4 1558.0,286.8 1561.4,286.2 1564.8,284.7 1568.1,280.7 1571.5,280.6 1574.9,280.5 1578.2,276.5 1581.6,275.2 1585.0,275.9 1588.3,280.8 1591.7,280.8 1595.1,280.8 1598.5,285.8 1601.8,285.8 1605.2,279.3 1608.6,273.4 1611.9,273.4 1615.3,273.4 1618.7,270.2 1622.0,269.9 1625.4,269.9 1628.8,268.2 1632.2,262.6 1635.5,257.4 1638.9,260.3 1642.3,260.3 1645.6,260.0 1649.0,262.3 1652.4,262.8 1655.8,262.9 1659.1,262.9 1662.5,263.5 1665.9,264.7 1669.2,275.8 1672.6,276.4 1676.0,276.5 1679.3,276.3 1682.7,274.8 1686.1,273.2 1689.5,272.7 1692.8,270.9 1696.2,270.1 1699.6,251.8 1702.9,250.3 1706.3,249.2 1709.7,247.3 1713.0,247.3 1716.4,247.3 1719.8,246.1 1723.2,246.1 1726.5,245.9 1729.9,252.5 1733.3,254.4 1736.6,262.6 1740.0,262.8" stroke="#a9dc6a" stroke-width="1.1" />
<polyline points="58.4,330.3 61.7,321.3 65.1,318.9 68.5,314.0 71.8,309.9 75.2,308.2 78.6,309.3 82.0,311.9 85.3,307.8 88.7,308.2 92.1,308.6 95.4,305.7 98.8,302.6 102.2,303.0 105.5,305.2 108.9,298.8 112.3,299.8 115.7,302.0 119.0,301.1 122.4,299.0 125.8,300.0 129.1,298.2 132.5,295.0 135.9,293.7 139.2,295.0 142.6,297.5 146.0,294.0 149.4,292.8 152.7,292.5 156.1,290.5 159.5,292.8 162.8,290.1 166.2,292.7 169.6,287.1 173.0,292.4 176.3,290.3 179.7,287.6 183.1,292.8 186.4,290.6 189.8,286.6 193.2,289.2 196.5,291.4 199.9,289.7 203.3,292.1 206.6,291.9 210.0,291.6 213.4,290.7 216.8,292.5 220.1,290.8 223.5,290.0 226.9,284.5 230.2,290.1 233.6,290.5 237.0,286.9 240.3,286.1 243.7,290.5 247.1,282.7 250.5,286.8 253.8,290.3 257.2,283.2 260.6,286.0 263.9,288.0 267.3,283.8 270.7,285.3 274.0,286.1 277.4,282.7 280.8,284.4 284.2,285.3 287.5,286.5 290.9,284.9 294.3,284.8 297.6,283.2 301.0,284.7 304.4,287.3 307.8,285.9 311.1,284.1 314.5,284.3 317.9,291.1 321.2,287.6 324.6,286.2 328.0,279.3 331.3,285.4 334.7,284.7 338.1,286.7 341.5,283.8 344.8,282.4 348.2,283.2 351.6,277.8 354.9,283.4 358.3,281.5 361.7,279.1 365.0,282.7 368.4,283.4 371.8,276.7 375.1,277.9 378.5,279.6 381.9,279.1 385.3,277.6 388.6,276.2 392.0,282.1 395.4,279.7 398.7,275.0 402.1,274.4 405.5,280.2 408.8,278.5 412.2,279.9 415.6,277.6 419.0,274.0 422.3,276.0 425.7,270.9 429.1,273.4 432.4,274.5 435.8,275.4 439.2,272.7 442.5,273.6 445.9,274.5 449.3,274.1 452.7,274.3 456.0,273.2 459.4,271.9 462.8,273.8 466.1,272.1 469.5,270.0 472.9,270.2 476.2,271.2 479.6,270.7 483.0,270.9 486.4,270.4 489.7,270.4 493.1,269.5 496.5,267.0 499.8,270.1 503.2,271.1 506.6,269.6 510.0,268.1 513.3,269.1 516.7,266.0 520.1,263.9 523.4,267.6 526.8,265.4 530.2,268.5 533.5,264.6 536.9,261.3 540.3,264.3 543.6,269.3 547.0,266.2 550.4,266.8 553.8,267.5 557.1,270.5 560.5,292.9 563.9,317.4 567.2,311.3 570.6,306.2 574.0,302.1 577.3,298.8 580.7,296.3 584.1,293.7 587.5,291.2 590.8,288.7 594.2,286.2 597.6,283.6 600.9,281.0 604.3,278.0 607.7,275.1 611.0,272.9 614.4,270.8 617.8,268.2 621.2,269.2 624.5,272.8 627.9,276.1 631.3,278.2 634.6,278.5 638.0,280.2 641.4,281.1 644.8,280.5 648.1,281.4 651.5,283.7 654.9,290.2 658.2,298.4 661.6,303.0 665.0,305.4 668.3,305.7 671.7,306.3 675.1,305.1 678.5,308.2 681.8,312.3 685.2,314.8 688.6,318.6 691.9,320.5 695.3,323.0 698.7,324.5 702.0,329.8 705.4,332.6 708.8,324.1 712.1,319.8 715.5,320.8 718.9,323.3 722.3,327.1 725.6,323.5 729.0,318.3 732.4,313.1 735.7,310.9 739.1,312.3 742.5,321.0 745.9,325.6 749.2,319.8 752.6,314.4 756.0,312.8 759.3,311.4 762.7,310.7 766.1,310.2 769.4,311.6 772.8,309.4 776.2,307.6 779.5,306.0 782.9,302.8 786.3,302.2 789.7,300.8 793.0,300.9 796.4,301.6 799.8,302.2 803.1,302.7 806.5,304.0 809.9,304.4 813.2,309.8 816.6,311.5 820.0,310.7 823.4,306.1 826.7,304.5 830.1,301.8 833.5,303.3 836.8,302.4 840.2,298.5 843.6,298.8 846.9,298.0 850.3,294.1 853.7,292.4 857.1,291.1 860.4,289.6 863.8,286.4 867.2,288.8 870.5,290.5 873.9,291.3 877.3,291.8 880.6,292.8 884.0,292.9 887.4,291.1 890.8,292.5 894.1,292.7 897.5,295.4 900.9,299.8 904.2,299.3 907.6,299.3 911.0,297.0 914.4,297.0 917.7,297.8 921.1,297.3 924.5,296.8 927.8,296.7 931.2,295.8 934.6,296.7 937.9,295.9 941.3,294.8 944.7,293.6 948.0,293.1 951.4,289.7 954.8,290.1 958.2,290.5 961.5,288.8 964.9,290.0 968.3,288.9 971.6,286.1 975.0,285.8 978.4,284.5 981.8,284.1 985.1,283.8 988.5,282.7 991.9,281.8 995.2,282.5 998.6,283.0 1002.0,284.4 1005.3,284.7 1008.7,283.9 1012.1,283.4 1015.4,284.3 1018.8,283.4 1022.2,282.4 1025.6,282.5 1028.9,281.8 1032.3,282.0 1035.7,280.5 1039.0,275.0 1042.4,277.1 1045.8,274.7 1049.2,274.3 1052.5,271.7 1055.9,270.9 1059.3,265.6 1062.6,264.8 1066.0,263.3 1069.4,261.7 1072.7,261.8 1076.1,258.7 1079.5,259.4 1082.8,259.7 1086.2,260.9 1089.6,261.8 1093.0,262.7 1096.3,265.3 1099.7,266.9 1103.1,273.5 1106.4,272.4 1109.8,271.6 1113.2,270.3 1116.5,264.2 1119.9,261.6 1123.3,261.9 1126.7,260.6 1130.0,257.3 1133.4,255.7 1136.8,250.9 1140.1,276.0 1143.5,289.3 1146.9,266.0 1150.2,227.1 1153.6,202.3 1157.0,189.3 1160.4,181.9 1163.7,179.0 1167.1,185.0 1170.5,197.1 1173.8,195.7 1177.2,190.8 1180.6,188.1 1183.9,187.4 1187.3,186.3 1190.7,189.4 1194.1,190.7 1197.4,189.3 1200.8,188.0 1204.2,187.2 1207.5,183.6 1210.9,178.8 1214.3,182.5 1217.7,177.2 1221.0,177.8 1224.4,174.6 1227.8,176.1 1231.1,173.1 1234.5,178.4 1237.9,177.3 1241.2,172.3 1244.6,171.4 1248.0,167.3 1251.3,165.5 1254.7,152.6 1258.1,148.5 1261.5,143.8 1264.8,140.3 1268.2,140.2 1271.6,148.2 1274.9,145.8 1278.3,149.4 1281.7,187.6 1285.0,185.0 1288.4,166.7 1291.8,154.3 1295.2,171.0 1298.5,168.2 1301.9,172.7 1305.3,169.2 1308.6,170.5 1312.0,170.1 1315.4,169.7 1318.8,164.5 1322.1,174.8 1325.5,173.5 1328.9,176.2 1332.2,194.1 1335.6,210.5 1339.0,214.0 1342.3,247.8 1345.7,254.4 1349.1,228.5 1352.5,222.8 1355.8,219.0 1359.2,212.6 1362.6,219.8 1365.9,228.9 1369.3,234.5 1372.7,231.4 1376.0,227.0 1379.4,234.5 1382.8,240.2 1386.2,242.9 1389.5,240.0 1392.9,238.7 1396.3,239.7 1399.6,246.1 1403.0,287.5 1406.4,294.3 1409.7,289.2 1413.1,286.3 1416.5,283.3 1419.8,286.8 1423.2,288.0 1426.6,291.2 1430.0,297.2 1433.3,298.6 1436.7,297.8 1440.1,289.0 1443.4,290.2 1446.8,301.1 1450.2,299.0 1453.5,301.7 1456.9,300.9 1460.3,300.5 1463.7,291.8 1467.0,285.0 1470.4,276.5 1473.8,272.4 1477.1,269.5 1480.5,266.0 1483.9,269.5 1487.2,273.3 1490.6,275.3 1494.0,282.9 1497.4,283.9 1500.7,289.9 1504.1,296.2 1507.5,293.3 1510.8,293.3 1514.2,293.1 1517.6,278.6 1521.0,263.4 1524.3,249.6 1527.7,251.9 1531.1,266.6 1534.4,267.5 1537.8,260.7 1541.2,256.9 1544.5,260.5 1547.9,255.7 1551.3,256.3 1554.7,259.8 1558.0,261.5 1561.4,263.7 1564.8,270.1 1568.1,276.3 1571.5,275.3 1574.9,271.2 1578.2,268.8 1581.6,266.0 1585.0,268.1 1588.3,265.5 1591.7,262.5 1595.1,258.9 1598.5,257.2 1601.8,257.0 1605.2,254.9 1608.6,253.5 1611.9,247.3 1615.3,238.6 1618.7,242.5 1622.0,247.7 1625.4,248.4 1628.8,249.6 1632.2,250.1 1635.5,247.5 1638.9,251.2 1642.3,253.6 1645.6,267.1 1649.0,269.3 1652.4,272.7 1655.8,272.5" stroke="#e064e4" stroke-width="1.1" />
</g>
<g clip-path="url(#mc)" shape-rendering="crispEdges"><line x1="61.7" y1="336.5" x2="61.7" y2="353.5" stroke="#8fd3fa" stroke-width="1"/><rect x="60.2" y="342.5" width="3" height="9.8" fill="#8fd3fa"/><line x1="65.1" y1="342.1" x2="65.1" y2="352.3" stroke="#f08374" stroke-width="1"/><rect x="64.0" y="346.0" width="2.2" height="6.3" fill="#1a2136" stroke="#f08374" stroke-width="0.9"/><line x1="68.5" y1="344.4" x2="68.5" y2="346.4" stroke="#f08374" stroke-width="1"/><rect x="67.4" y="345.0" width="2.2" height="1.0" fill="#1a2136" stroke="#f08374" stroke-width="0.9"/><line x1="71.8" y1="342.5" x2="71.8" y2="351.9" stroke="#8fd3fa" stroke-width="1"/><rect x="70.3" y="345.0" width="3" height="1.7" fill="#8fd3fa"/><line x1="75.2" y1="340.1" x2="75.2" y2="347.4" stroke="#f08374" stroke-width="1"/><rect x="74.1" y="342.6" width="2.2" height="4.1" fill="#1a2136" stroke="#f08374" stroke-width="0.9"/><line x1="78.6" y1="334.0" x2="78.6" y2="343.3" stroke="#f08374" stroke-width="1"/><rect x="77.5" y="337.8" width="2.2" height="4.8" fill="#1a2136" stroke="#f08374" stroke-width="0.9"/><line x1="82.0" y1="337.3" x2="82.0" y2="345.2" stroke="#8fd3fa" stroke-width="1"/><rect x="80.5" y="337.8" width="3" height="3.1" fill="#8fd3fa"/><line x1="85.3" y1="335.5" x2="85.3" y2="343.1" stroke="#f08374" stroke-width="1"/><rect x="84.2" y="337.3" width="2.2" height="3.6" fill="#1a2136" stroke="#f08374" stroke-width="0.9"/><line x1="88.7" y1="335.4" x2="88.7" y2="348.9" stroke="#8fd3fa" stroke-width="1"/><rect x="87.2" y="337.3" width="3" height="4.6" fill="#8fd3fa"/><line x1="92.1" y1="339.1" x2="92.1" y2="345.3" stroke="#f08374" stroke-width="1"/><rect x="91.0" y="340.3" width="2.2" height="1.7" fill="#1a2136" stroke="#f08374" stroke-width="0.9"/><line x1="95.4" y1="335.6" x2="95.4" y2="343.8" stroke="#f08374" stroke-width="1"/><rect x="94.3" y="337.7" width="2.2" height="2.6" fill="#1a2136" stroke="#f08374" stroke-width="0.9"/><line x1="98.8" y1="336.7" x2="98.8" y2="340.5" stroke="#8fd3fa" stroke-width="1"/><rect x="97.3" y="337.7" width="3" height="1.0" fill="#8fd3fa"/><line x1="102.2" y1="336.7" x2="102.2" y2="340.0" stroke="#8fd3fa" stroke-width="1"/><rect x="100.7" y="338.2" width="3" height="1.1" fill="#8fd3fa"/><line x1="105.5" y1="337.0" x2="105.5" y2="341.1" stroke="#f08374" stroke-width="1"/><rect x="104.4" y="337.4" width="2.2" height="2.0" fill="#1a2136" stroke="#f08374" stroke-width="0.9"/><line x1="108.9" y1="337.3" x2="108.9" y2="343.8" stroke="#8fd3fa" stroke-width="1"/><rect x="107.4" y="337.4" width="3" height="2.0" fill="#8fd3fa"/><line x1="112.3" y1="336.0" x2="112.3" y2="339.5" stroke="#f08374" stroke-width="1"/><rect x="111.2" y="336.2" width="2.2" height="3.2" fill="#1a2136" stroke="#f08374" stroke-width="0.9"/><line x1="115.7" y1="336.0" x2="115.7" y2="342.8" stroke="#8fd3fa" stroke-width="1"/><rect x="114.2" y="336.2" width="3" height="1.8" fill="#8fd3fa"/><line x1="119.0" y1="337.2" x2="119.0" y2="338.7" stroke="#8fd3fa" stroke-width="1"/><rect x="117.5" y="338.0" width="3" height="1.0" fill="#8fd3fa"/><line x1="122.4" y1="338.2" x2="122.4" y2="338.5" stroke="#f08374" stroke-width="1"/><rect x="121.3" y="338.2" width="2.2" height="1.0" fill="#1a2136" stroke="#f08374" stroke-width="0.9"/><line x1="125.8" y1="331.1" x2="125.8" y2="340.0" stroke="#f08374" stroke-width="1"/><rect x="124.7" y="333.2" width="2.2" height="5.0" fill="#1a2136" stroke="#f08374" stroke-width="0.9"/><line x1="129.1" y1="331.1" x2="129.1" y2="338.3" stroke="#8fd3fa" stroke-width="1"/><rect x="127.6" y="333.2" width="3" height="2.7" fill="#8fd3fa"/><line x1="132.5" y1="329.0" x2="132.5" y2="337.5" stroke="#f08374" stroke-width="1"/><rect x="131.4" y="329.1" width="2.2" height="6.8" fill="#1a2136" stroke="#f08374" stroke-width="0.9"/><line x1="135.9" y1="328.3" x2="135.9" y2="332.2" stroke="#8fd3fa" stroke-width="1"/><rect x="134.4" y="329.1" width="3" height="1.0" fill="#8fd3fa"/><line x1="139.2" y1="322.7" x2="139.2" y2="333.1" stroke="#f08374" stroke-width="1"/><rect x="138.2" y="325.8" width="2.2" height="3.3" fill="#1a2136" stroke="#f08374" stroke-width="0.9"/><line x1="142.6" y1="325.7" x2="142.6" y2="334.0" stroke="#8fd3fa" stroke-width="1"/><rect x="141.1" y="325.8" width="3" height="4.5" fill="#8fd3fa"/><line x1="146.0" y1="316.8" x2="146.0" y2="335.5" stroke="#f08374" stroke-width="1"/><rect x="144.9" y="321.3" width="2.2" height="9.0" fill="#1a2136" stroke="#f08374" stroke-width="0.9"/><line x1="149.4" y1="318.7" x2="149.4" y2="321.7" stroke="#f08374" stroke-width="1"/><rect x="148.3" y="318.9" width="2.2" height="2.4" fill="#1a2136" stroke="#f08374" stroke-width="0.9"/><line x1="152.7" y1="313.8" x2="152.7" y2="319.0" stroke="#f08374" stroke-width="1"/><rect x="151.6" y="314.0" width="2.2" height="4.9" fill="#1a2136" stroke="#f08374" stroke-width="0.9"/><line x1="156.1" y1="306.5" x2="156.1" y2="317.0" stroke="#f08374" stroke-width="1"/><rect x="155.0" y="309.9" width="2.2" height="4.0" fill="#1a2136" stroke="#f08374" stroke-width="0.9"/><line x1="159.5" y1="306.4" x2="159.5" y2="313.1" stroke="#f08374" stroke-width="1"/><rect x="158.4" y="308.2" width="2.2" height="1.7" fill="#1a2136" stroke="#f08374" stroke-width="0.9"/><line x1="162.8" y1="306.4" x2="162.8" y2="309.9" stroke="#8fd3fa" stroke-width="1"/><rect x="161.3" y="308.2" width="3" height="1.1" fill="#8fd3fa"/><line x1="166.2" y1="309.1" x2="166.2" y2="312.1" stroke="#8fd3fa" stroke-width="1"/><rect x="164.7" y="309.3" width="3" height="2.6" fill="#8fd3fa"/><line x1="169.6" y1="305.3" x2="169.6" y2="312.3" stroke="#f08374" stroke-width="1"/><rect x="168.5" y="307.8" width="2.2" height="4.1" fill="#1a2136" stroke="#f08374" stroke-width="0.9"/><line x1="173.0" y1="307.1" x2="173.0" y2="309.2" stroke="#8fd3fa" stroke-width="1"/><rect x="171.5" y="307.8" width="3" height="1.0" fill="#8fd3fa"/><line x1="176.3" y1="308.2" x2="176.3" y2="309.1" stroke="#8fd3fa" stroke-width="1"/><rect x="174.8" y="308.2" width="3" height="1.0" fill="#8fd3fa"/><line x1="179.7" y1="305.1" x2="179.7" y2="310.9" stroke="#f08374" stroke-width="1"/><rect x="178.6" y="305.7" width="2.2" height="3.0" fill="#1a2136" stroke="#f08374" stroke-width="0.9"/><line x1="183.1" y1="301.7" x2="183.1" y2="306.4" stroke="#f08374" stroke-width="1"/><rect x="182.0" y="302.6" width="2.2" height="3.1" fill="#1a2136" stroke="#f08374" stroke-width="0.9"/><line x1="186.4" y1="296.6" x2="186.4" y2="304.2" stroke="#8fd3fa" stroke-width="1"/><rect x="184.9" y="302.6" width="3" height="1.0" fill="#8fd3fa"/><line x1="189.8" y1="299.5" x2="189.8" y2="306.9" stroke="#8fd3fa" stroke-width="1"/><rect x="188.3" y="303.0" width="3" height="2.2" fill="#8fd3fa"/><line x1="193.2" y1="298.7" x2="193.2" y2="306.2" stroke="#f08374" stroke-width="1"/><rect x="192.1" y="298.8" width="2.2" height="6.5" fill="#1a2136" stroke="#f08374" stroke-width="0.9"/><line x1="196.5" y1="297.7" x2="196.5" y2="302.5" stroke="#8fd3fa" stroke-width="1"/><rect x="195.0" y="298.8" width="3" height="1.1" fill="#8fd3fa"/><line x1="199.9" y1="299.1" x2="199.9" y2="304.2" stroke="#8fd3fa" stroke-width="1"/><rect x="198.4" y="299.8" width="3" height="2.2" fill="#8fd3fa"/><line x1="203.3" y1="299.7" x2="203.3" y2="302.5" stroke="#f08374" stroke-width="1"/><rect x="202.2" y="301.1" width="2.2" height="1.0" fill="#1a2136" stroke="#f08374" stroke-width="0.9"/><line x1="206.6" y1="295.4" x2="206.6" y2="301.2" stroke="#f08374" stroke-width="1"/><rect x="205.5" y="299.0" width="2.2" height="2.1" fill="#1a2136" stroke="#f08374" stroke-width="0.9"/><line x1="210.0" y1="295.9" x2="210.0" y2="300.3" stroke="#8fd3fa" stroke-width="1"/><rect x="208.5" y="299.0" width="3" height="1.1" fill="#8fd3fa"/><line x1="213.4" y1="298.2" x2="213.4" y2="300.4" stroke="#f08374" stroke-width="1"/><rect x="212.3" y="298.2" width="2.2" height="1.8" fill="#1a2136" stroke="#f08374" stroke-width="0.9"/><line x1="216.8" y1="292.4" x2="216.8" y2="305.0" stroke="#f08374" stroke-width="1"/><rect x="215.7" y="295.0" width="2.2" height="3.2" fill="#1a2136" stroke="#f08374" stroke-width="0.9"/><line x1="220.1" y1="293.6" x2="220.1" y2="296.2" stroke="#f08374" stroke-width="1"/><rect x="219.0" y="293.7" width="2.2" height="1.3" fill="#1a2136" stroke="#f08374" stroke-width="0.9"/><line x1="223.5" y1="292.4" x2="223.5" y2="297.8" stroke="#8fd3fa" stroke-width="1"/><rect x="222.0" y="293.7" width="3" height="1.3" fill="#8fd3fa"/><line x1="226.9" y1="294.6" x2="226.9" y2="298.8" stroke="#8fd3fa" stroke-width="1"/><rect x="225.4" y="295.0" width="3" height="2.6" fill="#8fd3fa"/><line x1="230.2" y1="293.3" x2="230.2" y2="300.8" stroke="#f08374" stroke-width="1"/><rect x="229.1" y="294.0" width="2.2" height="3.5" fill="#1a2136" stroke="#f08374" stroke-width="0.9"/><line x1="233.6" y1="292.3" x2="233.6" y2="299.2" stroke="#f08374" stroke-width="1"/><rect x="232.5" y="292.8" width="2.2" height="1.2" fill="#1a2136" stroke="#f08374" stroke-width="0.9"/><line x1="237.0" y1="291.9" x2="237.0" y2="293.3" stroke="#f08374" stroke-width="1"/><rect x="235.9" y="292.5" width="2.2" height="1.0" fill="#1a2136" stroke="#f08374" stroke-width="0.9"/><line x1="240.3" y1="288.3" x2="240.3" y2="293.8" stroke="#f08374" stroke-width="1"/><rect x="239.2" y="290.5" width="2.2" height="2.1" fill="#1a2136" stroke="#f08374" stroke-width="0.9"/><line x1="243.7" y1="290.3" x2="243.7" y2="294.6" stroke="#8fd3fa" stroke-width="1"/><rect x="242.2" y="290.5" width="3" height="2.3" fill="#8fd3fa"/><line x1="247.1" y1="290.0" x2="247.1" y2="295.6" stroke="#f08374" stroke-width="1"/><rect x="246.0" y="290.1" width="2.2" height="2.7" fill="#1a2136" stroke="#f08374" stroke-width="0.9"/><line x1="250.5" y1="288.0" x2="250.5" y2="295.5" stroke="#8fd3fa" stroke-width="1"/><rect x="249.0" y="290.1" width="3" height="2.6" fill="#8fd3fa"/><line x1="253.8" y1="285.3" x2="253.8" y2="293.5" stroke="#f08374" stroke-width="1"/><rect x="252.7" y="287.1" width="2.2" height="5.6" fill="#1a2136" stroke="#f08374" stroke-width="0.9"/><line x1="257.2" y1="286.2" x2="257.2" y2="293.3" stroke="#8fd3fa" stroke-width="1"/><rect x="255.7" y="287.1" width="3" height="5.2" fill="#8fd3fa"/><line x1="260.6" y1="286.3" x2="260.6" y2="292.5" stroke="#f08374" stroke-width="1"/><rect x="259.5" y="290.3" width="2.2" height="2.1" fill="#1a2136" stroke="#f08374" stroke-width="0.9"/><line x1="263.9" y1="283.6" x2="263.9" y2="290.3" stroke="#f08374" stroke-width="1"/><rect x="262.8" y="287.6" width="2.2" height="2.7" fill="#1a2136" stroke="#f08374" stroke-width="0.9"/><line x1="267.3" y1="287.1" x2="267.3" y2="293.3" stroke="#8fd3fa" stroke-width="1"/><rect x="265.8" y="287.6" width="3" height="5.2" fill="#8fd3fa"/><line x1="270.7" y1="286.5" x2="270.7" y2="294.0" stroke="#f08374" stroke-width="1"/><rect x="269.6" y="290.6" width="2.2" height="2.1" fill="#1a2136" stroke="#f08374" stroke-width="0.9"/><line x1="274.0" y1="285.7" x2="274.0" y2="294.5" stroke="#f08374" stroke-width="1"/><rect x="272.9" y="286.6" width="2.2" height="4.0" fill="#1a2136" stroke="#f08374" stroke-width="0.9"/><line x1="277.4" y1="286.1" x2="277.4" y2="290.3" stroke="#8fd3fa" stroke-width="1"/><rect x="275.9" y="286.6" width="3" height="2.6" fill="#8fd3fa"/><line x1="280.8" y1="287.8" x2="280.8" y2="293.9" stroke="#8fd3fa" stroke-width="1"/><rect x="279.3" y="289.2" width="3" height="2.2" fill="#8fd3fa"/><line x1="284.2" y1="287.2" x2="284.2" y2="293.2" stroke="#f08374" stroke-width="1"/><rect x="283.1" y="289.7" width="2.2" height="1.6" fill="#1a2136" stroke="#f08374" stroke-width="0.9"/><line x1="287.5" y1="288.9" x2="287.5" y2="292.8" stroke="#8fd3fa" stroke-width="1"/><rect x="286.0" y="289.7" width="3" height="2.3" fill="#8fd3fa"/><line x1="290.9" y1="291.6" x2="290.9" y2="295.4" stroke="#f08374" stroke-width="1"/><rect x="289.8" y="291.9" width="2.2" height="1.0" fill="#1a2136" stroke="#f08374" stroke-width="0.9"/><line x1="294.3" y1="289.6" x2="294.3" y2="294.3" stroke="#f08374" stroke-width="1"/><rect x="293.2" y="291.6" width="2.2" height="1.0" fill="#1a2136" stroke="#f08374" stroke-width="0.9"/><line x1="297.6" y1="290.4" x2="297.6" y2="292.6" stroke="#f08374" stroke-width="1"/><rect x="296.5" y="290.7" width="2.2" height="1.0" fill="#1a2136" stroke="#f08374" stroke-width="0.9"/><line x1="301.0" y1="288.1" x2="301.0" y2="294.1" stroke="#8fd3fa" stroke-width="1"/><rect x="299.5" y="290.7" width="3" height="1.8" fill="#8fd3fa"/><line x1="304.4" y1="290.6" x2="304.4" y2="293.7" stroke="#f08374" stroke-width="1"/><rect x="303.3" y="290.8" width="2.2" height="1.8" fill="#1a2136" stroke="#f08374" stroke-width="0.9"/><line x1="307.8" y1="286.1" x2="307.8" y2="291.3" stroke="#f08374" stroke-width="1"/><rect x="306.6" y="290.0" width="2.2" height="1.0" fill="#1a2136" stroke="#f08374" stroke-width="0.9"/><line x1="311.1" y1="284.1" x2="311.1" y2="290.6" stroke="#f08374" stroke-width="1"/><rect x="310.0" y="284.5" width="2.2" height="5.5" fill="#1a2136" stroke="#f08374" stroke-width="0.9"/><line x1="314.5" y1="282.3" x2="314.5" y2="293.4" stroke="#8fd3fa" stroke-width="1"/><rect x="313.0" y="284.5" width="3" height="5.6" fill="#8fd3fa"/><line x1="317.9" y1="289.8" x2="317.9" y2="290.8" stroke="#8fd3fa" stroke-width="1"/><rect x="316.4" y="290.1" width="3" height="1.0" fill="#8fd3fa"/><line x1="321.2" y1="286.3" x2="321.2" y2="291.2" stroke="#f08374" stroke-width="1"/><rect x="320.1" y="286.9" width="2.2" height="3.6" fill="#1a2136" stroke="#f08374" stroke-width="0.9"/><line x1="324.6" y1="284.8" x2="324.6" y2="287.2" stroke="#f08374" stroke-width="1"/><rect x="323.5" y="286.1" width="2.2" height="1.0" fill="#1a2136" stroke="#f08374" stroke-width="0.9"/><line x1="328.0" y1="285.4" x2="328.0" y2="290.9" stroke="#8fd3fa" stroke-width="1"/><rect x="326.5" y="286.1" width="3" height="4.4" fill="#8fd3fa"/><line x1="331.3" y1="276.1" x2="331.3" y2="292.9" stroke="#f08374" stroke-width="1"/><rect x="330.2" y="282.7" width="2.2" height="7.8" fill="#1a2136" stroke="#f08374" stroke-width="0.9"/><line x1="334.7" y1="282.5" x2="334.7" y2="292.7" stroke="#8fd3fa" stroke-width="1"/><rect x="333.2" y="282.7" width="3" height="4.0" fill="#8fd3fa"/><line x1="338.1" y1="286.6" x2="338.1" y2="291.2" stroke="#8fd3fa" stroke-width="1"/><rect x="336.6" y="286.8" width="3" height="3.5" fill="#8fd3fa"/><line x1="341.5" y1="275.7" x2="341.5" y2="293.1" stroke="#f08374" stroke-width="1"/><rect x="340.4" y="283.2" width="2.2" height="7.1" fill="#1a2136" stroke="#f08374" stroke-width="0.9"/><line x1="344.8" y1="280.8" x2="344.8" y2="287.0" stroke="#8fd3fa" stroke-width="1"/><rect x="343.3" y="283.2" width="3" height="2.8" fill="#8fd3fa"/><line x1="348.2" y1="285.6" x2="348.2" y2="289.8" stroke="#8fd3fa" stroke-width="1"/><rect x="346.7" y="286.0" width="3" height="2.0" fill="#8fd3fa"/><line x1="351.6" y1="283.6" x2="351.6" y2="288.4" stroke="#f08374" stroke-width="1"/><rect x="350.5" y="283.8" width="2.2" height="4.2" fill="#1a2136" stroke="#f08374" stroke-width="0.9"/><line x1="354.9" y1="282.9" x2="354.9" y2="285.4" stroke="#8fd3fa" stroke-width="1"/><rect x="353.4" y="283.8" width="3" height="1.5" fill="#8fd3fa"/><line x1="358.3" y1="284.4" x2="358.3" y2="289.0" stroke="#8fd3fa" stroke-width="1"/><rect x="356.8" y="285.3" width="3" height="1.0" fill="#8fd3fa"/><line x1="361.7" y1="280.5" x2="361.7" y2="287.4" stroke="#f08374" stroke-width="1"/><rect x="360.6" y="282.7" width="2.2" height="3.5" fill="#1a2136" stroke="#f08374" stroke-width="0.9"/><line x1="365.0" y1="280.9" x2="365.0" y2="285.5" stroke="#8fd3fa" stroke-width="1"/><rect x="363.5" y="282.7" width="3" height="1.8" fill="#8fd3fa"/><line x1="368.4" y1="284.1" x2="368.4" y2="287.0" stroke="#8fd3fa" stroke-width="1"/><rect x="366.9" y="284.4" width="3" height="1.0" fill="#8fd3fa"/><line x1="371.8" y1="284.4" x2="371.8" y2="289.0" stroke="#8fd3fa" stroke-width="1"/><rect x="370.3" y="285.3" width="3" height="1.2" fill="#8fd3fa"/><line x1="375.1" y1="280.6" x2="375.1" y2="287.5" stroke="#f08374" stroke-width="1"/><rect x="374.0" y="284.9" width="2.2" height="1.6" fill="#1a2136" stroke="#f08374" stroke-width="0.9"/><line x1="378.5" y1="283.2" x2="378.5" y2="287.4" stroke="#f08374" stroke-width="1"/><rect x="377.4" y="284.8" width="2.2" height="1.0" fill="#1a2136" stroke="#f08374" stroke-width="0.9"/><line x1="381.9" y1="282.3" x2="381.9" y2="285.2" stroke="#f08374" stroke-width="1"/><rect x="380.8" y="283.2" width="2.2" height="1.5" fill="#1a2136" stroke="#f08374" stroke-width="0.9"/><line x1="385.3" y1="280.9" x2="385.3" y2="288.5" stroke="#8fd3fa" stroke-width="1"/><rect x="383.8" y="283.2" width="3" height="1.4" fill="#8fd3fa"/><line x1="388.6" y1="282.0" x2="388.6" y2="289.5" stroke="#8fd3fa" stroke-width="1"/><rect x="387.1" y="284.7" width="3" height="2.6" fill="#8fd3fa"/><line x1="392.0" y1="282.4" x2="392.0" y2="289.4" stroke="#f08374" stroke-width="1"/><rect x="390.9" y="285.9" width="2.2" height="1.4" fill="#1a2136" stroke="#f08374" stroke-width="0.9"/><line x1="395.4" y1="282.3" x2="395.4" y2="287.0" stroke="#f08374" stroke-width="1"/><rect x="394.3" y="284.1" width="2.2" height="1.8" fill="#1a2136" stroke="#f08374" stroke-width="0.9"/><line x1="398.7" y1="283.4" x2="398.7" y2="286.0" stroke="#8fd3fa" stroke-width="1"/><rect x="397.2" y="284.1" width="3" height="1.0" fill="#8fd3fa"/><line x1="402.1" y1="284.1" x2="402.1" y2="292.1" stroke="#8fd3fa" stroke-width="1"/><rect x="400.6" y="284.3" width="3" height="6.8" fill="#8fd3fa"/><line x1="405.5" y1="284.9" x2="405.5" y2="293.3" stroke="#f08374" stroke-width="1"/><rect x="404.4" y="287.6" width="2.2" height="3.5" fill="#1a2136" stroke="#f08374" stroke-width="0.9"/><line x1="408.8" y1="284.4" x2="408.8" y2="288.1" stroke="#f08374" stroke-width="1"/><rect x="407.7" y="286.2" width="2.2" height="1.4" fill="#1a2136" stroke="#f08374" stroke-width="0.9"/><line x1="412.2" y1="278.4" x2="412.2" y2="287.3" stroke="#f08374" stroke-width="1"/><rect x="411.1" y="279.3" width="2.2" height="6.9" fill="#1a2136" stroke="#f08374" stroke-width="0.9"/><line x1="415.6" y1="277.6" x2="415.6" y2="286.3" stroke="#8fd3fa" stroke-width="1"/><rect x="414.1" y="279.3" width="3" height="6.0" fill="#8fd3fa"/><line x1="419.0" y1="282.7" x2="419.0" y2="290.2" stroke="#f08374" stroke-width="1"/><rect x="417.9" y="284.7" width="2.2" height="1.0" fill="#1a2136" stroke="#f08374" stroke-width="0.9"/><line x1="422.3" y1="284.3" x2="422.3" y2="288.6" stroke="#8fd3fa" stroke-width="1"/><rect x="420.8" y="284.7" width="3" height="2.0" fill="#8fd3fa"/><line x1="425.7" y1="281.1" x2="425.7" y2="287.6" stroke="#f08374" stroke-width="1"/><rect x="424.6" y="283.8" width="2.2" height="2.9" fill="#1a2136" stroke="#f08374" stroke-width="0.9"/><line x1="429.1" y1="281.2" x2="429.1" y2="290.4" stroke="#f08374" stroke-width="1"/><rect x="428.0" y="282.4" width="2.2" height="1.4" fill="#1a2136" stroke="#f08374" stroke-width="0.9"/><line x1="432.4" y1="282.3" x2="432.4" y2="284.6" stroke="#8fd3fa" stroke-width="1"/><rect x="430.9" y="282.4" width="3" height="1.0" fill="#8fd3fa"/><line x1="435.8" y1="277.5" x2="435.8" y2="285.9" stroke="#f08374" stroke-width="1"/><rect x="434.7" y="277.8" width="2.2" height="5.3" fill="#1a2136" stroke="#f08374" stroke-width="0.9"/><line x1="439.2" y1="272.7" x2="439.2" y2="284.7" stroke="#8fd3fa" stroke-width="1"/><rect x="437.7" y="277.8" width="3" height="5.6" fill="#8fd3fa"/><line x1="442.5" y1="281.4" x2="442.5" y2="284.9" stroke="#f08374" stroke-width="1"/><rect x="441.4" y="281.5" width="2.2" height="1.8" fill="#1a2136" stroke="#f08374" stroke-width="0.9"/><line x1="445.9" y1="277.7" x2="445.9" y2="283.8" stroke="#f08374" stroke-width="1"/><rect x="444.8" y="279.1" width="2.2" height="2.5" fill="#1a2136" stroke="#f08374" stroke-width="0.9"/><line x1="449.3" y1="277.8" x2="449.3" y2="284.6" stroke="#8fd3fa" stroke-width="1"/><rect x="447.8" y="279.1" width="3" height="3.7" fill="#8fd3fa"/><line x1="452.7" y1="279.6" x2="452.7" y2="284.7" stroke="#8fd3fa" stroke-width="1"/><rect x="451.2" y="282.7" width="3" height="1.0" fill="#8fd3fa"/><line x1="456.0" y1="275.8" x2="456.0" y2="288.7" stroke="#f08374" stroke-width="1"/><rect x="454.9" y="276.7" width="2.2" height="6.7" fill="#1a2136" stroke="#f08374" stroke-width="0.9"/><line x1="459.4" y1="276.3" x2="459.4" y2="280.0" stroke="#8fd3fa" stroke-width="1"/><rect x="457.9" y="276.7" width="3" height="1.2" fill="#8fd3fa"/><line x1="462.8" y1="277.0" x2="462.8" y2="282.2" stroke="#8fd3fa" stroke-width="1"/><rect x="461.3" y="277.9" width="3" height="1.6" fill="#8fd3fa"/><line x1="466.1" y1="278.8" x2="466.1" y2="287.1" stroke="#f08374" stroke-width="1"/><rect x="465.0" y="279.1" width="2.2" height="1.0" fill="#1a2136" stroke="#f08374" stroke-width="0.9"/><line x1="469.5" y1="276.9" x2="469.5" y2="279.2" stroke="#f08374" stroke-width="1"/><rect x="468.4" y="277.6" width="2.2" height="1.4" fill="#1a2136" stroke="#f08374" stroke-width="0.9"/><line x1="472.9" y1="275.6" x2="472.9" y2="278.6" stroke="#f08374" stroke-width="1"/><rect x="471.8" y="276.2" width="2.2" height="1.4" fill="#1a2136" stroke="#f08374" stroke-width="0.9"/><line x1="476.2" y1="276.2" x2="476.2" y2="283.1" stroke="#8fd3fa" stroke-width="1"/><rect x="474.8" y="276.2" width="3" height="5.9" fill="#8fd3fa"/><line x1="479.6" y1="278.7" x2="479.6" y2="284.3" stroke="#f08374" stroke-width="1"/><rect x="478.5" y="279.7" width="2.2" height="2.4" fill="#1a2136" stroke="#f08374" stroke-width="0.9"/><line x1="483.0" y1="274.2" x2="483.0" y2="280.3" stroke="#f08374" stroke-width="1"/><rect x="481.9" y="275.0" width="2.2" height="4.7" fill="#1a2136" stroke="#f08374" stroke-width="0.9"/><line x1="486.4" y1="273.9" x2="486.4" y2="277.4" stroke="#f08374" stroke-width="1"/><rect x="485.3" y="274.4" width="2.2" height="1.0" fill="#1a2136" stroke="#f08374" stroke-width="0.9"/><line x1="489.7" y1="269.3" x2="489.7" y2="281.6" stroke="#8fd3fa" stroke-width="1"/><rect x="488.2" y="274.4" width="3" height="5.8" fill="#8fd3fa"/><line x1="493.1" y1="278.1" x2="493.1" y2="283.1" stroke="#f08374" stroke-width="1"/><rect x="492.0" y="278.5" width="2.2" height="1.7" fill="#1a2136" stroke="#f08374" stroke-width="0.9"/><line x1="496.5" y1="277.6" x2="496.5" y2="280.4" stroke="#8fd3fa" stroke-width="1"/><rect x="495.0" y="278.5" width="3" height="1.4" fill="#8fd3fa"/><line x1="499.8" y1="277.4" x2="499.8" y2="282.6" stroke="#f08374" stroke-width="1"/><rect x="498.7" y="277.6" width="2.2" height="2.3" fill="#1a2136" stroke="#f08374" stroke-width="0.9"/><line x1="503.2" y1="271.0" x2="503.2" y2="279.4" stroke="#f08374" stroke-width="1"/><rect x="502.1" y="274.0" width="2.2" height="3.6" fill="#1a2136" stroke="#f08374" stroke-width="0.9"/><line x1="506.6" y1="272.9" x2="506.6" y2="277.5" stroke="#8fd3fa" stroke-width="1"/><rect x="505.1" y="274.0" width="3" height="2.0" fill="#8fd3fa"/><line x1="510.0" y1="270.4" x2="510.0" y2="282.0" stroke="#f08374" stroke-width="1"/><rect x="508.9" y="270.9" width="2.2" height="5.1" fill="#1a2136" stroke="#f08374" stroke-width="0.9"/><line x1="513.3" y1="270.1" x2="513.3" y2="275.3" stroke="#8fd3fa" stroke-width="1"/><rect x="511.8" y="270.9" width="3" height="2.6" fill="#8fd3fa"/><line x1="516.7" y1="270.4" x2="516.7" y2="277.6" stroke="#8fd3fa" stroke-width="1"/><rect x="515.2" y="273.4" width="3" height="1.1" fill="#8fd3fa"/><line x1="520.1" y1="273.4" x2="520.1" y2="276.1" stroke="#8fd3fa" stroke-width="1"/><rect x="518.6" y="274.5" width="3" height="1.0" fill="#8fd3fa"/><line x1="523.4" y1="271.2" x2="523.4" y2="275.7" stroke="#f08374" stroke-width="1"/><rect x="522.3" y="272.7" width="2.2" height="2.8" fill="#1a2136" stroke="#f08374" stroke-width="0.9"/><line x1="526.8" y1="269.4" x2="526.8" y2="274.4" stroke="#8fd3fa" stroke-width="1"/><rect x="525.3" y="272.7" width="3" height="1.0" fill="#8fd3fa"/><line x1="530.2" y1="270.2" x2="530.2" y2="275.1" stroke="#8fd3fa" stroke-width="1"/><rect x="528.7" y="273.6" width="3" height="1.0" fill="#8fd3fa"/><line x1="533.5" y1="273.2" x2="533.5" y2="275.0" stroke="#f08374" stroke-width="1"/><rect x="532.4" y="274.1" width="2.2" height="1.0" fill="#1a2136" stroke="#f08374" stroke-width="0.9"/><line x1="536.9" y1="273.1" x2="536.9" y2="274.7" stroke="#8fd3fa" stroke-width="1"/><rect x="535.4" y="274.1" width="3" height="1.0" fill="#8fd3fa"/><line x1="540.3" y1="273.2" x2="540.3" y2="276.6" stroke="#f08374" stroke-width="1"/><rect x="539.2" y="273.2" width="2.2" height="1.1" fill="#1a2136" stroke="#f08374" stroke-width="0.9"/><line x1="543.6" y1="271.3" x2="543.6" y2="273.7" stroke="#f08374" stroke-width="1"/><rect x="542.5" y="271.9" width="2.2" height="1.3" fill="#1a2136" stroke="#f08374" stroke-width="0.9"/><line x1="547.0" y1="271.2" x2="547.0" y2="275.0" stroke="#8fd3fa" stroke-width="1"/><rect x="545.5" y="271.9" width="3" height="2.0" fill="#8fd3fa"/><line x1="550.4" y1="271.1" x2="550.4" y2="275.6" stroke="#f08374" stroke-width="1"/><rect x="549.3" y="272.1" width="2.2" height="1.7" fill="#1a2136" stroke="#f08374" stroke-width="0.9"/><line x1="553.8" y1="268.1" x2="553.8" y2="272.9" stroke="#f08374" stroke-width="1"/><rect x="552.7" y="270.0" width="2.2" height="2.0" fill="#1a2136" stroke="#f08374" stroke-width="0.9"/><line x1="557.1" y1="265.3" x2="557.1" y2="273.6" stroke="#8fd3fa" stroke-width="1"/><rect x="555.6" y="270.0" width="3" height="1.0" fill="#8fd3fa"/><line x1="560.5" y1="270.1" x2="560.5" y2="274.3" stroke="#8fd3fa" stroke-width="1"/><rect x="559.0" y="270.2" width="3" height="1.0" fill="#8fd3fa"/><line x1="563.9" y1="266.4" x2="563.9" y2="273.9" stroke="#f08374" stroke-width="1"/><rect x="562.8" y="270.7" width="2.2" height="1.0" fill="#1a2136" stroke="#f08374" stroke-width="0.9"/><line x1="567.2" y1="270.4" x2="567.2" y2="274.1" stroke="#8fd3fa" stroke-width="1"/><rect x="565.7" y="270.7" width="3" height="1.0" fill="#8fd3fa"/><line x1="570.6" y1="268.5" x2="570.6" y2="271.0" stroke="#f08374" stroke-width="1"/><rect x="569.5" y="270.4" width="2.2" height="1.0" fill="#1a2136" stroke="#f08374" stroke-width="0.9"/><line x1="574.0" y1="270.3" x2="574.0" y2="275.9" stroke="#8fd3fa" stroke-width="1"/><rect x="572.5" y="270.4" width="3" height="1.0" fill="#8fd3fa"/><line x1="577.3" y1="267.6" x2="577.3" y2="271.0" stroke="#f08374" stroke-width="1"/><rect x="576.2" y="269.5" width="2.2" height="1.0" fill="#1a2136" stroke="#f08374" stroke-width="0.9"/><line x1="580.7" y1="266.8" x2="580.7" y2="269.8" stroke="#f08374" stroke-width="1"/><rect x="579.6" y="267.0" width="2.2" height="2.5" fill="#1a2136" stroke="#f08374" stroke-width="0.9"/><line x1="584.1" y1="266.5" x2="584.1" y2="272.8" stroke="#8fd3fa" stroke-width="1"/><rect x="582.6" y="267.0" width="3" height="3.1" fill="#8fd3fa"/><line x1="587.5" y1="269.3" x2="587.5" y2="271.4" stroke="#8fd3fa" stroke-width="1"/><rect x="586.0" y="270.1" width="3" height="1.0" fill="#8fd3fa"/><line x1="590.8" y1="265.4" x2="590.8" y2="273.9" stroke="#f08374" stroke-width="1"/><rect x="589.7" y="269.6" width="2.2" height="1.5" fill="#1a2136" stroke="#f08374" stroke-width="0.9"/><line x1="594.2" y1="267.8" x2="594.2" y2="273.6" stroke="#f08374" stroke-width="1"/><rect x="593.1" y="268.1" width="2.2" height="1.5" fill="#1a2136" stroke="#f08374" stroke-width="0.9"/><line x1="597.6" y1="266.4" x2="597.6" y2="271.8" stroke="#8fd3fa" stroke-width="1"/><rect x="596.1" y="268.1" width="3" height="1.0" fill="#8fd3fa"/><line x1="600.9" y1="264.0" x2="600.9" y2="273.1" stroke="#f08374" stroke-width="1"/><rect x="599.8" y="266.0" width="2.2" height="3.1" fill="#1a2136" stroke="#f08374" stroke-width="0.9"/><line x1="604.3" y1="261.1" x2="604.3" y2="269.3" stroke="#f08374" stroke-width="1"/><rect x="603.2" y="263.9" width="2.2" height="2.1" fill="#1a2136" stroke="#f08374" stroke-width="0.9"/><line x1="607.7" y1="263.5" x2="607.7" y2="269.7" stroke="#8fd3fa" stroke-width="1"/><rect x="606.2" y="263.9" width="3" height="3.7" fill="#8fd3fa"/><line x1="611.0" y1="264.0" x2="611.0" y2="270.0" stroke="#f08374" stroke-width="1"/><rect x="609.9" y="265.4" width="2.2" height="2.2" fill="#1a2136" stroke="#f08374" stroke-width="0.9"/><line x1="614.4" y1="264.4" x2="614.4" y2="272.4" stroke="#8fd3fa" stroke-width="1"/><rect x="612.9" y="265.4" width="3" height="3.1" fill="#8fd3fa"/><line x1="617.8" y1="263.2" x2="617.8" y2="269.1" stroke="#f08374" stroke-width="1"/><rect x="616.7" y="264.6" width="2.2" height="3.9" fill="#1a2136" stroke="#f08374" stroke-width="0.9"/><line x1="621.2" y1="260.9" x2="621.2" y2="264.9" stroke="#f08374" stroke-width="1"/><rect x="620.1" y="261.3" width="2.2" height="3.3" fill="#1a2136" stroke="#f08374" stroke-width="0.9"/><line x1="624.5" y1="260.1" x2="624.5" y2="264.4" stroke="#8fd3fa" stroke-width="1"/><rect x="623.0" y="261.3" width="3" height="3.0" fill="#8fd3fa"/><line x1="627.9" y1="263.2" x2="627.9" y2="269.6" stroke="#8fd3fa" stroke-width="1"/><rect x="626.4" y="264.3" width="3" height="5.0" fill="#8fd3fa"/><line x1="631.3" y1="265.0" x2="631.3" y2="270.5" stroke="#f08374" stroke-width="1"/><rect x="630.2" y="266.2" width="2.2" height="3.1" fill="#1a2136" stroke="#f08374" stroke-width="0.9"/><line x1="634.6" y1="264.8" x2="634.6" y2="270.4" stroke="#8fd3fa" stroke-width="1"/><rect x="633.1" y="266.2" width="3" height="1.0" fill="#8fd3fa"/><line x1="638.0" y1="266.8" x2="638.0" y2="270.8" stroke="#8fd3fa" stroke-width="1"/><rect x="636.5" y="266.8" width="3" height="1.0" fill="#8fd3fa"/><line x1="641.4" y1="266.3" x2="641.4" y2="271.9" stroke="#8fd3fa" stroke-width="1"/><rect x="639.9" y="267.5" width="3" height="3.0" fill="#8fd3fa"/><line x1="644.8" y1="268.5" x2="644.8" y2="296.2" stroke="#8fd3fa" stroke-width="1"/><rect x="643.2" y="270.5" width="3" height="22.4" fill="#8fd3fa"/><line x1="648.1" y1="292.0" x2="648.1" y2="349.5" stroke="#8fd3fa" stroke-width="1"/><rect x="646.6" y="292.9" width="3" height="24.5" fill="#8fd3fa"/><line x1="651.5" y1="305.4" x2="651.5" y2="317.5" stroke="#f08374" stroke-width="1"/><rect x="650.4" y="311.3" width="2.2" height="6.1" fill="#1a2136" stroke="#f08374" stroke-width="0.9"/><line x1="654.9" y1="304.4" x2="654.9" y2="313.1" stroke="#f08374" stroke-width="1"/><rect x="653.8" y="306.2" width="2.2" height="5.1" fill="#1a2136" stroke="#f08374" stroke-width="0.9"/><line x1="658.2" y1="302.1" x2="658.2" y2="307.9" stroke="#f08374" stroke-width="1"/><rect x="657.1" y="302.1" width="2.2" height="4.1" fill="#1a2136" stroke="#f08374" stroke-width="0.9"/><line x1="661.6" y1="296.7" x2="661.6" y2="306.9" stroke="#f08374" stroke-width="1"/><rect x="660.5" y="298.8" width="2.2" height="3.3" fill="#1a2136" stroke="#f08374" stroke-width="0.9"/><line x1="665.0" y1="295.6" x2="665.0" y2="306.0" stroke="#f08374" stroke-width="1"/><rect x="663.9" y="296.3" width="2.2" height="2.5" fill="#1a2136" stroke="#f08374" stroke-width="0.9"/><line x1="668.3" y1="292.5" x2="668.3" y2="297.5" stroke="#f08374" stroke-width="1"/><rect x="667.2" y="293.7" width="2.2" height="2.5" fill="#1a2136" stroke="#f08374" stroke-width="0.9"/><line x1="671.7" y1="287.1" x2="671.7" y2="293.8" stroke="#f08374" stroke-width="1"/><rect x="670.6" y="291.2" width="2.2" height="2.5" fill="#1a2136" stroke="#f08374" stroke-width="0.9"/><line x1="675.1" y1="286.4" x2="675.1" y2="293.0" stroke="#f08374" stroke-width="1"/><rect x="674.0" y="288.7" width="2.2" height="2.5" fill="#1a2136" stroke="#f08374" stroke-width="0.9"/><line x1="678.5" y1="285.4" x2="678.5" y2="292.3" stroke="#f08374" stroke-width="1"/><rect x="677.4" y="286.2" width="2.2" height="2.5" fill="#1a2136" stroke="#f08374" stroke-width="0.9"/><line x1="681.8" y1="282.8" x2="681.8" y2="287.3" stroke="#f08374" stroke-width="1"/><rect x="680.7" y="283.6" width="2.2" height="2.5" fill="#1a2136" stroke="#f08374" stroke-width="0.9"/><line x1="685.2" y1="279.6" x2="685.2" y2="286.3" stroke="#f08374" stroke-width="1"/><rect x="684.1" y="281.0" width="2.2" height="2.7" fill="#1a2136" stroke="#f08374" stroke-width="0.9"/><line x1="688.6" y1="277.6" x2="688.6" y2="282.0" stroke="#f08374" stroke-width="1"/><rect x="687.5" y="278.0" width="2.2" height="2.9" fill="#1a2136" stroke="#f08374" stroke-width="0.9"/><line x1="691.9" y1="274.1" x2="691.9" y2="279.5" stroke="#f08374" stroke-width="1"/><rect x="690.8" y="275.1" width="2.2" height="2.9" fill="#1a2136" stroke="#f08374" stroke-width="0.9"/><line x1="695.3" y1="269.8" x2="695.3" y2="275.7" stroke="#f08374" stroke-width="1"/><rect x="694.2" y="272.9" width="2.2" height="2.1" fill="#1a2136" stroke="#f08374" stroke-width="0.9"/><line x1="698.7" y1="267.7" x2="698.7" y2="273.9" stroke="#f08374" stroke-width="1"/><rect x="697.6" y="270.8" width="2.2" height="2.1" fill="#1a2136" stroke="#f08374" stroke-width="0.9"/><line x1="702.0" y1="263.0" x2="702.0" y2="271.4" stroke="#f08374" stroke-width="1"/><rect x="700.9" y="268.2" width="2.2" height="2.6" fill="#1a2136" stroke="#f08374" stroke-width="0.9"/><line x1="705.4" y1="266.9" x2="705.4" y2="275.8" stroke="#8fd3fa" stroke-width="1"/><rect x="703.9" y="268.2" width="3" height="1.0" fill="#8fd3fa"/><line x1="708.8" y1="267.3" x2="708.8" y2="275.6" stroke="#8fd3fa" stroke-width="1"/><rect x="707.3" y="269.2" width="3" height="3.6" fill="#8fd3fa"/><line x1="712.1" y1="272.1" x2="712.1" y2="276.8" stroke="#8fd3fa" stroke-width="1"/><rect x="710.6" y="272.8" width="3" height="3.4" fill="#8fd3fa"/><line x1="715.5" y1="275.5" x2="715.5" y2="279.8" stroke="#8fd3fa" stroke-width="1"/><rect x="714.0" y="276.1" width="3" height="2.0" fill="#8fd3fa"/><line x1="718.9" y1="276.4" x2="718.9" y2="281.2" stroke="#8fd3fa" stroke-width="1"/><rect x="717.4" y="278.2" width="3" height="1.0" fill="#8fd3fa"/><line x1="722.3" y1="278.4" x2="722.3" y2="282.5" stroke="#8fd3fa" stroke-width="1"/><rect x="720.8" y="278.5" width="3" height="1.7" fill="#8fd3fa"/><line x1="725.6" y1="276.3" x2="725.6" y2="282.5" stroke="#8fd3fa" stroke-width="1"/><rect x="724.1" y="280.2" width="3" height="1.0" fill="#8fd3fa"/><line x1="729.0" y1="280.5" x2="729.0" y2="281.7" stroke="#f08374" stroke-width="1"/><rect x="727.9" y="280.5" width="2.2" height="1.0" fill="#1a2136" stroke="#f08374" stroke-width="0.9"/><line x1="732.4" y1="280.5" x2="732.4" y2="281.7" stroke="#8fd3fa" stroke-width="1"/><rect x="730.9" y="280.5" width="3" height="1.0" fill="#8fd3fa"/><line x1="735.7" y1="276.8" x2="735.7" y2="285.3" stroke="#8fd3fa" stroke-width="1"/><rect x="734.2" y="281.4" width="3" height="2.3" fill="#8fd3fa"/><line x1="739.1" y1="281.7" x2="739.1" y2="293.0" stroke="#8fd3fa" stroke-width="1"/><rect x="737.6" y="283.7" width="3" height="6.5" fill="#8fd3fa"/><line x1="742.5" y1="285.8" x2="742.5" y2="300.1" stroke="#8fd3fa" stroke-width="1"/><rect x="741.0" y="290.2" width="3" height="8.2" fill="#8fd3fa"/><line x1="745.9" y1="296.7" x2="745.9" y2="304.7" stroke="#8fd3fa" stroke-width="1"/><rect x="744.4" y="298.4" width="3" height="4.5" fill="#8fd3fa"/><line x1="749.2" y1="300.8" x2="749.2" y2="307.0" stroke="#8fd3fa" stroke-width="1"/><rect x="747.7" y="303.0" width="3" height="2.4" fill="#8fd3fa"/><line x1="752.6" y1="303.3" x2="752.6" y2="306.1" stroke="#8fd3fa" stroke-width="1"/><rect x="751.1" y="305.4" width="3" height="1.0" fill="#8fd3fa"/><line x1="756.0" y1="303.7" x2="756.0" y2="307.4" stroke="#8fd3fa" stroke-width="1"/><rect x="754.5" y="305.7" width="3" height="1.0" fill="#8fd3fa"/><line x1="759.3" y1="302.5" x2="759.3" y2="306.5" stroke="#f08374" stroke-width="1"/><rect x="758.2" y="305.1" width="2.2" height="1.2" fill="#1a2136" stroke="#f08374" stroke-width="0.9"/><line x1="762.7" y1="304.7" x2="762.7" y2="308.2" stroke="#8fd3fa" stroke-width="1"/><rect x="761.2" y="305.1" width="3" height="3.1" fill="#8fd3fa"/><line x1="766.1" y1="305.5" x2="766.1" y2="316.7" stroke="#8fd3fa" stroke-width="1"/><rect x="764.6" y="308.2" width="3" height="4.2" fill="#8fd3fa"/><line x1="769.4" y1="310.4" x2="769.4" y2="315.6" stroke="#8fd3fa" stroke-width="1"/><rect x="767.9" y="312.3" width="3" height="2.4" fill="#8fd3fa"/><line x1="772.8" y1="311.7" x2="772.8" y2="321.4" stroke="#8fd3fa" stroke-width="1"/><rect x="771.3" y="314.8" width="3" height="3.9" fill="#8fd3fa"/><line x1="776.2" y1="317.2" x2="776.2" y2="321.0" stroke="#8fd3fa" stroke-width="1"/><rect x="774.7" y="318.6" width="3" height="1.8" fill="#8fd3fa"/><line x1="779.5" y1="319.8" x2="779.5" y2="324.0" stroke="#8fd3fa" stroke-width="1"/><rect x="778.0" y="320.5" width="3" height="2.5" fill="#8fd3fa"/><line x1="782.9" y1="322.3" x2="782.9" y2="325.5" stroke="#8fd3fa" stroke-width="1"/><rect x="781.4" y="323.0" width="3" height="1.5" fill="#8fd3fa"/><line x1="786.3" y1="322.6" x2="786.3" y2="334.7" stroke="#8fd3fa" stroke-width="1"/><rect x="784.8" y="324.5" width="3" height="5.3" fill="#8fd3fa"/><line x1="789.7" y1="329.7" x2="789.7" y2="337.6" stroke="#8fd3fa" stroke-width="1"/><rect x="788.2" y="329.8" width="3" height="2.9" fill="#8fd3fa"/><line x1="793.0" y1="324.0" x2="793.0" y2="332.9" stroke="#f08374" stroke-width="1"/><rect x="791.9" y="324.1" width="2.2" height="8.5" fill="#1a2136" stroke="#f08374" stroke-width="0.9"/><line x1="796.4" y1="316.8" x2="796.4" y2="325.6" stroke="#f08374" stroke-width="1"/><rect x="795.3" y="319.8" width="2.2" height="4.3" fill="#1a2136" stroke="#f08374" stroke-width="0.9"/><line x1="799.8" y1="315.3" x2="799.8" y2="321.8" stroke="#8fd3fa" stroke-width="1"/><rect x="798.3" y="319.8" width="3" height="1.0" fill="#8fd3fa"/><line x1="803.1" y1="320.7" x2="803.1" y2="324.2" stroke="#8fd3fa" stroke-width="1"/><rect x="801.6" y="320.8" width="3" height="2.6" fill="#8fd3fa"/><line x1="806.5" y1="321.7" x2="806.5" y2="332.1" stroke="#8fd3fa" stroke-width="1"/><rect x="805.0" y="323.3" width="3" height="3.7" fill="#8fd3fa"/><line x1="809.9" y1="316.3" x2="809.9" y2="328.3" stroke="#f08374" stroke-width="1"/><rect x="808.8" y="323.5" width="2.2" height="3.6" fill="#1a2136" stroke="#f08374" stroke-width="0.9"/><line x1="813.2" y1="317.4" x2="813.2" y2="323.7" stroke="#f08374" stroke-width="1"/><rect x="812.1" y="318.3" width="2.2" height="5.1" fill="#1a2136" stroke="#f08374" stroke-width="0.9"/><line x1="816.6" y1="311.2" x2="816.6" y2="318.7" stroke="#f08374" stroke-width="1"/><rect x="815.5" y="313.1" width="2.2" height="5.3" fill="#1a2136" stroke="#f08374" stroke-width="0.9"/><line x1="820.0" y1="310.6" x2="820.0" y2="313.1" stroke="#f08374" stroke-width="1"/><rect x="818.9" y="310.9" width="2.2" height="2.1" fill="#1a2136" stroke="#f08374" stroke-width="0.9"/><line x1="823.4" y1="310.9" x2="823.4" y2="314.4" stroke="#8fd3fa" stroke-width="1"/><rect x="821.9" y="310.9" width="3" height="1.3" fill="#8fd3fa"/><line x1="826.7" y1="312.0" x2="826.7" y2="327.1" stroke="#8fd3fa" stroke-width="1"/><rect x="825.2" y="312.3" width="3" height="8.7" fill="#8fd3fa"/><line x1="830.1" y1="320.8" x2="830.1" y2="329.2" stroke="#8fd3fa" stroke-width="1"/><rect x="828.6" y="321.0" width="3" height="4.6" fill="#8fd3fa"/><line x1="833.5" y1="319.5" x2="833.5" y2="325.6" stroke="#f08374" stroke-width="1"/><rect x="832.4" y="319.8" width="2.2" height="5.8" fill="#1a2136" stroke="#f08374" stroke-width="0.9"/><line x1="836.8" y1="312.1" x2="836.8" y2="320.3" stroke="#f08374" stroke-width="1"/><rect x="835.7" y="314.4" width="2.2" height="5.4" fill="#1a2136" stroke="#f08374" stroke-width="0.9"/><line x1="840.2" y1="310.4" x2="840.2" y2="314.7" stroke="#f08374" stroke-width="1"/><rect x="839.1" y="312.8" width="2.2" height="1.6" fill="#1a2136" stroke="#f08374" stroke-width="0.9"/><line x1="843.6" y1="311.3" x2="843.6" y2="315.5" stroke="#f08374" stroke-width="1"/><rect x="842.5" y="311.4" width="2.2" height="1.4" fill="#1a2136" stroke="#f08374" stroke-width="0.9"/><line x1="846.9" y1="308.4" x2="846.9" y2="314.9" stroke="#f08374" stroke-width="1"/><rect x="845.8" y="310.7" width="2.2" height="1.0" fill="#1a2136" stroke="#f08374" stroke-width="0.9"/><line x1="850.3" y1="307.8" x2="850.3" y2="310.8" stroke="#f08374" stroke-width="1"/><rect x="849.2" y="310.2" width="2.2" height="1.0" fill="#1a2136" stroke="#f08374" stroke-width="0.9"/><line x1="853.7" y1="308.4" x2="853.7" y2="313.8" stroke="#8fd3fa" stroke-width="1"/><rect x="852.2" y="310.2" width="3" height="1.4" fill="#8fd3fa"/><line x1="857.1" y1="308.3" x2="857.1" y2="316.4" stroke="#f08374" stroke-width="1"/><rect x="856.0" y="309.4" width="2.2" height="2.2" fill="#1a2136" stroke="#f08374" stroke-width="0.9"/><line x1="860.4" y1="307.1" x2="860.4" y2="315.4" stroke="#f08374" stroke-width="1"/><rect x="859.3" y="307.6" width="2.2" height="1.8" fill="#1a2136" stroke="#f08374" stroke-width="0.9"/><line x1="863.8" y1="303.7" x2="863.8" y2="307.6" stroke="#f08374" stroke-width="1"/><rect x="862.7" y="306.0" width="2.2" height="1.6" fill="#1a2136" stroke="#f08374" stroke-width="0.9"/><line x1="867.2" y1="302.8" x2="867.2" y2="307.9" stroke="#f08374" stroke-width="1"/><rect x="866.1" y="302.8" width="2.2" height="3.1" fill="#1a2136" stroke="#f08374" stroke-width="0.9"/><line x1="870.5" y1="301.4" x2="870.5" y2="303.0" stroke="#f08374" stroke-width="1"/><rect x="869.4" y="302.2" width="2.2" height="1.0" fill="#1a2136" stroke="#f08374" stroke-width="0.9"/><line x1="873.9" y1="300.8" x2="873.9" y2="304.6" stroke="#f08374" stroke-width="1"/><rect x="872.8" y="300.8" width="2.2" height="1.5" fill="#1a2136" stroke="#f08374" stroke-width="0.9"/><line x1="877.3" y1="300.9" x2="877.3" y2="304.5" stroke="#8fd3fa" stroke-width="1"/><rect x="875.8" y="300.9" width="3" height="1.0" fill="#8fd3fa"/><line x1="880.6" y1="301.6" x2="880.6" y2="301.7" stroke="#8fd3fa" stroke-width="1"/><rect x="879.1" y="301.6" width="3" height="1.0" fill="#8fd3fa"/><line x1="884.0" y1="299.8" x2="884.0" y2="303.7" stroke="#8fd3fa" stroke-width="1"/><rect x="882.5" y="301.6" width="3" height="1.0" fill="#8fd3fa"/><line x1="887.4" y1="301.1" x2="887.4" y2="304.8" stroke="#8fd3fa" stroke-width="1"/><rect x="885.9" y="302.2" width="3" height="1.0" fill="#8fd3fa"/><line x1="890.8" y1="302.5" x2="890.8" y2="306.8" stroke="#8fd3fa" stroke-width="1"/><rect x="889.3" y="302.7" width="3" height="1.2" fill="#8fd3fa"/><line x1="894.1" y1="303.2" x2="894.1" y2="306.2" stroke="#8fd3fa" stroke-width="1"/><rect x="892.6" y="304.0" width="3" height="1.0" fill="#8fd3fa"/><line x1="897.5" y1="302.6" x2="897.5" y2="310.8" stroke="#8fd3fa" stroke-width="1"/><rect x="896.0" y="304.4" width="3" height="5.4" fill="#8fd3fa"/><line x1="900.9" y1="308.9" x2="900.9" y2="316.0" stroke="#8fd3fa" stroke-width="1"/><rect x="899.4" y="309.8" width="3" height="1.7" fill="#8fd3fa"/><line x1="904.2" y1="305.5" x2="904.2" y2="314.3" stroke="#f08374" stroke-width="1"/><rect x="903.1" y="310.7" width="2.2" height="1.0" fill="#1a2136" stroke="#f08374" stroke-width="0.9"/><line x1="907.6" y1="304.6" x2="907.6" y2="311.4" stroke="#f08374" stroke-width="1"/><rect x="906.5" y="306.1" width="2.2" height="4.6" fill="#1a2136" stroke="#f08374" stroke-width="0.9"/><line x1="911.0" y1="304.4" x2="911.0" y2="312.7" stroke="#f08374" stroke-width="1"/><rect x="909.9" y="304.5" width="2.2" height="1.6" fill="#1a2136" stroke="#f08374" stroke-width="0.9"/><line x1="914.4" y1="299.6" x2="914.4" y2="307.7" stroke="#f08374" stroke-width="1"/><rect x="913.2" y="301.8" width="2.2" height="2.7" fill="#1a2136" stroke="#f08374" stroke-width="0.9"/><line x1="917.7" y1="301.0" x2="917.7" y2="304.9" stroke="#8fd3fa" stroke-width="1"/><rect x="916.2" y="301.8" width="3" height="1.5" fill="#8fd3fa"/><line x1="921.1" y1="295.6" x2="921.1" y2="306.5" stroke="#f08374" stroke-width="1"/><rect x="920.0" y="302.4" width="2.2" height="1.0" fill="#1a2136" stroke="#f08374" stroke-width="0.9"/><line x1="924.5" y1="296.9" x2="924.5" y2="303.1" stroke="#f08374" stroke-width="1"/><rect x="923.4" y="298.5" width="2.2" height="3.9" fill="#1a2136" stroke="#f08374" stroke-width="0.9"/><line x1="927.8" y1="297.5" x2="927.8" y2="302.8" stroke="#8fd3fa" stroke-width="1"/><rect x="926.3" y="298.5" width="3" height="1.0" fill="#8fd3fa"/><line x1="931.2" y1="297.1" x2="931.2" y2="300.9" stroke="#f08374" stroke-width="1"/><rect x="930.1" y="298.0" width="2.2" height="1.0" fill="#1a2136" stroke="#f08374" stroke-width="0.9"/><line x1="934.6" y1="292.5" x2="934.6" y2="302.0" stroke="#f08374" stroke-width="1"/><rect x="933.5" y="294.1" width="2.2" height="3.8" fill="#1a2136" stroke="#f08374" stroke-width="0.9"/><line x1="937.9" y1="289.4" x2="937.9" y2="294.7" stroke="#f08374" stroke-width="1"/><rect x="936.8" y="292.4" width="2.2" height="1.7" fill="#1a2136" stroke="#f08374" stroke-width="0.9"/><line x1="941.3" y1="291.1" x2="941.3" y2="292.9" stroke="#f08374" stroke-width="1"/><rect x="940.2" y="291.1" width="2.2" height="1.2" fill="#1a2136" stroke="#f08374" stroke-width="0.9"/><line x1="944.7" y1="288.6" x2="944.7" y2="292.7" stroke="#f08374" stroke-width="1"/><rect x="943.6" y="289.6" width="2.2" height="1.5" fill="#1a2136" stroke="#f08374" stroke-width="0.9"/><line x1="948.0" y1="285.5" x2="948.0" y2="293.5" stroke="#f08374" stroke-width="1"/><rect x="946.9" y="286.4" width="2.2" height="3.2" fill="#1a2136" stroke="#f08374" stroke-width="0.9"/><line x1="951.4" y1="286.4" x2="951.4" y2="292.1" stroke="#8fd3fa" stroke-width="1"/><rect x="949.9" y="286.4" width="3" height="2.4" fill="#8fd3fa"/><line x1="954.8" y1="287.1" x2="954.8" y2="294.1" stroke="#8fd3fa" stroke-width="1"/><rect x="953.3" y="288.8" width="3" height="1.6" fill="#8fd3fa"/><line x1="958.2" y1="289.0" x2="958.2" y2="291.9" stroke="#8fd3fa" stroke-width="1"/><rect x="956.7" y="290.5" width="3" height="1.0" fill="#8fd3fa"/><line x1="961.5" y1="287.9" x2="961.5" y2="294.7" stroke="#8fd3fa" stroke-width="1"/><rect x="960.0" y="291.3" width="3" height="1.0" fill="#8fd3fa"/><line x1="964.9" y1="289.7" x2="964.9" y2="297.3" stroke="#8fd3fa" stroke-width="1"/><rect x="963.4" y="291.8" width="3" height="1.1" fill="#8fd3fa"/><line x1="968.3" y1="292.1" x2="968.3" y2="293.0" stroke="#8fd3fa" stroke-width="1"/><rect x="966.8" y="292.8" width="3" height="1.0" fill="#8fd3fa"/><line x1="971.6" y1="289.7" x2="971.6" y2="295.7" stroke="#f08374" stroke-width="1"/><rect x="970.5" y="291.1" width="2.2" height="1.7" fill="#1a2136" stroke="#f08374" stroke-width="0.9"/><line x1="975.0" y1="290.7" x2="975.0" y2="295.0" stroke="#8fd3fa" stroke-width="1"/><rect x="973.5" y="291.1" width="3" height="1.4" fill="#8fd3fa"/><line x1="978.4" y1="287.7" x2="978.4" y2="293.2" stroke="#8fd3fa" stroke-width="1"/><rect x="976.9" y="292.5" width="3" height="1.0" fill="#8fd3fa"/><line x1="981.8" y1="291.0" x2="981.8" y2="297.4" stroke="#8fd3fa" stroke-width="1"/><rect x="980.2" y="292.7" width="3" height="2.6" fill="#8fd3fa"/><line x1="985.1" y1="294.2" x2="985.1" y2="310.3" stroke="#8fd3fa" stroke-width="1"/><rect x="983.6" y="295.4" width="3" height="4.4" fill="#8fd3fa"/><line x1="988.5" y1="298.8" x2="988.5" y2="302.3" stroke="#f08374" stroke-width="1"/><rect x="987.4" y="299.3" width="2.2" height="1.0" fill="#1a2136" stroke="#f08374" stroke-width="0.9"/><line x1="991.9" y1="296.4" x2="991.9" y2="300.4" stroke="#f08374" stroke-width="1"/><rect x="990.8" y="299.3" width="2.2" height="1.0" fill="#1a2136" stroke="#f08374" stroke-width="0.9"/><line x1="995.2" y1="296.9" x2="995.2" y2="302.2" stroke="#f08374" stroke-width="1"/><rect x="994.1" y="297.0" width="2.2" height="2.2" fill="#1a2136" stroke="#f08374" stroke-width="0.9"/><line x1="998.6" y1="294.4" x2="998.6" y2="297.5" stroke="#f08374" stroke-width="1"/><rect x="997.5" y="297.0" width="2.2" height="1.0" fill="#1a2136" stroke="#f08374" stroke-width="0.9"/><line x1="1002.0" y1="295.5" x2="1002.0" y2="301.9" stroke="#8fd3fa" stroke-width="1"/><rect x="1000.5" y="297.0" width="3" height="1.0" fill="#8fd3fa"/><line x1="1005.3" y1="293.4" x2="1005.3" y2="299.1" stroke="#f08374" stroke-width="1"/><rect x="1004.2" y="297.3" width="2.2" height="1.0" fill="#1a2136" stroke="#f08374" stroke-width="0.9"/><line x1="1008.7" y1="295.7" x2="1008.7" y2="298.9" stroke="#f08374" stroke-width="1"/><rect x="1007.6" y="296.8" width="2.2" height="1.0" fill="#1a2136" stroke="#f08374" stroke-width="0.9"/><line x1="1012.1" y1="296.4" x2="1012.1" y2="297.2" stroke="#f08374" stroke-width="1"/><rect x="1011.0" y="296.7" width="2.2" height="1.0" fill="#1a2136" stroke="#f08374" stroke-width="0.9"/><line x1="1015.4" y1="295.4" x2="1015.4" y2="298.9" stroke="#f08374" stroke-width="1"/><rect x="1014.3" y="295.8" width="2.2" height="1.0" fill="#1a2136" stroke="#f08374" stroke-width="0.9"/><line x1="1018.8" y1="295.0" x2="1018.8" y2="298.2" stroke="#8fd3fa" stroke-width="1"/><rect x="1017.3" y="295.8" width="3" height="1.0" fill="#8fd3fa"/><line x1="1022.2" y1="295.0" x2="1022.2" y2="298.1" stroke="#f08374" stroke-width="1"/><rect x="1021.1" y="295.9" width="2.2" height="1.0" fill="#1a2136" stroke="#f08374" stroke-width="0.9"/><line x1="1025.6" y1="294.5" x2="1025.6" y2="296.0" stroke="#f08374" stroke-width="1"/><rect x="1024.5" y="294.8" width="2.2" height="1.1" fill="#1a2136" stroke="#f08374" stroke-width="0.9"/><line x1="1028.9" y1="284.6" x2="1028.9" y2="295.7" stroke="#f08374" stroke-width="1"/><rect x="1027.8" y="293.6" width="2.2" height="1.2" fill="#1a2136" stroke="#f08374" stroke-width="0.9"/><line x1="1032.3" y1="292.9" x2="1032.3" y2="295.4" stroke="#f08374" stroke-width="1"/><rect x="1031.2" y="293.1" width="2.2" height="1.0" fill="#1a2136" stroke="#f08374" stroke-width="0.9"/><line x1="1035.7" y1="286.9" x2="1035.7" y2="293.4" stroke="#f08374" stroke-width="1"/><rect x="1034.6" y="289.7" width="2.2" height="3.4" fill="#1a2136" stroke="#f08374" stroke-width="0.9"/><line x1="1039.0" y1="288.0" x2="1039.0" y2="290.9" stroke="#8fd3fa" stroke-width="1"/><rect x="1037.5" y="289.7" width="3" height="1.0" fill="#8fd3fa"/><line x1="1042.4" y1="288.8" x2="1042.4" y2="290.5" stroke="#8fd3fa" stroke-width="1"/><rect x="1040.9" y="290.1" width="3" height="1.0" fill="#8fd3fa"/><line x1="1045.8" y1="288.7" x2="1045.8" y2="298.9" stroke="#f08374" stroke-width="1"/><rect x="1044.7" y="288.8" width="2.2" height="1.7" fill="#1a2136" stroke="#f08374" stroke-width="0.9"/><line x1="1049.2" y1="285.2" x2="1049.2" y2="291.2" stroke="#8fd3fa" stroke-width="1"/><rect x="1047.7" y="288.8" width="3" height="1.2" fill="#8fd3fa"/><line x1="1052.5" y1="287.3" x2="1052.5" y2="290.5" stroke="#f08374" stroke-width="1"/><rect x="1051.4" y="288.9" width="2.2" height="1.1" fill="#1a2136" stroke="#f08374" stroke-width="0.9"/><line x1="1055.9" y1="283.4" x2="1055.9" y2="289.8" stroke="#f08374" stroke-width="1"/><rect x="1054.8" y="286.1" width="2.2" height="2.7" fill="#1a2136" stroke="#f08374" stroke-width="0.9"/><line x1="1059.3" y1="280.5" x2="1059.3" y2="288.7" stroke="#f08374" stroke-width="1"/><rect x="1058.2" y="285.8" width="2.2" height="1.0" fill="#1a2136" stroke="#f08374" stroke-width="0.9"/><line x1="1062.6" y1="281.4" x2="1062.6" y2="291.7" stroke="#f08374" stroke-width="1"/><rect x="1061.5" y="284.5" width="2.2" height="1.2" fill="#1a2136" stroke="#f08374" stroke-width="0.9"/><line x1="1066.0" y1="283.6" x2="1066.0" y2="284.6" stroke="#f08374" stroke-width="1"/><rect x="1064.9" y="284.1" width="2.2" height="1.0" fill="#1a2136" stroke="#f08374" stroke-width="0.9"/><line x1="1069.4" y1="283.3" x2="1069.4" y2="284.5" stroke="#f08374" stroke-width="1"/><rect x="1068.3" y="283.8" width="2.2" height="1.0" fill="#1a2136" stroke="#f08374" stroke-width="0.9"/><line x1="1072.7" y1="282.6" x2="1072.7" y2="283.8" stroke="#f08374" stroke-width="1"/><rect x="1071.6" y="282.7" width="2.2" height="1.0" fill="#1a2136" stroke="#f08374" stroke-width="0.9"/><line x1="1076.1" y1="280.4" x2="1076.1" y2="286.4" stroke="#f08374" stroke-width="1"/><rect x="1075.0" y="281.8" width="2.2" height="1.0" fill="#1a2136" stroke="#f08374" stroke-width="0.9"/><line x1="1079.5" y1="280.7" x2="1079.5" y2="287.8" stroke="#8fd3fa" stroke-width="1"/><rect x="1078.0" y="281.8" width="3" height="1.0" fill="#8fd3fa"/><line x1="1082.8" y1="278.1" x2="1082.8" y2="283.1" stroke="#8fd3fa" stroke-width="1"/><rect x="1081.3" y="282.5" width="3" height="1.0" fill="#8fd3fa"/><line x1="1086.2" y1="281.4" x2="1086.2" y2="285.3" stroke="#8fd3fa" stroke-width="1"/><rect x="1084.7" y="283.0" width="3" height="1.4" fill="#8fd3fa"/><line x1="1089.6" y1="284.2" x2="1089.6" y2="290.4" stroke="#8fd3fa" stroke-width="1"/><rect x="1088.1" y="284.4" width="3" height="1.0" fill="#8fd3fa"/><line x1="1093.0" y1="283.4" x2="1093.0" y2="286.2" stroke="#f08374" stroke-width="1"/><rect x="1091.9" y="283.9" width="2.2" height="1.0" fill="#1a2136" stroke="#f08374" stroke-width="0.9"/><line x1="1096.3" y1="281.5" x2="1096.3" y2="289.6" stroke="#f08374" stroke-width="1"/><rect x="1095.2" y="283.4" width="2.2" height="1.0" fill="#1a2136" stroke="#f08374" stroke-width="0.9"/><line x1="1099.7" y1="281.4" x2="1099.7" y2="285.2" stroke="#8fd3fa" stroke-width="1"/><rect x="1098.2" y="283.4" width="3" height="1.0" fill="#8fd3fa"/><line x1="1103.1" y1="282.3" x2="1103.1" y2="284.6" stroke="#f08374" stroke-width="1"/><rect x="1102.0" y="283.4" width="2.2" height="1.0" fill="#1a2136" stroke="#f08374" stroke-width="0.9"/><line x1="1106.4" y1="276.3" x2="1106.4" y2="292.0" stroke="#f08374" stroke-width="1"/><rect x="1105.3" y="282.4" width="2.2" height="1.1" fill="#1a2136" stroke="#f08374" stroke-width="0.9"/><line x1="1109.8" y1="281.9" x2="1109.8" y2="282.6" stroke="#8fd3fa" stroke-width="1"/><rect x="1108.3" y="282.4" width="3" height="1.0" fill="#8fd3fa"/><line x1="1113.2" y1="281.3" x2="1113.2" y2="283.3" stroke="#f08374" stroke-width="1"/><rect x="1112.1" y="281.8" width="2.2" height="1.0" fill="#1a2136" stroke="#f08374" stroke-width="0.9"/><line x1="1116.5" y1="277.6" x2="1116.5" y2="286.2" stroke="#8fd3fa" stroke-width="1"/><rect x="1115.0" y="281.8" width="3" height="1.0" fill="#8fd3fa"/><line x1="1119.9" y1="277.2" x2="1119.9" y2="282.0" stroke="#f08374" stroke-width="1"/><rect x="1118.8" y="280.5" width="2.2" height="1.4" fill="#1a2136" stroke="#f08374" stroke-width="0.9"/><line x1="1123.3" y1="272.2" x2="1123.3" y2="282.7" stroke="#f08374" stroke-width="1"/><rect x="1122.2" y="275.0" width="2.2" height="5.5" fill="#1a2136" stroke="#f08374" stroke-width="0.9"/><line x1="1126.7" y1="273.1" x2="1126.7" y2="284.8" stroke="#8fd3fa" stroke-width="1"/><rect x="1125.2" y="275.0" width="3" height="2.2" fill="#8fd3fa"/><line x1="1130.0" y1="274.6" x2="1130.0" y2="277.4" stroke="#f08374" stroke-width="1"/><rect x="1128.9" y="274.7" width="2.2" height="2.5" fill="#1a2136" stroke="#f08374" stroke-width="0.9"/><line x1="1133.4" y1="271.7" x2="1133.4" y2="279.7" stroke="#f08374" stroke-width="1"/><rect x="1132.3" y="274.3" width="2.2" height="1.0" fill="#1a2136" stroke="#f08374" stroke-width="0.9"/><line x1="1136.8" y1="269.7" x2="1136.8" y2="274.9" stroke="#f08374" stroke-width="1"/><rect x="1135.7" y="271.7" width="2.2" height="2.6" fill="#1a2136" stroke="#f08374" stroke-width="0.9"/><line x1="1140.1" y1="269.3" x2="1140.1" y2="274.3" stroke="#f08374" stroke-width="1"/><rect x="1139.0" y="270.9" width="2.2" height="1.0" fill="#1a2136" stroke="#f08374" stroke-width="0.9"/><line x1="1143.5" y1="265.4" x2="1143.5" y2="271.6" stroke="#f08374" stroke-width="1"/><rect x="1142.4" y="265.6" width="2.2" height="5.3" fill="#1a2136" stroke="#f08374" stroke-width="0.9"/><line x1="1146.9" y1="264.3" x2="1146.9" y2="265.9" stroke="#f08374" stroke-width="1"/><rect x="1145.8" y="264.8" width="2.2" height="1.0" fill="#1a2136" stroke="#f08374" stroke-width="0.9"/><line x1="1150.2" y1="262.1" x2="1150.2" y2="265.1" stroke="#f08374" stroke-width="1"/><rect x="1149.2" y="263.3" width="2.2" height="1.5" fill="#1a2136" stroke="#f08374" stroke-width="0.9"/><line x1="1153.6" y1="261.2" x2="1153.6" y2="263.6" stroke="#f08374" stroke-width="1"/><rect x="1152.5" y="261.7" width="2.2" height="1.6" fill="#1a2136" stroke="#f08374" stroke-width="0.9"/><line x1="1157.0" y1="259.7" x2="1157.0" y2="261.8" stroke="#8fd3fa" stroke-width="1"/><rect x="1155.5" y="261.7" width="3" height="1.0" fill="#8fd3fa"/><line x1="1160.4" y1="255.1" x2="1160.4" y2="262.2" stroke="#f08374" stroke-width="1"/><rect x="1159.3" y="258.7" width="2.2" height="3.1" fill="#1a2136" stroke="#f08374" stroke-width="0.9"/><line x1="1163.7" y1="258.6" x2="1163.7" y2="264.1" stroke="#8fd3fa" stroke-width="1"/><rect x="1162.2" y="258.7" width="3" height="1.0" fill="#8fd3fa"/><line x1="1167.1" y1="258.9" x2="1167.1" y2="264.6" stroke="#8fd3fa" stroke-width="1"/><rect x="1165.6" y="259.4" width="3" height="1.0" fill="#8fd3fa"/><line x1="1170.5" y1="256.1" x2="1170.5" y2="264.9" stroke="#8fd3fa" stroke-width="1"/><rect x="1169.0" y="259.7" width="3" height="1.3" fill="#8fd3fa"/><line x1="1173.8" y1="260.7" x2="1173.8" y2="262.9" stroke="#8fd3fa" stroke-width="1"/><rect x="1172.3" y="260.9" width="3" height="1.0" fill="#8fd3fa"/><line x1="1177.2" y1="261.7" x2="1177.2" y2="267.5" stroke="#8fd3fa" stroke-width="1"/><rect x="1175.7" y="261.8" width="3" height="1.0" fill="#8fd3fa"/><line x1="1180.6" y1="259.4" x2="1180.6" y2="267.1" stroke="#8fd3fa" stroke-width="1"/><rect x="1179.1" y="262.7" width="3" height="2.6" fill="#8fd3fa"/><line x1="1183.9" y1="264.2" x2="1183.9" y2="267.7" stroke="#8fd3fa" stroke-width="1"/><rect x="1182.4" y="265.3" width="3" height="1.6" fill="#8fd3fa"/><line x1="1187.3" y1="263.8" x2="1187.3" y2="274.7" stroke="#8fd3fa" stroke-width="1"/><rect x="1185.8" y="266.9" width="3" height="6.6" fill="#8fd3fa"/><line x1="1190.7" y1="270.6" x2="1190.7" y2="273.8" stroke="#f08374" stroke-width="1"/><rect x="1189.6" y="272.4" width="2.2" height="1.1" fill="#1a2136" stroke="#f08374" stroke-width="0.9"/><line x1="1194.1" y1="271.1" x2="1194.1" y2="272.5" stroke="#f08374" stroke-width="1"/><rect x="1193.0" y="271.6" width="2.2" height="1.0" fill="#1a2136" stroke="#f08374" stroke-width="0.9"/><line x1="1197.4" y1="268.0" x2="1197.4" y2="273.0" stroke="#f08374" stroke-width="1"/><rect x="1196.3" y="270.3" width="2.2" height="1.3" fill="#1a2136" stroke="#f08374" stroke-width="0.9"/><line x1="1200.8" y1="264.0" x2="1200.8" y2="274.0" stroke="#f08374" stroke-width="1"/><rect x="1199.7" y="264.2" width="2.2" height="6.0" fill="#1a2136" stroke="#f08374" stroke-width="0.9"/><line x1="1204.2" y1="261.0" x2="1204.2" y2="265.2" stroke="#f08374" stroke-width="1"/><rect x="1203.1" y="261.6" width="2.2" height="2.7" fill="#1a2136" stroke="#f08374" stroke-width="0.9"/><line x1="1207.5" y1="261.3" x2="1207.5" y2="262.5" stroke="#8fd3fa" stroke-width="1"/><rect x="1206.0" y="261.6" width="3" height="1.0" fill="#8fd3fa"/><line x1="1210.9" y1="257.3" x2="1210.9" y2="262.6" stroke="#f08374" stroke-width="1"/><rect x="1209.8" y="260.6" width="2.2" height="1.3" fill="#1a2136" stroke="#f08374" stroke-width="0.9"/><line x1="1214.3" y1="257.0" x2="1214.3" y2="261.8" stroke="#f08374" stroke-width="1"/><rect x="1213.2" y="257.3" width="2.2" height="3.3" fill="#1a2136" stroke="#f08374" stroke-width="0.9"/><line x1="1217.7" y1="255.0" x2="1217.7" y2="261.5" stroke="#f08374" stroke-width="1"/><rect x="1216.6" y="255.7" width="2.2" height="1.6" fill="#1a2136" stroke="#f08374" stroke-width="0.9"/><line x1="1221.0" y1="250.7" x2="1221.0" y2="262.6" stroke="#f08374" stroke-width="1"/><rect x="1219.9" y="250.9" width="2.2" height="4.8" fill="#1a2136" stroke="#f08374" stroke-width="0.9"/><line x1="1224.4" y1="250.8" x2="1224.4" y2="280.1" stroke="#8fd3fa" stroke-width="1"/><rect x="1222.9" y="250.9" width="3" height="25.1" fill="#8fd3fa"/><line x1="1227.8" y1="274.1" x2="1227.8" y2="322.8" stroke="#8fd3fa" stroke-width="1"/><rect x="1226.3" y="276.0" width="3" height="13.3" fill="#8fd3fa"/><line x1="1231.1" y1="264.9" x2="1231.1" y2="289.9" stroke="#f08374" stroke-width="1"/><rect x="1230.0" y="266.0" width="2.2" height="23.3" fill="#1a2136" stroke="#f08374" stroke-width="0.9"/><line x1="1234.5" y1="226.6" x2="1234.5" y2="266.5" stroke="#f08374" stroke-width="1"/><rect x="1233.4" y="227.1" width="2.2" height="39.0" fill="#1a2136" stroke="#f08374" stroke-width="0.9"/><line x1="1237.9" y1="201.5" x2="1237.9" y2="235.6" stroke="#f08374" stroke-width="1"/><rect x="1236.8" y="202.3" width="2.2" height="24.8" fill="#1a2136" stroke="#f08374" stroke-width="0.9"/><line x1="1241.2" y1="180.3" x2="1241.2" y2="207.0" stroke="#f08374" stroke-width="1"/><rect x="1240.1" y="189.3" width="2.2" height="13.0" fill="#1a2136" stroke="#f08374" stroke-width="0.9"/><line x1="1244.6" y1="181.7" x2="1244.6" y2="189.9" stroke="#f08374" stroke-width="1"/><rect x="1243.5" y="181.9" width="2.2" height="7.4" fill="#1a2136" stroke="#f08374" stroke-width="0.9"/><line x1="1248.0" y1="172.2" x2="1248.0" y2="182.1" stroke="#f08374" stroke-width="1"/><rect x="1246.9" y="179.0" width="2.2" height="2.9" fill="#1a2136" stroke="#f08374" stroke-width="0.9"/><line x1="1251.3" y1="175.1" x2="1251.3" y2="186.0" stroke="#8fd3fa" stroke-width="1"/><rect x="1249.8" y="179.0" width="3" height="5.9" fill="#8fd3fa"/><line x1="1254.7" y1="176.0" x2="1254.7" y2="197.2" stroke="#8fd3fa" stroke-width="1"/><rect x="1253.2" y="185.0" width="3" height="12.2" fill="#8fd3fa"/><line x1="1258.1" y1="190.7" x2="1258.1" y2="198.4" stroke="#f08374" stroke-width="1"/><rect x="1257.0" y="195.7" width="2.2" height="1.5" fill="#1a2136" stroke="#f08374" stroke-width="0.9"/><line x1="1261.5" y1="190.3" x2="1261.5" y2="195.7" stroke="#f08374" stroke-width="1"/><rect x="1260.4" y="190.8" width="2.2" height="4.9" fill="#1a2136" stroke="#f08374" stroke-width="0.9"/><line x1="1264.8" y1="182.8" x2="1264.8" y2="193.0" stroke="#f08374" stroke-width="1"/><rect x="1263.7" y="188.1" width="2.2" height="2.6" fill="#1a2136" stroke="#f08374" stroke-width="0.9"/><line x1="1268.2" y1="186.8" x2="1268.2" y2="189.9" stroke="#f08374" stroke-width="1"/><rect x="1267.1" y="187.4" width="2.2" height="1.0" fill="#1a2136" stroke="#f08374" stroke-width="0.9"/><line x1="1271.6" y1="179.1" x2="1271.6" y2="188.1" stroke="#f08374" stroke-width="1"/><rect x="1270.5" y="186.3" width="2.2" height="1.0" fill="#1a2136" stroke="#f08374" stroke-width="0.9"/><line x1="1274.9" y1="183.8" x2="1274.9" y2="189.8" stroke="#8fd3fa" stroke-width="1"/><rect x="1273.4" y="186.3" width="3" height="3.0" fill="#8fd3fa"/><line x1="1278.3" y1="188.8" x2="1278.3" y2="195.1" stroke="#8fd3fa" stroke-width="1"/><rect x="1276.8" y="189.4" width="3" height="1.3" fill="#8fd3fa"/><line x1="1281.7" y1="185.5" x2="1281.7" y2="191.3" stroke="#f08374" stroke-width="1"/><rect x="1280.6" y="189.3" width="2.2" height="1.4" fill="#1a2136" stroke="#f08374" stroke-width="0.9"/><line x1="1285.0" y1="187.7" x2="1285.0" y2="189.5" stroke="#f08374" stroke-width="1"/><rect x="1284.0" y="188.0" width="2.2" height="1.3" fill="#1a2136" stroke="#f08374" stroke-width="0.9"/><line x1="1288.4" y1="184.4" x2="1288.4" y2="190.0" stroke="#f08374" stroke-width="1"/><rect x="1287.3" y="187.2" width="2.2" height="1.0" fill="#1a2136" stroke="#f08374" stroke-width="0.9"/><line x1="1291.8" y1="182.7" x2="1291.8" y2="187.9" stroke="#f08374" stroke-width="1"/><rect x="1290.7" y="183.6" width="2.2" height="3.6" fill="#1a2136" stroke="#f08374" stroke-width="0.9"/><line x1="1295.2" y1="176.0" x2="1295.2" y2="187.3" stroke="#f08374" stroke-width="1"/><rect x="1294.1" y="178.8" width="2.2" height="4.8" fill="#1a2136" stroke="#f08374" stroke-width="0.9"/><line x1="1298.5" y1="173.8" x2="1298.5" y2="185.1" stroke="#8fd3fa" stroke-width="1"/><rect x="1297.0" y="178.8" width="3" height="3.7" fill="#8fd3fa"/><line x1="1301.9" y1="176.5" x2="1301.9" y2="182.7" stroke="#f08374" stroke-width="1"/><rect x="1300.8" y="177.2" width="2.2" height="5.2" fill="#1a2136" stroke="#f08374" stroke-width="0.9"/><line x1="1305.3" y1="173.3" x2="1305.3" y2="179.4" stroke="#8fd3fa" stroke-width="1"/><rect x="1303.8" y="177.2" width="3" height="1.0" fill="#8fd3fa"/><line x1="1308.6" y1="170.8" x2="1308.6" y2="178.0" stroke="#f08374" stroke-width="1"/><rect x="1307.5" y="174.6" width="2.2" height="3.2" fill="#1a2136" stroke="#f08374" stroke-width="0.9"/><line x1="1312.0" y1="169.7" x2="1312.0" y2="177.3" stroke="#8fd3fa" stroke-width="1"/><rect x="1310.5" y="174.6" width="3" height="1.4" fill="#8fd3fa"/><line x1="1315.4" y1="167.6" x2="1315.4" y2="182.1" stroke="#f08374" stroke-width="1"/><rect x="1314.3" y="173.1" width="2.2" height="2.9" fill="#1a2136" stroke="#f08374" stroke-width="0.9"/><line x1="1318.8" y1="171.1" x2="1318.8" y2="178.4" stroke="#8fd3fa" stroke-width="1"/><rect x="1317.2" y="173.1" width="3" height="5.3" fill="#8fd3fa"/><line x1="1322.1" y1="170.0" x2="1322.1" y2="180.3" stroke="#f08374" stroke-width="1"/><rect x="1321.0" y="177.3" width="2.2" height="1.1" fill="#1a2136" stroke="#f08374" stroke-width="0.9"/><line x1="1325.5" y1="166.1" x2="1325.5" y2="178.2" stroke="#f08374" stroke-width="1"/><rect x="1324.4" y="172.3" width="2.2" height="5.0" fill="#1a2136" stroke="#f08374" stroke-width="0.9"/><line x1="1328.9" y1="170.7" x2="1328.9" y2="177.6" stroke="#f08374" stroke-width="1"/><rect x="1327.8" y="171.4" width="2.2" height="1.0" fill="#1a2136" stroke="#f08374" stroke-width="0.9"/><line x1="1332.2" y1="165.9" x2="1332.2" y2="171.9" stroke="#f08374" stroke-width="1"/><rect x="1331.1" y="167.3" width="2.2" height="4.1" fill="#1a2136" stroke="#f08374" stroke-width="0.9"/><line x1="1335.6" y1="164.1" x2="1335.6" y2="170.0" stroke="#f08374" stroke-width="1"/><rect x="1334.5" y="165.5" width="2.2" height="1.8" fill="#1a2136" stroke="#f08374" stroke-width="0.9"/><line x1="1339.0" y1="152.5" x2="1339.0" y2="167.7" stroke="#f08374" stroke-width="1"/><rect x="1337.9" y="152.6" width="2.2" height="13.0" fill="#1a2136" stroke="#f08374" stroke-width="0.9"/><line x1="1342.3" y1="146.8" x2="1342.3" y2="154.7" stroke="#f08374" stroke-width="1"/><rect x="1341.2" y="148.5" width="2.2" height="4.0" fill="#1a2136" stroke="#f08374" stroke-width="0.9"/><line x1="1345.7" y1="143.4" x2="1345.7" y2="152.3" stroke="#f08374" stroke-width="1"/><rect x="1344.6" y="143.8" width="2.2" height="4.7" fill="#1a2136" stroke="#f08374" stroke-width="0.9"/><line x1="1349.1" y1="136.5" x2="1349.1" y2="149.8" stroke="#f08374" stroke-width="1"/><rect x="1348.0" y="140.3" width="2.2" height="3.5" fill="#1a2136" stroke="#f08374" stroke-width="0.9"/><line x1="1352.5" y1="139.1" x2="1352.5" y2="144.0" stroke="#f08374" stroke-width="1"/><rect x="1351.4" y="140.2" width="2.2" height="1.0" fill="#1a2136" stroke="#f08374" stroke-width="0.9"/><line x1="1355.8" y1="138.8" x2="1355.8" y2="152.4" stroke="#8fd3fa" stroke-width="1"/><rect x="1354.3" y="140.2" width="3" height="8.0" fill="#8fd3fa"/><line x1="1359.2" y1="145.7" x2="1359.2" y2="154.4" stroke="#f08374" stroke-width="1"/><rect x="1358.1" y="145.8" width="2.2" height="2.4" fill="#1a2136" stroke="#f08374" stroke-width="0.9"/><line x1="1362.6" y1="137.8" x2="1362.6" y2="151.5" stroke="#8fd3fa" stroke-width="1"/><rect x="1361.1" y="145.8" width="3" height="3.6" fill="#8fd3fa"/><line x1="1365.9" y1="147.3" x2="1365.9" y2="223.1" stroke="#8fd3fa" stroke-width="1"/><rect x="1364.4" y="149.4" width="3" height="38.1" fill="#8fd3fa"/><line x1="1369.3" y1="182.7" x2="1369.3" y2="187.6" stroke="#f08374" stroke-width="1"/><rect x="1368.2" y="185.0" width="2.2" height="2.6" fill="#1a2136" stroke="#f08374" stroke-width="0.9"/><line x1="1372.7" y1="157.7" x2="1372.7" y2="185.8" stroke="#f08374" stroke-width="1"/><rect x="1371.6" y="166.7" width="2.2" height="18.3" fill="#1a2136" stroke="#f08374" stroke-width="0.9"/><line x1="1376.0" y1="153.7" x2="1376.0" y2="167.0" stroke="#f08374" stroke-width="1"/><rect x="1374.9" y="154.3" width="2.2" height="12.3" fill="#1a2136" stroke="#f08374" stroke-width="0.9"/><line x1="1379.4" y1="153.4" x2="1379.4" y2="176.0" stroke="#8fd3fa" stroke-width="1"/><rect x="1377.9" y="154.3" width="3" height="16.6" fill="#8fd3fa"/><line x1="1382.8" y1="168.1" x2="1382.8" y2="171.3" stroke="#f08374" stroke-width="1"/><rect x="1381.7" y="168.2" width="2.2" height="2.7" fill="#1a2136" stroke="#f08374" stroke-width="0.9"/><line x1="1386.2" y1="164.6" x2="1386.2" y2="173.4" stroke="#8fd3fa" stroke-width="1"/><rect x="1384.7" y="168.2" width="3" height="4.5" fill="#8fd3fa"/><line x1="1389.5" y1="169.1" x2="1389.5" y2="175.4" stroke="#f08374" stroke-width="1"/><rect x="1388.4" y="169.2" width="2.2" height="3.5" fill="#1a2136" stroke="#f08374" stroke-width="0.9"/><line x1="1392.9" y1="166.6" x2="1392.9" y2="172.7" stroke="#8fd3fa" stroke-width="1"/><rect x="1391.4" y="169.2" width="3" height="1.3" fill="#8fd3fa"/><line x1="1396.3" y1="166.4" x2="1396.3" y2="170.8" stroke="#f08374" stroke-width="1"/><rect x="1395.2" y="170.1" width="2.2" height="1.0" fill="#1a2136" stroke="#f08374" stroke-width="0.9"/><line x1="1399.6" y1="163.6" x2="1399.6" y2="173.8" stroke="#f08374" stroke-width="1"/><rect x="1398.5" y="169.7" width="2.2" height="1.0" fill="#1a2136" stroke="#f08374" stroke-width="0.9"/><line x1="1403.0" y1="164.3" x2="1403.0" y2="170.1" stroke="#f08374" stroke-width="1"/><rect x="1401.9" y="164.5" width="2.2" height="5.3" fill="#1a2136" stroke="#f08374" stroke-width="0.9"/><line x1="1406.4" y1="142.9" x2="1406.4" y2="176.9" stroke="#8fd3fa" stroke-width="1"/><rect x="1404.9" y="164.5" width="3" height="10.4" fill="#8fd3fa"/><line x1="1409.7" y1="172.5" x2="1409.7" y2="175.2" stroke="#f08374" stroke-width="1"/><rect x="1408.6" y="173.5" width="2.2" height="1.3" fill="#1a2136" stroke="#f08374" stroke-width="0.9"/><line x1="1413.1" y1="171.9" x2="1413.1" y2="176.6" stroke="#8fd3fa" stroke-width="1"/><rect x="1411.6" y="173.5" width="3" height="2.7" fill="#8fd3fa"/><line x1="1416.5" y1="173.5" x2="1416.5" y2="200.0" stroke="#8fd3fa" stroke-width="1"/><rect x="1415.0" y="176.2" width="3" height="18.0" fill="#8fd3fa"/><line x1="1419.8" y1="193.6" x2="1419.8" y2="213.1" stroke="#8fd3fa" stroke-width="1"/><rect x="1418.3" y="194.1" width="3" height="16.4" fill="#8fd3fa"/><line x1="1423.2" y1="206.4" x2="1423.2" y2="214.6" stroke="#8fd3fa" stroke-width="1"/><rect x="1421.7" y="210.5" width="3" height="3.5" fill="#8fd3fa"/><line x1="1426.6" y1="208.8" x2="1426.6" y2="256.2" stroke="#8fd3fa" stroke-width="1"/><rect x="1425.1" y="214.0" width="3" height="33.8" fill="#8fd3fa"/><line x1="1430.0" y1="246.4" x2="1430.0" y2="256.0" stroke="#8fd3fa" stroke-width="1"/><rect x="1428.5" y="247.8" width="3" height="6.5" fill="#8fd3fa"/><line x1="1433.3" y1="223.0" x2="1433.3" y2="256.6" stroke="#f08374" stroke-width="1"/><rect x="1432.2" y="228.5" width="2.2" height="25.9" fill="#1a2136" stroke="#f08374" stroke-width="0.9"/><line x1="1436.7" y1="221.3" x2="1436.7" y2="237.0" stroke="#f08374" stroke-width="1"/><rect x="1435.6" y="222.8" width="2.2" height="5.7" fill="#1a2136" stroke="#f08374" stroke-width="0.9"/><line x1="1440.1" y1="214.5" x2="1440.1" y2="224.1" stroke="#f08374" stroke-width="1"/><rect x="1439.0" y="219.0" width="2.2" height="3.9" fill="#1a2136" stroke="#f08374" stroke-width="0.9"/><line x1="1443.4" y1="211.7" x2="1443.4" y2="220.2" stroke="#f08374" stroke-width="1"/><rect x="1442.3" y="212.6" width="2.2" height="6.4" fill="#1a2136" stroke="#f08374" stroke-width="0.9"/><line x1="1446.8" y1="210.8" x2="1446.8" y2="228.8" stroke="#8fd3fa" stroke-width="1"/><rect x="1445.3" y="212.6" width="3" height="7.2" fill="#8fd3fa"/><line x1="1450.2" y1="214.9" x2="1450.2" y2="236.3" stroke="#8fd3fa" stroke-width="1"/><rect x="1448.7" y="219.8" width="3" height="9.2" fill="#8fd3fa"/><line x1="1453.5" y1="223.9" x2="1453.5" y2="240.2" stroke="#8fd3fa" stroke-width="1"/><rect x="1452.0" y="228.9" width="3" height="5.6" fill="#8fd3fa"/><line x1="1456.9" y1="231.2" x2="1456.9" y2="236.7" stroke="#f08374" stroke-width="1"/><rect x="1455.8" y="231.4" width="2.2" height="3.1" fill="#1a2136" stroke="#f08374" stroke-width="0.9"/><line x1="1460.3" y1="218.0" x2="1460.3" y2="239.6" stroke="#f08374" stroke-width="1"/><rect x="1459.2" y="227.0" width="2.2" height="4.4" fill="#1a2136" stroke="#f08374" stroke-width="0.9"/><line x1="1463.7" y1="226.2" x2="1463.7" y2="236.2" stroke="#8fd3fa" stroke-width="1"/><rect x="1462.2" y="227.0" width="3" height="7.5" fill="#8fd3fa"/><line x1="1467.0" y1="231.5" x2="1467.0" y2="241.5" stroke="#8fd3fa" stroke-width="1"/><rect x="1465.5" y="234.5" width="3" height="5.6" fill="#8fd3fa"/><line x1="1470.4" y1="237.9" x2="1470.4" y2="243.2" stroke="#8fd3fa" stroke-width="1"/><rect x="1468.9" y="240.2" width="3" height="2.8" fill="#8fd3fa"/><line x1="1473.8" y1="238.3" x2="1473.8" y2="245.1" stroke="#f08374" stroke-width="1"/><rect x="1472.7" y="240.0" width="2.2" height="3.0" fill="#1a2136" stroke="#f08374" stroke-width="0.9"/><line x1="1477.1" y1="238.6" x2="1477.1" y2="240.4" stroke="#f08374" stroke-width="1"/><rect x="1476.0" y="238.7" width="2.2" height="1.3" fill="#1a2136" stroke="#f08374" stroke-width="0.9"/><line x1="1480.5" y1="229.7" x2="1480.5" y2="244.2" stroke="#8fd3fa" stroke-width="1"/><rect x="1479.0" y="238.7" width="3" height="1.0" fill="#8fd3fa"/><line x1="1483.9" y1="231.4" x2="1483.9" y2="249.1" stroke="#8fd3fa" stroke-width="1"/><rect x="1482.4" y="239.7" width="3" height="6.4" fill="#8fd3fa"/><line x1="1487.2" y1="241.1" x2="1487.2" y2="293.9" stroke="#8fd3fa" stroke-width="1"/><rect x="1485.8" y="246.1" width="3" height="41.4" fill="#8fd3fa"/><line x1="1490.6" y1="281.0" x2="1490.6" y2="294.4" stroke="#8fd3fa" stroke-width="1"/><rect x="1489.1" y="287.5" width="3" height="6.8" fill="#8fd3fa"/><line x1="1494.0" y1="286.1" x2="1494.0" y2="295.2" stroke="#f08374" stroke-width="1"/><rect x="1492.9" y="289.2" width="2.2" height="5.1" fill="#1a2136" stroke="#f08374" stroke-width="0.9"/><line x1="1497.4" y1="282.9" x2="1497.4" y2="290.2" stroke="#f08374" stroke-width="1"/><rect x="1496.3" y="286.3" width="2.2" height="2.9" fill="#1a2136" stroke="#f08374" stroke-width="0.9"/><line x1="1500.7" y1="280.9" x2="1500.7" y2="294.0" stroke="#f08374" stroke-width="1"/><rect x="1499.6" y="283.3" width="2.2" height="3.0" fill="#1a2136" stroke="#f08374" stroke-width="0.9"/><line x1="1504.1" y1="280.4" x2="1504.1" y2="287.7" stroke="#8fd3fa" stroke-width="1"/><rect x="1502.6" y="283.3" width="3" height="3.6" fill="#8fd3fa"/><line x1="1507.5" y1="284.6" x2="1507.5" y2="289.7" stroke="#8fd3fa" stroke-width="1"/><rect x="1506.0" y="286.8" width="3" height="1.1" fill="#8fd3fa"/><line x1="1510.8" y1="279.0" x2="1510.8" y2="292.2" stroke="#8fd3fa" stroke-width="1"/><rect x="1509.3" y="288.0" width="3" height="3.2" fill="#8fd3fa"/><line x1="1514.2" y1="290.1" x2="1514.2" y2="315.2" stroke="#8fd3fa" stroke-width="1"/><rect x="1512.7" y="291.2" width="3" height="6.0" fill="#8fd3fa"/><line x1="1517.6" y1="296.8" x2="1517.6" y2="301.3" stroke="#8fd3fa" stroke-width="1"/><rect x="1516.1" y="297.2" width="3" height="1.5" fill="#8fd3fa"/><line x1="1521.0" y1="288.8" x2="1521.0" y2="300.8" stroke="#f08374" stroke-width="1"/><rect x="1519.9" y="297.8" width="2.2" height="1.0" fill="#1a2136" stroke="#f08374" stroke-width="0.9"/><line x1="1524.3" y1="288.0" x2="1524.3" y2="299.7" stroke="#f08374" stroke-width="1"/><rect x="1523.2" y="289.0" width="2.2" height="8.8" fill="#1a2136" stroke="#f08374" stroke-width="0.9"/><line x1="1527.7" y1="286.7" x2="1527.7" y2="290.7" stroke="#8fd3fa" stroke-width="1"/><rect x="1526.2" y="289.0" width="3" height="1.3" fill="#8fd3fa"/><line x1="1531.1" y1="289.8" x2="1531.1" y2="301.5" stroke="#8fd3fa" stroke-width="1"/><rect x="1529.6" y="290.2" width="3" height="10.9" fill="#8fd3fa"/><line x1="1534.4" y1="298.0" x2="1534.4" y2="302.7" stroke="#f08374" stroke-width="1"/><rect x="1533.3" y="299.0" width="2.2" height="2.1" fill="#1a2136" stroke="#f08374" stroke-width="0.9"/><line x1="1537.8" y1="298.0" x2="1537.8" y2="302.5" stroke="#8fd3fa" stroke-width="1"/><rect x="1536.3" y="299.0" width="3" height="2.7" fill="#8fd3fa"/><line x1="1541.2" y1="300.6" x2="1541.2" y2="304.1" stroke="#f08374" stroke-width="1"/><rect x="1540.1" y="300.9" width="2.2" height="1.0" fill="#1a2136" stroke="#f08374" stroke-width="0.9"/><line x1="1544.5" y1="295.0" x2="1544.5" y2="303.7" stroke="#f08374" stroke-width="1"/><rect x="1543.4" y="300.5" width="2.2" height="1.0" fill="#1a2136" stroke="#f08374" stroke-width="0.9"/><line x1="1547.9" y1="289.3" x2="1547.9" y2="303.7" stroke="#f08374" stroke-width="1"/><rect x="1546.8" y="291.8" width="2.2" height="8.7" fill="#1a2136" stroke="#f08374" stroke-width="0.9"/><line x1="1551.3" y1="284.3" x2="1551.3" y2="295.6" stroke="#f08374" stroke-width="1"/><rect x="1550.2" y="285.0" width="2.2" height="6.8" fill="#1a2136" stroke="#f08374" stroke-width="0.9"/><line x1="1554.7" y1="274.7" x2="1554.7" y2="287.4" stroke="#f08374" stroke-width="1"/><rect x="1553.6" y="276.5" width="2.2" height="8.5" fill="#1a2136" stroke="#f08374" stroke-width="0.9"/><line x1="1558.0" y1="269.6" x2="1558.0" y2="278.4" stroke="#f08374" stroke-width="1"/><rect x="1556.9" y="272.4" width="2.2" height="4.1" fill="#1a2136" stroke="#f08374" stroke-width="0.9"/><line x1="1561.4" y1="268.4" x2="1561.4" y2="273.2" stroke="#f08374" stroke-width="1"/><rect x="1560.3" y="269.5" width="2.2" height="2.9" fill="#1a2136" stroke="#f08374" stroke-width="0.9"/><line x1="1564.8" y1="265.3" x2="1564.8" y2="271.7" stroke="#f08374" stroke-width="1"/><rect x="1563.7" y="266.0" width="2.2" height="3.5" fill="#1a2136" stroke="#f08374" stroke-width="0.9"/><line x1="1568.1" y1="257.4" x2="1568.1" y2="272.1" stroke="#8fd3fa" stroke-width="1"/><rect x="1566.6" y="266.0" width="3" height="3.5" fill="#8fd3fa"/><line x1="1571.5" y1="269.5" x2="1571.5" y2="274.6" stroke="#8fd3fa" stroke-width="1"/><rect x="1570.0" y="269.5" width="3" height="3.8" fill="#8fd3fa"/><line x1="1574.9" y1="267.3" x2="1574.9" y2="276.1" stroke="#8fd3fa" stroke-width="1"/><rect x="1573.4" y="273.3" width="3" height="2.0" fill="#8fd3fa"/><line x1="1578.2" y1="272.8" x2="1578.2" y2="284.9" stroke="#8fd3fa" stroke-width="1"/><rect x="1576.7" y="275.3" width="3" height="7.6" fill="#8fd3fa"/><line x1="1581.6" y1="281.9" x2="1581.6" y2="292.9" stroke="#8fd3fa" stroke-width="1"/><rect x="1580.1" y="282.9" width="3" height="1.1" fill="#8fd3fa"/><line x1="1585.0" y1="282.9" x2="1585.0" y2="294.3" stroke="#8fd3fa" stroke-width="1"/><rect x="1583.5" y="283.9" width="3" height="5.9" fill="#8fd3fa"/><line x1="1588.3" y1="289.4" x2="1588.3" y2="304.2" stroke="#8fd3fa" stroke-width="1"/><rect x="1586.8" y="289.9" width="3" height="6.3" fill="#8fd3fa"/><line x1="1591.7" y1="287.2" x2="1591.7" y2="297.9" stroke="#f08374" stroke-width="1"/><rect x="1590.6" y="293.3" width="2.2" height="2.9" fill="#1a2136" stroke="#f08374" stroke-width="0.9"/><line x1="1595.1" y1="293.1" x2="1595.1" y2="294.8" stroke="#f08374" stroke-width="1"/><rect x="1594.0" y="293.3" width="2.2" height="1.0" fill="#1a2136" stroke="#f08374" stroke-width="0.9"/><line x1="1598.5" y1="291.4" x2="1598.5" y2="297.3" stroke="#f08374" stroke-width="1"/><rect x="1597.4" y="293.1" width="2.2" height="1.0" fill="#1a2136" stroke="#f08374" stroke-width="0.9"/><line x1="1601.8" y1="278.3" x2="1601.8" y2="293.9" stroke="#f08374" stroke-width="1"/><rect x="1600.7" y="278.6" width="2.2" height="14.5" fill="#1a2136" stroke="#f08374" stroke-width="0.9"/><line x1="1605.2" y1="254.4" x2="1605.2" y2="282.6" stroke="#f08374" stroke-width="1"/><rect x="1604.1" y="263.4" width="2.2" height="15.2" fill="#1a2136" stroke="#f08374" stroke-width="0.9"/><line x1="1608.6" y1="242.5" x2="1608.6" y2="264.6" stroke="#f08374" stroke-width="1"/><rect x="1607.5" y="249.6" width="2.2" height="13.8" fill="#1a2136" stroke="#f08374" stroke-width="0.9"/><line x1="1611.9" y1="248.3" x2="1611.9" y2="255.3" stroke="#8fd3fa" stroke-width="1"/><rect x="1610.4" y="249.6" width="3" height="2.3" fill="#8fd3fa"/><line x1="1615.3" y1="249.1" x2="1615.3" y2="272.3" stroke="#8fd3fa" stroke-width="1"/><rect x="1613.8" y="251.9" width="3" height="14.7" fill="#8fd3fa"/><line x1="1618.7" y1="261.5" x2="1618.7" y2="269.7" stroke="#8fd3fa" stroke-width="1"/><rect x="1617.2" y="266.6" width="3" height="1.0" fill="#8fd3fa"/><line x1="1622.0" y1="256.7" x2="1622.0" y2="271.6" stroke="#f08374" stroke-width="1"/><rect x="1621.0" y="260.7" width="2.2" height="6.8" fill="#1a2136" stroke="#f08374" stroke-width="0.9"/><line x1="1625.4" y1="252.7" x2="1625.4" y2="262.6" stroke="#f08374" stroke-width="1"/><rect x="1624.3" y="256.9" width="2.2" height="3.7" fill="#1a2136" stroke="#f08374" stroke-width="0.9"/><line x1="1628.8" y1="252.3" x2="1628.8" y2="264.2" stroke="#8fd3fa" stroke-width="1"/><rect x="1627.3" y="256.9" width="3" height="3.5" fill="#8fd3fa"/><line x1="1632.2" y1="248.3" x2="1632.2" y2="260.9" stroke="#f08374" stroke-width="1"/><rect x="1631.1" y="255.7" width="2.2" height="4.8" fill="#1a2136" stroke="#f08374" stroke-width="0.9"/><line x1="1635.5" y1="249.6" x2="1635.5" y2="256.3" stroke="#8fd3fa" stroke-width="1"/><rect x="1634.0" y="255.7" width="3" height="1.0" fill="#8fd3fa"/><line x1="1638.9" y1="252.0" x2="1638.9" y2="262.5" stroke="#8fd3fa" stroke-width="1"/><rect x="1637.4" y="256.3" width="3" height="3.5" fill="#8fd3fa"/><line x1="1642.3" y1="257.8" x2="1642.3" y2="270.5" stroke="#8fd3fa" stroke-width="1"/><rect x="1640.8" y="259.8" width="3" height="1.7" fill="#8fd3fa"/><line x1="1645.6" y1="259.0" x2="1645.6" y2="265.4" stroke="#8fd3fa" stroke-width="1"/><rect x="1644.1" y="261.5" width="3" height="2.2" fill="#8fd3fa"/><line x1="1649.0" y1="259.1" x2="1649.0" y2="276.3" stroke="#8fd3fa" stroke-width="1"/><rect x="1647.5" y="263.7" width="3" height="6.4" fill="#8fd3fa"/><line x1="1652.4" y1="268.4" x2="1652.4" y2="277.2" stroke="#8fd3fa" stroke-width="1"/><rect x="1650.9" y="270.1" width="3" height="6.2" fill="#8fd3fa"/><line x1="1655.8" y1="274.3" x2="1655.8" y2="277.4" stroke="#f08374" stroke-width="1"/><rect x="1654.7" y="275.3" width="2.2" height="1.0" fill="#1a2136" stroke="#f08374" stroke-width="0.9"/><line x1="1659.1" y1="268.9" x2="1659.1" y2="276.0" stroke="#f08374" stroke-width="1"/><rect x="1658.0" y="271.2" width="2.2" height="4.1" fill="#1a2136" stroke="#f08374" stroke-width="0.9"/><line x1="1662.5" y1="267.9" x2="1662.5" y2="272.7" stroke="#f08374" stroke-width="1"/><rect x="1661.4" y="268.8" width="2.2" height="2.4" fill="#1a2136" stroke="#f08374" stroke-width="0.9"/><line x1="1665.9" y1="265.2" x2="1665.9" y2="269.5" stroke="#f08374" stroke-width="1"/><rect x="1664.8" y="266.0" width="2.2" height="2.8" fill="#1a2136" stroke="#f08374" stroke-width="0.9"/><line x1="1669.2" y1="263.2" x2="1669.2" y2="293.9" stroke="#8fd3fa" stroke-width="1"/><rect x="1667.7" y="266.0" width="3" height="2.0" fill="#8fd3fa"/><line x1="1672.6" y1="264.2" x2="1672.6" y2="269.1" stroke="#f08374" stroke-width="1"/><rect x="1671.5" y="265.5" width="2.2" height="2.6" fill="#1a2136" stroke="#f08374" stroke-width="0.9"/><line x1="1676.0" y1="262.1" x2="1676.0" y2="266.1" stroke="#f08374" stroke-width="1"/><rect x="1674.9" y="262.5" width="2.2" height="3.0" fill="#1a2136" stroke="#f08374" stroke-width="0.9"/><line x1="1679.3" y1="258.6" x2="1679.3" y2="264.0" stroke="#f08374" stroke-width="1"/><rect x="1678.2" y="258.9" width="2.2" height="3.6" fill="#1a2136" stroke="#f08374" stroke-width="0.9"/><line x1="1682.7" y1="255.7" x2="1682.7" y2="259.1" stroke="#f08374" stroke-width="1"/><rect x="1681.6" y="257.2" width="2.2" height="1.7" fill="#1a2136" stroke="#f08374" stroke-width="0.9"/><line x1="1686.1" y1="252.4" x2="1686.1" y2="258.0" stroke="#f08374" stroke-width="1"/><rect x="1685.0" y="257.0" width="2.2" height="1.0" fill="#1a2136" stroke="#f08374" stroke-width="0.9"/><line x1="1689.5" y1="251.5" x2="1689.5" y2="260.3" stroke="#f08374" stroke-width="1"/><rect x="1688.4" y="254.9" width="2.2" height="2.1" fill="#1a2136" stroke="#f08374" stroke-width="0.9"/><line x1="1692.8" y1="247.8" x2="1692.8" y2="255.3" stroke="#f08374" stroke-width="1"/><rect x="1691.7" y="253.5" width="2.2" height="1.3" fill="#1a2136" stroke="#f08374" stroke-width="0.9"/><line x1="1696.2" y1="246.3" x2="1696.2" y2="257.9" stroke="#f08374" stroke-width="1"/><rect x="1695.1" y="247.3" width="2.2" height="6.2" fill="#1a2136" stroke="#f08374" stroke-width="0.9"/><line x1="1699.6" y1="234.4" x2="1699.6" y2="247.4" stroke="#f08374" stroke-width="1"/><rect x="1698.5" y="238.6" width="2.2" height="8.7" fill="#1a2136" stroke="#f08374" stroke-width="0.9"/><line x1="1702.9" y1="237.1" x2="1702.9" y2="243.8" stroke="#8fd3fa" stroke-width="1"/><rect x="1701.4" y="238.6" width="3" height="3.9" fill="#8fd3fa"/><line x1="1706.3" y1="238.0" x2="1706.3" y2="250.4" stroke="#8fd3fa" stroke-width="1"/><rect x="1704.8" y="242.5" width="3" height="5.2" fill="#8fd3fa"/><line x1="1709.7" y1="246.3" x2="1709.7" y2="257.4" stroke="#8fd3fa" stroke-width="1"/><rect x="1708.2" y="247.7" width="3" height="1.0" fill="#8fd3fa"/><line x1="1713.0" y1="247.1" x2="1713.0" y2="250.9" stroke="#8fd3fa" stroke-width="1"/><rect x="1711.5" y="248.4" width="3" height="1.2" fill="#8fd3fa"/><line x1="1716.4" y1="247.5" x2="1716.4" y2="251.0" stroke="#8fd3fa" stroke-width="1"/><rect x="1714.9" y="249.6" width="3" height="1.0" fill="#8fd3fa"/><line x1="1719.8" y1="246.7" x2="1719.8" y2="251.8" stroke="#f08374" stroke-width="1"/><rect x="1718.7" y="247.5" width="2.2" height="2.6" fill="#1a2136" stroke="#f08374" stroke-width="0.9"/><line x1="1723.2" y1="246.7" x2="1723.2" y2="256.5" stroke="#8fd3fa" stroke-width="1"/><rect x="1721.7" y="247.5" width="3" height="3.7" fill="#8fd3fa"/><line x1="1726.5" y1="249.1" x2="1726.5" y2="255.0" stroke="#8fd3fa" stroke-width="1"/><rect x="1725.0" y="251.2" width="3" height="2.5" fill="#8fd3fa"/><line x1="1729.9" y1="253.5" x2="1729.9" y2="267.9" stroke="#8fd3fa" stroke-width="1"/><rect x="1728.4" y="253.6" width="3" height="13.4" fill="#8fd3fa"/><line x1="1733.3" y1="266.2" x2="1733.3" y2="270.8" stroke="#8fd3fa" stroke-width="1"/><rect x="1731.8" y="267.1" width="3" height="2.2" fill="#8fd3fa"/><line x1="1736.6" y1="267.8" x2="1736.6" y2="278.9" stroke="#8fd3fa" stroke-width="1"/><rect x="1735.1" y="269.3" width="3" height="3.4" fill="#8fd3fa"/><line x1="1740.0" y1="266.5" x2="1740.0" y2="273.9" stroke="#f08374" stroke-width="1"/><rect x="1738.9" y="272.5" width="2.2" height="1.0" fill="#1a2136" stroke="#f08374" stroke-width="0.9"/></g>
<g font-family="'DejaVu Sans','Liberation Sans',sans-serif" font-size="11"><rect x="57.9" y="353.0" width="6" height="6" fill="#8fd3fa"/><text x="58.9" y="370.2" fill="#8fd3fa">07:40</text><text x="58.9" y="384.2" fill="#8fd3fa">156.563</text><rect x="700.4" y="256.5" width="6" height="6" fill="#f4877a"/><text x="701.4" y="239.2" fill="#f4877a">22:55</text><text x="701.4" y="253.2" fill="#f4877a">157.269</text><rect x="644.8" y="349.0" width="6" height="6" fill="#8fd3fa"/><text x="645.8" y="366.2" fill="#8fd3fa">21:35</text><text x="645.8" y="380.2" fill="#8fd3fa">156.594</text><rect x="787.5" y="337.1" width="6" height="6" fill="#8fd3fa"/><text x="788.5" y="354.3" fill="#8fd3fa">01:05</text><text x="788.5" y="368.3" fill="#8fd3fa">156.687</text><rect x="879.5" y="293.3" width="6" height="6" fill="#f4877a"/><text x="880.5" y="276.0" fill="#f4877a">03:20</text><text x="880.5" y="290.0" fill="#f4877a">156.982</text><rect x="898.7" y="315.5" width="6" height="6" fill="#8fd3fa"/><text x="899.7" y="332.7" fill="#8fd3fa">03:50</text><text x="899.7" y="346.7" fill="#8fd3fa">156.855</text><rect x="946.3" y="279.0" width="6" height="6" fill="#f4877a"/><text x="947.3" y="261.7" fill="#f4877a">05:00</text><text x="947.3" y="275.7" fill="#f4877a">157.094</text><rect x="983.0" y="309.8" width="6" height="6" fill="#8fd3fa"/><text x="984.0" y="327.0" fill="#8fd3fa">06:10</text><text x="984.0" y="341.0" fill="#8fd3fa">156.900</text><rect x="1158.3" y="248.6" width="6" height="6" fill="#f4877a"/><text x="1159.3" y="231.3" fill="#f4877a">10:30</text><text x="1159.3" y="245.3" fill="#f4877a">157.331</text><rect x="1225.5" y="322.3" width="6" height="6" fill="#8fd3fa"/><text x="1226.5" y="339.5" fill="#8fd3fa">12:10</text><text x="1226.5" y="353.5" fill="#8fd3fa">156.802</text><rect x="1346.7" y="130.0" width="6" height="6" fill="#f4877a"/><text x="1347.7" y="112.7" fill="#f4877a">15:10</text><text x="1347.7" y="126.7" fill="#f4877a">158.258</text><rect x="1363.7" y="222.6" width="6" height="6" fill="#8fd3fa"/><text x="1364.7" y="239.8" fill="#8fd3fa">15:35</text><text x="1364.7" y="253.8" fill="#8fd3fa">157.581</text><rect x="1403.9" y="136.4" width="6" height="6" fill="#f4877a"/><text x="1404.9" y="119.1" fill="#f4877a">16:35</text><text x="1404.9" y="133.1" fill="#f4877a">158.208</text><rect x="1511.9" y="314.7" width="6" height="6" fill="#8fd3fa"/><text x="1512.9" y="331.9" fill="#8fd3fa">19:15</text><text x="1512.9" y="345.9" fill="#8fd3fa">156.862</text><rect x="1565.6" y="250.9" width="6" height="6" fill="#f4877a"/><text x="1566.6" y="233.6" fill="#f4877a">20:35</text><text x="1566.6" y="247.6" fill="#f4877a">157.317</text><rect x="1585.6" y="303.7" width="6" height="6" fill="#8fd3fa"/><text x="1586.6" y="320.9" fill="#8fd3fa">21:05</text><text x="1586.6" y="334.9" fill="#8fd3fa">156.948</text><rect x="1606.1" y="236.0" width="6" height="6" fill="#f4877a"/><text x="1607.1" y="218.7" fill="#f4877a">21:35</text><text x="1607.1" y="232.7" fill="#f4877a">157.430</text><rect x="1666.4" y="293.4" width="6" height="6" fill="#8fd3fa"/><text x="1667.4" y="310.6" fill="#8fd3fa">23:05</text><text x="1667.4" y="324.6" fill="#8fd3fa">157.028</text><rect x="1696.7" y="227.9" width="6" height="6" fill="#f4877a"/><text x="1697.7" y="210.6" fill="#f4877a">23:50</text><text x="1697.7" y="224.6" fill="#f4877a">157.493</text><rect x="1733.9" y="278.4" width="6" height="6" fill="#8fd3fa"/><text x="1734.9" y="295.6" fill="#8fd3fa">00:45</text><text x="1734.9" y="309.6" fill="#8fd3fa">157.145</text><circle cx="1739.5" cy="267.5" r="1.6" fill="#e8e040"/></g>
<clipPath id="c2"><rect x="58" y="401" width="1768" height="169"/></clipPath><g clip-path="url(#c2)">
<g shape-rendering="crispEdges"><rect x="721.0" y="485.5" width="2.5" height="3.2" fill="#5038b0"/><rect x="724.4" y="485.5" width="2.5" height="1.6" fill="#5038b0"/><rect x="727.8" y="485.5" width="2.5" height="2.9" fill="#5038b0"/><rect x="731.1" y="485.5" width="2.5" height="2.9" fill="#5038b0"/><rect x="734.5" y="485.5" width="2.5" height="0.7" fill="#5038b0"/><rect x="737.9" y="485.5" width="2.5" height="3.3" fill="#5038b0"/><rect x="741.2" y="485.5" width="2.5" height="7.6" fill="#5038b0"/><rect x="744.6" y="485.5" width="2.5" height="9.3" fill="#5038b0"/><rect x="748.0" y="485.5" width="2.5" height="9.4" fill="#5038b0"/><rect x="751.3" y="485.5" width="2.5" height="8.0" fill="#5038b0"/><rect x="754.7" y="485.5" width="2.5" height="6.4" fill="#5038b0"/><rect x="758.1" y="485.5" width="2.5" height="4.8" fill="#5038b0"/><rect x="761.4" y="485.5" width="2.5" height="3.4" fill="#5038b0"/><rect x="764.8" y="485.5" width="2.5" height="3.6" fill="#5038b0"/><rect x="768.2" y="485.5" width="2.5" height="3.9" fill="#5038b0"/><rect x="771.6" y="485.5" width="2.5" height="4.1" fill="#5038b0"/><rect x="774.9" y="485.5" width="2.5" height="4.3" fill="#5038b0"/><rect x="778.3" y="485.5" width="2.5" height="4.4" fill="#5038b0"/><rect x="781.7" y="485.5" width="2.5" height="4.1" fill="#5038b0"/><rect x="785.0" y="485.5" width="2.5" height="3.8" fill="#5038b0"/><rect x="788.4" y="485.5" width="2.5" height="1.0" fill="#5038b0"/><rect x="791.8" y="482.7" width="2.5" height="2.8" fill="#b5379f"/><rect x="795.1" y="480.2" width="2.5" height="5.3" fill="#b5379f"/><rect x="798.5" y="479.7" width="2.5" height="5.8" fill="#b5379f"/><rect x="801.9" y="481.9" width="2.5" height="3.6" fill="#b5379f"/><rect x="805.3" y="483.0" width="2.5" height="2.5" fill="#b5379f"/><rect x="808.6" y="481.5" width="2.5" height="4.0" fill="#b5379f"/><rect x="812.0" y="480.6" width="2.5" height="4.9" fill="#b5379f"/><rect x="815.4" y="478.0" width="2.5" height="7.5" fill="#b5379f"/><rect x="818.7" y="476.1" width="2.5" height="9.4" fill="#b5379f"/><rect x="822.1" y="476.9" width="2.5" height="8.6" fill="#b5379f"/><rect x="825.5" y="480.6" width="2.5" height="4.9" fill="#b5379f"/><rect x="828.9" y="484.4" width="2.5" height="1.1" fill="#b5379f"/><rect x="832.2" y="483.2" width="2.5" height="2.3" fill="#b5379f"/><rect x="835.6" y="481.4" width="2.5" height="4.1" fill="#b5379f"/><rect x="839.0" y="480.6" width="2.5" height="4.9" fill="#b5379f"/><rect x="842.3" y="480.1" width="2.5" height="5.4" fill="#b5379f"/><rect x="845.7" y="480.2" width="2.5" height="5.3" fill="#b5379f"/><rect x="849.1" y="480.9" width="2.5" height="4.6" fill="#b5379f"/><rect x="852.4" y="482.1" width="2.5" height="3.4" fill="#b5379f"/><rect x="855.8" y="481.6" width="2.5" height="3.9" fill="#b5379f"/><rect x="859.2" y="481.1" width="2.5" height="4.4" fill="#b5379f"/><rect x="862.5" y="481.1" width="2.5" height="4.4" fill="#b5379f"/><rect x="865.9" y="481.2" width="2.5" height="4.3" fill="#b5379f"/><rect x="869.3" y="481.3" width="2.5" height="4.2" fill="#b5379f"/><rect x="872.7" y="482.0" width="2.5" height="3.5" fill="#b5379f"/><rect x="876.0" y="482.7" width="2.5" height="2.8" fill="#b5379f"/><rect x="879.4" y="483.7" width="2.5" height="1.8" fill="#b5379f"/><rect x="886.1" y="485.5" width="2.5" height="1.5" fill="#5038b0"/><rect x="889.5" y="485.5" width="2.5" height="2.7" fill="#5038b0"/><rect x="892.9" y="485.5" width="2.5" height="3.7" fill="#5038b0"/><rect x="896.2" y="485.5" width="2.5" height="4.7" fill="#5038b0"/><rect x="899.6" y="485.5" width="2.5" height="5.1" fill="#5038b0"/><rect x="903.0" y="485.5" width="2.5" height="4.4" fill="#5038b0"/><rect x="906.4" y="485.5" width="2.5" height="2.6" fill="#5038b0"/><rect x="913.1" y="484.9" width="2.5" height="0.6" fill="#b5379f"/><rect x="916.5" y="484.2" width="2.5" height="1.3" fill="#b5379f"/><rect x="919.8" y="483.8" width="2.5" height="1.7" fill="#b5379f"/><rect x="923.2" y="483.3" width="2.5" height="2.2" fill="#b5379f"/><rect x="926.6" y="483.1" width="2.5" height="2.4" fill="#b5379f"/><rect x="929.9" y="483.0" width="2.5" height="2.5" fill="#b5379f"/><rect x="933.3" y="483.0" width="2.5" height="2.5" fill="#b5379f"/><rect x="936.7" y="483.0" width="2.5" height="2.5" fill="#b5379f"/><rect x="940.1" y="482.9" width="2.5" height="2.6" fill="#b5379f"/><rect x="943.4" y="482.5" width="2.5" height="3.0" fill="#b5379f"/><rect x="946.8" y="482.3" width="2.5" height="3.2" fill="#b5379f"/><rect x="950.2" y="482.8" width="2.5" height="2.7" fill="#b5379f"/><rect x="953.5" y="484.1" width="2.5" height="1.4" fill="#b5379f"/><rect x="960.3" y="485.5" width="2.5" height="0.8" fill="#5038b0"/><rect x="963.6" y="485.5" width="2.5" height="1.1" fill="#5038b0"/><rect x="967.0" y="485.5" width="2.5" height="1.3" fill="#5038b0"/><rect x="970.4" y="485.5" width="2.5" height="1.4" fill="#5038b0"/><rect x="973.8" y="485.5" width="2.5" height="1.5" fill="#5038b0"/><rect x="977.1" y="485.5" width="2.5" height="1.7" fill="#5038b0"/><rect x="980.5" y="485.5" width="2.5" height="2.1" fill="#5038b0"/><rect x="983.9" y="485.5" width="2.5" height="3.1" fill="#5038b0"/><rect x="987.2" y="485.5" width="2.5" height="3.6" fill="#5038b0"/><rect x="990.6" y="485.5" width="2.5" height="3.3" fill="#5038b0"/><rect x="994.0" y="485.5" width="2.5" height="3.2" fill="#5038b0"/><rect x="997.4" y="485.5" width="2.5" height="2.6" fill="#5038b0"/><rect x="1000.7" y="485.5" width="2.5" height="2.2" fill="#5038b0"/><rect x="1004.1" y="485.5" width="2.5" height="2.1" fill="#5038b0"/><rect x="1007.5" y="485.5" width="2.5" height="2.2" fill="#5038b0"/><rect x="1010.8" y="485.5" width="2.5" height="1.6" fill="#5038b0"/><rect x="1014.2" y="485.5" width="2.5" height="0.7" fill="#5038b0"/><rect x="1020.9" y="485.5" width="2.5" height="0.6" fill="#5038b0"/><rect x="1024.3" y="485.5" width="2.5" height="0.7" fill="#5038b0"/><rect x="1041.2" y="484.1" width="2.5" height="1.4" fill="#b5379f"/><rect x="1044.5" y="483.2" width="2.5" height="2.3" fill="#b5379f"/><rect x="1047.9" y="482.9" width="2.5" height="2.6" fill="#b5379f"/><rect x="1051.3" y="482.9" width="2.5" height="2.6" fill="#b5379f"/><rect x="1054.6" y="482.4" width="2.5" height="3.1" fill="#b5379f"/><rect x="1058.0" y="481.6" width="2.5" height="3.9" fill="#b5379f"/><rect x="1061.4" y="481.0" width="2.5" height="4.5" fill="#b5379f"/><rect x="1064.8" y="482.4" width="2.5" height="3.1" fill="#b5379f"/><rect x="1068.1" y="482.9" width="2.5" height="2.6" fill="#b5379f"/><rect x="1071.5" y="483.1" width="2.5" height="2.4" fill="#b5379f"/><rect x="1074.9" y="483.1" width="2.5" height="2.4" fill="#b5379f"/><rect x="1078.2" y="484.6" width="2.5" height="0.9" fill="#b5379f"/><rect x="1085.0" y="485.5" width="2.5" height="0.5" fill="#5038b0"/><rect x="1088.3" y="485.5" width="2.5" height="0.6" fill="#5038b0"/><rect x="1091.7" y="485.5" width="2.5" height="0.6" fill="#5038b0"/><rect x="1105.2" y="485.5" width="2.5" height="0.5" fill="#5038b0"/><rect x="1108.6" y="485.5" width="2.5" height="1.2" fill="#5038b0"/><rect x="1111.9" y="485.5" width="2.5" height="2.3" fill="#5038b0"/><rect x="1115.3" y="485.5" width="2.5" height="1.8" fill="#5038b0"/><rect x="1118.7" y="484.2" width="2.5" height="1.3" fill="#b5379f"/><rect x="1122.0" y="482.7" width="2.5" height="2.8" fill="#b5379f"/><rect x="1125.4" y="482.8" width="2.5" height="2.7" fill="#b5379f"/><rect x="1128.8" y="484.0" width="2.5" height="1.5" fill="#b5379f"/><rect x="1132.2" y="483.8" width="2.5" height="1.7" fill="#b5379f"/><rect x="1135.5" y="483.0" width="2.5" height="2.5" fill="#b5379f"/><rect x="1138.9" y="482.5" width="2.5" height="3.0" fill="#b5379f"/><rect x="1142.3" y="482.2" width="2.5" height="3.3" fill="#b5379f"/><rect x="1145.6" y="481.9" width="2.5" height="3.6" fill="#b5379f"/><rect x="1149.0" y="481.3" width="2.5" height="4.2" fill="#b5379f"/><rect x="1152.4" y="482.1" width="2.5" height="3.4" fill="#b5379f"/><rect x="1155.7" y="483.0" width="2.5" height="2.5" fill="#b5379f"/><rect x="1159.1" y="482.9" width="2.5" height="2.6" fill="#b5379f"/><rect x="1162.5" y="483.3" width="2.5" height="2.2" fill="#b5379f"/><rect x="1165.8" y="484.8" width="2.5" height="0.7" fill="#b5379f"/><rect x="1172.6" y="485.5" width="2.5" height="0.8" fill="#5038b0"/><rect x="1176.0" y="485.5" width="2.5" height="2.2" fill="#5038b0"/><rect x="1179.3" y="485.5" width="2.5" height="3.5" fill="#5038b0"/><rect x="1182.7" y="485.5" width="2.5" height="4.7" fill="#5038b0"/><rect x="1186.1" y="485.5" width="2.5" height="6.7" fill="#5038b0"/><rect x="1189.4" y="485.5" width="2.5" height="7.0" fill="#5038b0"/><rect x="1192.8" y="485.5" width="2.5" height="5.9" fill="#5038b0"/><rect x="1196.2" y="485.5" width="2.5" height="5.1" fill="#5038b0"/><rect x="1199.5" y="485.5" width="2.5" height="0.7" fill="#5038b0"/><rect x="1202.9" y="483.7" width="2.5" height="1.8" fill="#b5379f"/><rect x="1206.3" y="483.1" width="2.5" height="2.4" fill="#b5379f"/><rect x="1209.7" y="483.0" width="2.5" height="2.5" fill="#b5379f"/><rect x="1213.0" y="481.7" width="2.5" height="3.8" fill="#b5379f"/><rect x="1216.4" y="480.4" width="2.5" height="5.1" fill="#b5379f"/><rect x="1219.8" y="479.4" width="2.5" height="6.1" fill="#b5379f"/><rect x="1223.1" y="485.5" width="2.5" height="2.5" fill="#5038b0"/><rect x="1226.5" y="485.5" width="2.5" height="6.7" fill="#5038b0"/><rect x="1229.9" y="485.5" width="2.5" height="9.7" fill="#5038b0"/><rect x="1233.2" y="479.3" width="2.5" height="6.2" fill="#b5379f"/><rect x="1236.6" y="462.6" width="2.5" height="22.9" fill="#b5379f"/><rect x="1240.0" y="452.8" width="2.5" height="32.7" fill="#b5379f"/><rect x="1243.4" y="449.6" width="2.5" height="35.9" fill="#b5379f"/><rect x="1246.7" y="453.3" width="2.5" height="32.2" fill="#b5379f"/><rect x="1250.1" y="460.8" width="2.5" height="24.7" fill="#b5379f"/><rect x="1253.5" y="470.2" width="2.5" height="15.3" fill="#b5379f"/><rect x="1256.8" y="477.0" width="2.5" height="8.5" fill="#b5379f"/><rect x="1260.2" y="482.0" width="2.5" height="3.5" fill="#b5379f"/><rect x="1267.0" y="485.5" width="2.5" height="2.3" fill="#5038b0"/><rect x="1270.3" y="485.5" width="2.5" height="4.5" fill="#5038b0"/><rect x="1273.7" y="485.5" width="2.5" height="6.2" fill="#5038b0"/><rect x="1277.1" y="485.5" width="2.5" height="7.6" fill="#5038b0"/><rect x="1280.4" y="485.5" width="2.5" height="8.0" fill="#5038b0"/><rect x="1283.8" y="485.5" width="2.5" height="8.4" fill="#5038b0"/><rect x="1287.2" y="485.5" width="2.5" height="9.1" fill="#5038b0"/><rect x="1290.5" y="485.5" width="2.5" height="7.2" fill="#5038b0"/><rect x="1293.9" y="485.5" width="2.5" height="5.5" fill="#5038b0"/><rect x="1297.3" y="485.5" width="2.5" height="4.6" fill="#5038b0"/><rect x="1300.7" y="485.5" width="2.5" height="4.2" fill="#5038b0"/><rect x="1304.0" y="485.5" width="2.5" height="4.1" fill="#5038b0"/><rect x="1307.4" y="485.5" width="2.5" height="2.7" fill="#5038b0"/><rect x="1310.8" y="485.5" width="2.5" height="3.7" fill="#5038b0"/><rect x="1314.1" y="485.5" width="2.5" height="4.8" fill="#5038b0"/><rect x="1317.5" y="485.5" width="2.5" height="4.8" fill="#5038b0"/><rect x="1320.9" y="485.5" width="2.5" height="4.5" fill="#5038b0"/><rect x="1324.2" y="485.5" width="2.5" height="4.1" fill="#5038b0"/><rect x="1327.6" y="485.5" width="2.5" height="4.3" fill="#5038b0"/><rect x="1331.0" y="485.5" width="2.5" height="4.2" fill="#5038b0"/><rect x="1334.3" y="485.5" width="2.5" height="0.6" fill="#5038b0"/><rect x="1337.7" y="481.5" width="2.5" height="4.0" fill="#b5379f"/><rect x="1341.1" y="479.6" width="2.5" height="5.9" fill="#b5379f"/><rect x="1344.5" y="478.4" width="2.5" height="7.1" fill="#b5379f"/><rect x="1347.8" y="477.6" width="2.5" height="7.9" fill="#b5379f"/><rect x="1351.2" y="480.7" width="2.5" height="4.8" fill="#b5379f"/><rect x="1354.6" y="483.8" width="2.5" height="1.7" fill="#b5379f"/><rect x="1357.9" y="485.5" width="2.5" height="1.1" fill="#5038b0"/><rect x="1361.3" y="485.5" width="2.5" height="5.1" fill="#5038b0"/><rect x="1364.7" y="485.5" width="2.5" height="18.6" fill="#5038b0"/><rect x="1368.0" y="485.5" width="2.5" height="22.2" fill="#5038b0"/><rect x="1371.4" y="485.5" width="2.5" height="15.5" fill="#5038b0"/><rect x="1374.8" y="485.5" width="2.5" height="8.4" fill="#5038b0"/><rect x="1378.2" y="485.5" width="2.5" height="9.5" fill="#5038b0"/><rect x="1381.5" y="485.5" width="2.5" height="10.3" fill="#5038b0"/><rect x="1384.9" y="485.5" width="2.5" height="6.6" fill="#5038b0"/><rect x="1388.3" y="485.5" width="2.5" height="6.0" fill="#5038b0"/><rect x="1391.6" y="485.5" width="2.5" height="6.1" fill="#5038b0"/><rect x="1395.0" y="485.5" width="2.5" height="5.6" fill="#5038b0"/><rect x="1398.4" y="485.5" width="2.5" height="4.2" fill="#5038b0"/><rect x="1405.1" y="485.5" width="2.5" height="1.9" fill="#5038b0"/><rect x="1408.5" y="485.5" width="2.5" height="3.0" fill="#5038b0"/><rect x="1411.9" y="485.5" width="2.5" height="7.0" fill="#5038b0"/><rect x="1415.2" y="485.5" width="2.5" height="14.7" fill="#5038b0"/><rect x="1418.6" y="485.5" width="2.5" height="18.5" fill="#5038b0"/><rect x="1422.0" y="485.5" width="2.5" height="19.8" fill="#5038b0"/><rect x="1425.3" y="485.5" width="2.5" height="28.4" fill="#5038b0"/><rect x="1428.7" y="485.5" width="2.5" height="25.3" fill="#5038b0"/><rect x="1432.1" y="485.5" width="2.5" height="15.9" fill="#5038b0"/><rect x="1435.5" y="485.5" width="2.5" height="4.2" fill="#5038b0"/><rect x="1438.8" y="481.1" width="2.5" height="4.4" fill="#b5379f"/><rect x="1442.2" y="477.0" width="2.5" height="8.5" fill="#b5379f"/><rect x="1445.6" y="477.5" width="2.5" height="8.0" fill="#b5379f"/><rect x="1448.9" y="483.1" width="2.5" height="2.4" fill="#b5379f"/><rect x="1452.3" y="484.1" width="2.5" height="1.4" fill="#b5379f"/><rect x="1455.7" y="481.0" width="2.5" height="4.5" fill="#b5379f"/><rect x="1459.0" y="482.6" width="2.5" height="2.9" fill="#b5379f"/><rect x="1469.2" y="485.5" width="2.5" height="0.7" fill="#5038b0"/><rect x="1472.5" y="485.5" width="2.5" height="0.7" fill="#5038b0"/><rect x="1475.9" y="482.4" width="2.5" height="3.1" fill="#b5379f"/><rect x="1479.3" y="481.5" width="2.5" height="4.0" fill="#b5379f"/><rect x="1482.6" y="484.1" width="2.5" height="1.4" fill="#b5379f"/><rect x="1486.0" y="485.5" width="2.5" height="7.9" fill="#5038b0"/><rect x="1489.4" y="485.5" width="2.5" height="18.3" fill="#5038b0"/><rect x="1492.7" y="485.5" width="2.5" height="15.2" fill="#5038b0"/><rect x="1496.1" y="485.5" width="2.5" height="10.2" fill="#5038b0"/><rect x="1499.5" y="485.5" width="2.5" height="6.3" fill="#5038b0"/><rect x="1502.8" y="485.5" width="2.5" height="5.7" fill="#5038b0"/><rect x="1506.2" y="485.5" width="2.5" height="1.2" fill="#5038b0"/><rect x="1509.6" y="485.5" width="2.5" height="0.9" fill="#5038b0"/><rect x="1513.0" y="485.5" width="2.5" height="1.4" fill="#5038b0"/><rect x="1516.3" y="484.3" width="2.5" height="1.2" fill="#b5379f"/><rect x="1519.7" y="481.0" width="2.5" height="4.5" fill="#b5379f"/><rect x="1523.1" y="476.8" width="2.5" height="8.7" fill="#b5379f"/><rect x="1526.4" y="477.4" width="2.5" height="8.1" fill="#b5379f"/><rect x="1529.8" y="477.4" width="2.5" height="8.1" fill="#b5379f"/><rect x="1533.2" y="478.2" width="2.5" height="7.3" fill="#b5379f"/><rect x="1536.5" y="479.1" width="2.5" height="6.4" fill="#b5379f"/><rect x="1539.9" y="479.2" width="2.5" height="6.3" fill="#b5379f"/><rect x="1543.3" y="476.5" width="2.5" height="9.0" fill="#b5379f"/><rect x="1546.7" y="475.4" width="2.5" height="10.1" fill="#b5379f"/><rect x="1550.0" y="471.0" width="2.5" height="14.5" fill="#b5379f"/><rect x="1553.4" y="467.5" width="2.5" height="18.0" fill="#b5379f"/><rect x="1556.8" y="463.5" width="2.5" height="22.0" fill="#b5379f"/><rect x="1560.1" y="464.1" width="2.5" height="21.4" fill="#b5379f"/><rect x="1563.5" y="466.6" width="2.5" height="18.9" fill="#b5379f"/><rect x="1566.9" y="468.6" width="2.5" height="16.9" fill="#b5379f"/><rect x="1570.2" y="475.5" width="2.5" height="10.0" fill="#b5379f"/><rect x="1573.6" y="481.7" width="2.5" height="3.8" fill="#b5379f"/><rect x="1577.0" y="484.9" width="2.5" height="0.6" fill="#b5379f"/><rect x="1580.4" y="485.5" width="2.5" height="3.5" fill="#5038b0"/><rect x="1583.7" y="485.5" width="2.5" height="6.0" fill="#5038b0"/><rect x="1587.1" y="485.5" width="2.5" height="7.0" fill="#5038b0"/><rect x="1590.5" y="485.5" width="2.5" height="8.4" fill="#5038b0"/><rect x="1593.8" y="485.5" width="2.5" height="5.2" fill="#5038b0"/><rect x="1597.2" y="485.5" width="2.5" height="1.8" fill="#5038b0"/><rect x="1600.6" y="483.1" width="2.5" height="2.4" fill="#b5379f"/><rect x="1604.0" y="472.0" width="2.5" height="13.5" fill="#b5379f"/><rect x="1607.3" y="466.8" width="2.5" height="18.7" fill="#b5379f"/><rect x="1610.7" y="469.0" width="2.5" height="16.5" fill="#b5379f"/><rect x="1614.1" y="476.6" width="2.5" height="8.9" fill="#b5379f"/><rect x="1617.4" y="477.9" width="2.5" height="7.6" fill="#b5379f"/><rect x="1620.8" y="480.6" width="2.5" height="4.9" fill="#b5379f"/><rect x="1624.2" y="479.4" width="2.5" height="6.1" fill="#b5379f"/><rect x="1627.5" y="480.3" width="2.5" height="5.2" fill="#b5379f"/><rect x="1630.9" y="483.0" width="2.5" height="2.5" fill="#b5379f"/><rect x="1634.3" y="484.3" width="2.5" height="1.2" fill="#b5379f"/><rect x="1637.7" y="485.5" width="2.5" height="0.4" fill="#5038b0"/><rect x="1641.0" y="485.5" width="2.5" height="2.9" fill="#5038b0"/><rect x="1644.4" y="485.5" width="2.5" height="4.7" fill="#5038b0"/><rect x="1647.8" y="485.5" width="2.5" height="7.2" fill="#5038b0"/><rect x="1651.1" y="485.5" width="2.5" height="10.4" fill="#5038b0"/><rect x="1654.5" y="485.5" width="2.5" height="11.1" fill="#5038b0"/><rect x="1657.9" y="485.5" width="2.5" height="8.9" fill="#5038b0"/><rect x="1661.2" y="485.5" width="2.5" height="4.5" fill="#5038b0"/><rect x="1664.6" y="485.5" width="2.5" height="1.9" fill="#5038b0"/><rect x="1668.0" y="485.5" width="2.5" height="3.5" fill="#5038b0"/><rect x="1671.3" y="485.5" width="2.5" height="1.1" fill="#5038b0"/><rect x="1674.7" y="484.2" width="2.5" height="1.3" fill="#b5379f"/><rect x="1678.1" y="484.9" width="2.5" height="0.6" fill="#b5379f"/><rect x="1681.5" y="479.9" width="2.5" height="5.6" fill="#b5379f"/><rect x="1684.8" y="480.1" width="2.5" height="5.4" fill="#b5379f"/><rect x="1688.2" y="482.1" width="2.5" height="3.4" fill="#b5379f"/><rect x="1691.6" y="480.5" width="2.5" height="5.0" fill="#b5379f"/><rect x="1694.9" y="478.8" width="2.5" height="6.7" fill="#b5379f"/><rect x="1698.3" y="476.0" width="2.5" height="9.5" fill="#b5379f"/><rect x="1701.7" y="479.5" width="2.5" height="6.0" fill="#b5379f"/><rect x="1705.0" y="482.6" width="2.5" height="2.9" fill="#b5379f"/><rect x="1708.4" y="485.1" width="2.5" height="0.4" fill="#b5379f"/><rect x="1711.8" y="485.5" width="2.5" height="2.6" fill="#5038b0"/><rect x="1715.2" y="485.5" width="2.5" height="3.0" fill="#5038b0"/><rect x="1718.5" y="485.5" width="2.5" height="3.0" fill="#5038b0"/><rect x="1721.9" y="485.5" width="2.5" height="3.9" fill="#5038b0"/><rect x="1725.3" y="485.5" width="2.5" height="5.9" fill="#5038b0"/><rect x="1728.6" y="485.5" width="2.5" height="9.8" fill="#5038b0"/><rect x="1732.0" y="485.5" width="2.5" height="12.4" fill="#5038b0"/><rect x="1735.4" y="485.5" width="2.5" height="10.0" fill="#5038b0"/><rect x="1738.8" y="485.5" width="2.5" height="8.1" fill="#5038b0"/></g>
<g fill="none" stroke-linejoin="round"><polyline points="720.9,481.3 727.3,483.1 735.6,484.4 740.2,486.8 745.7,491.4 751.2,495.1 756.7,497.3 764.0,499.6 771.4,502.4 778.7,505.1 786.1,507.4 790.7,507.9 795.2,506.1 800.7,504.6 806.3,503.3 811.8,501.5 817.3,498.4 822.8,494.7 826.4,493.2 831.9,492.7 837.5,491.0 843.0,489.2 848.5,486.8 854.0,485.0 859.5,483.1 866.8,481.3 874.2,479.5 881.5,478.2 887.0,478.2 892.5,479.5 898.0,481.3 903.5,483.5 909.0,484.0 914.5,483.3 921.9,481.8 929.2,480.4 936.6,478.9 943.9,477.4 951.2,476.0 956.7,476.2 962.2,476.7 969.6,477.6 976.9,478.5 984.3,479.5 991.6,481.7 999.0,483.3 1006.3,484.4 1013.6,485.3 1021.0,485.9 1028.3,486.2 1035.7,486.2 1043.0,485.5 1050.3,484.4 1057.7,483.1 1064.7,481.3 1065.0,480.7 1072.3,479.4 1079.7,478.3 1087.0,478.8 1094.4,479.2 1101.7,479.7 1109.0,480.3 1116.4,481.2 1123.7,480.3 1131.1,479.4 1138.4,477.9 1145.7,475.7 1153.1,473.9 1160.4,472.8 1167.8,472.4 1173.3,472.8 1178.8,474.2 1184.3,477.0 1189.8,480.3 1195.3,483.0 1200.8,483.8 1206.3,483.0 1211.8,481.9 1217.3,480.7 1221.9,479.4 1226.5,481.6 1232.0,485.2 1235.3,483.4 1238.8,475.1 1242.1,465.1 1245.4,455.9 1248.5,449.5 1252.2,444.5 1255.9,441.6 1260.4,440.3 1265.0,439.9 1270.5,440.3 1276.0,443.0 1281.6,446.2 1287.1,449.5 1292.6,452.2 1298.1,454.0 1303.6,455.9 1309.1,458.1 1314.6,460.5 1320.1,462.3 1325.6,464.5 1331.1,466.0 1335.7,466.0 1340.3,464.1 1345.8,461.4 1351.3,459.0 1356.8,458.1 1362.3,459.6 1366.0,464.1 1369.6,469.6 1375.1,474.2 1380.7,477.9 1386.2,481.2 1391.7,483.4 1397.2,485.2 1402.7,485.8 1409.7,487.1 1410.0,487.3 1415.5,493.2 1421.0,500.6 1425.6,509.7 1430.2,517.1 1434.8,520.7 1439.4,521.1 1444.9,518.9 1450.4,517.1 1457.7,515.2 1465.1,514.3 1472.4,514.0 1479.7,512.9 1484.3,512.5 1488.9,517.1 1494.4,522.6 1499.9,526.3 1505.4,528.1 1510.9,528.6 1516.4,529.4 1521.9,528.1 1527.5,525.3 1533.0,522.6 1538.5,520.2 1544.0,517.1 1549.5,512.5 1555.0,507.0 1560.5,499.6 1566.0,492.3 1571.5,486.8 1577.0,484.6 1582.5,485.5 1588.0,488.1 1593.5,491.0 1599.0,491.8 1604.5,487.7 1610.0,481.3 1615.5,477.6 1621.0,475.2 1626.6,473.0 1632.1,471.6 1637.6,471.2 1643.1,473.0 1648.6,476.7 1654.1,480.4 1659.6,483.1 1665.1,484.0 1670.6,485.0 1676.1,484.0 1681.6,482.6 1687.1,481.3 1692.6,479.5 1698.1,476.7 1703.6,474.3 1709.1,473.4 1714.6,473.6 1720.1,474.5 1725.7,476.7 1731.2,481.3 1736.7,485.9 1739.8,487.3" stroke="#f09a4a" stroke-width="1.1"/><polyline points="720.9,485.0 725.5,484.0 731.0,487.3 735.6,485.0 739.3,489.6 742.9,496.9 747.5,502.4 753.0,503.3 758.5,502.8 763.1,502.4 767.7,504.6 773.2,507.0 778.7,509.4 784.2,510.7 787.9,511.2 791.6,506.1 795.2,501.5 798.9,499.1 802.6,500.2 805.3,502.4 808.1,498.7 811.8,497.8 815.4,493.2 819.1,488.1 822.8,485.9 826.4,488.1 829.2,492.3 832.9,490.5 837.5,486.8 843.0,484.0 848.5,481.8 854.0,481.8 859.5,478.9 865.0,477.6 870.5,476.3 876.0,476.2 881.5,476.7 887.0,479.5 892.5,482.6 898.0,485.9 902.6,488.1 906.3,487.3 910.9,484.0 918.2,481.3 925.5,478.9 932.9,477.3 940.2,475.8 947.6,473.6 952.2,473.4 956.7,475.8 962.2,477.6 969.6,478.9 976.9,480.0 982.4,481.3 987.9,484.0 995.3,485.5 1002.6,485.9 1010.0,487.0 1017.3,485.9 1024.6,486.8 1032.0,486.2 1039.3,485.5 1046.7,482.6 1054.0,481.3 1059.5,478.9 1064.7,476.7 1065.0,477.5 1070.5,477.4 1076.9,476.4 1081.5,478.3 1087.0,479.4 1094.4,479.7 1101.7,479.4 1109.0,481.2 1115.5,484.0 1120.1,479.4 1124.6,477.0 1131.1,478.3 1138.4,475.1 1145.7,472.4 1151.3,470.2 1156.8,470.9 1162.3,470.0 1167.8,472.0 1173.3,473.3 1178.8,477.0 1184.3,481.6 1188.9,487.1 1193.5,488.0 1197.1,488.5 1201.7,483.4 1205.4,480.7 1210.0,480.3 1215.5,477.0 1221.9,473.3 1225.2,486.2 1228.7,489.8 1232.0,495.3 1235.3,472.4 1238.8,449.5 1242.1,432.0 1245.4,421.4 1248.5,419.5 1252.2,422.8 1255.9,430.2 1262.3,437.9 1266.9,441.2 1272.4,445.8 1277.9,451.3 1283.4,455.0 1288.9,459.2 1294.4,458.3 1299.9,458.6 1305.4,460.5 1309.1,460.5 1314.6,465.1 1320.1,466.9 1325.6,468.4 1331.1,470.2 1333.9,469.6 1338.4,461.4 1344.0,455.9 1349.5,452.2 1355.0,455.9 1361.4,461.8 1364.1,468.7 1366.5,486.2 1369.6,490.7 1373.3,486.2 1376.6,482.1 1380.1,487.1 1383.4,489.5 1386.7,487.1 1390.2,488.5 1393.5,489.8 1396.8,490.4 1400.3,489.3 1403.6,484.9 1406.9,488.9 1409.7,490.2 1410.0,489.6 1413.7,498.7 1417.3,511.6 1421.0,518.9 1424.3,526.3 1427.3,541.9 1430.6,540.6 1433.9,533.6 1437.2,523.5 1440.6,515.2 1444.0,510.7 1447.3,510.7 1450.7,515.6 1454.0,514.9 1457.3,510.7 1460.8,512.5 1464.1,515.2 1467.4,513.8 1470.9,514.9 1474.2,514.3 1477.5,509.7 1481.0,508.8 1484.3,511.6 1487.6,524.4 1491.1,538.2 1494.4,536.3 1497.7,534.0 1501.2,532.3 1504.5,533.2 1507.8,529.0 1511.3,529.6 1514.6,530.5 1517.9,527.7 1521.4,523.5 1524.7,518.0 1528.0,517.4 1531.5,515.6 1534.8,514.9 1538.1,514.3 1541.6,512.5 1544.9,507.5 1548.2,503.9 1551.7,496.0 1555.0,489.6 1558.3,481.3 1561.8,477.6 1565.1,475.8 1568.4,474.0 1571.9,477.6 1575.2,482.2 1578.5,484.4 1582.0,489.2 1585.3,492.7 1588.6,495.1 1592.1,498.4 1595.4,496.0 1598.7,493.2 1602.1,486.8 1605.4,473.0 1608.8,464.8 1612.2,464.2 1615.5,469.7 1618.8,469.0 1622.3,470.3 1625.6,467.5 1628.9,467.5 1632.4,469.4 1635.7,470.3 1639.0,472.1 1642.5,475.8 1645.8,479.5 1649.1,484.0 1652.6,489.6 1655.9,491.9 1659.2,491.4 1662.7,487.7 1666.0,485.9 1669.3,488.1 1672.8,485.5 1676.1,482.8 1679.4,482.6 1682.9,476.7 1686.2,476.3 1689.5,477.3 1693.0,474.5 1696.3,471.2 1699.6,467.0 1703.1,469.0 1706.4,471.2 1709.7,473.0 1713.2,476.2 1716.5,476.7 1719.8,477.3 1723.3,479.5 1726.6,483.1 1729.9,489.6 1733.4,495.1 1736.7,495.4 1739.8,495.1" stroke="#b4e07c" stroke-width="1.1"/></g>
</g>
<clipPath id="c3"><rect x="58" y="571" width="1768" height="169"/></clipPath><g clip-path="url(#c3)" fill="none" stroke-linejoin="round">
<polyline points="720.9,644.7 724.0,635.2 727.3,648.4 730.6,664.6 733.9,655.7 737.4,666.8 740.7,681.4 744.0,695.2 747.2,697.6 750.8,689.7 754.0,688.8 757.6,686.0 761.3,683.3 764.6,684.7 767.7,692.5 771.0,701.3 774.3,701.6 777.8,700.3 781.1,720.5 784.2,719.1 788.3,716.3 791.6,692.5 794.7,678.7 798.0,679.2 801.3,685.1 804.6,692.1 808.1,670.4 811.2,672.3 814.5,657.6 817.8,648.4 820.9,647.5 824.6,651.2 828.3,659.4 831.6,651.2 834.9,644.4 838.4,648.4 841.5,649.3 845.2,653.5 848.5,644.7 851.8,636.1 855.3,650.6 858.4,637.0 862.2,645.7 865.5,651.2 869.0,646.6 872.3,638.3 875.6,612.3 878.9,620.0 882.0,632.4 885.2,636.1 888.5,647.5 892.0,641.1 895.3,659.1 898.6,659.4 902.1,655.2 905.7,674.7 909.0,652.1 912.3,656.7 915.6,660.3 919.1,653.9 922.4,653.5 925.7,652.1 929.2,644.7 932.5,638.9 935.8,626.9 939.3,620.9 942.6,608.0 945.9,604.0 949.4,591.0 952.7,595.2 956.2,616.3 959.5,616.8 962.8,616.3 966.3,620.5 969.6,624.2 973.3,628.2 976.6,632.8 979.7,630.4 983.0,644.7 986.1,664.9 989.4,666.8 992.9,683.3 996.2,684.7 999.5,681.4 1003.0,670.4 1006.3,667.7 1010.0,684.6 1013.3,675.9 1016.6,670.1 1020.1,666.2 1023.4,677.4 1026.8,677.4 1030.1,668.6 1033.5,647.5 1036.6,653.9 1040.2,647.5 1043.4,638.3 1046.7,633.7 1050.3,638.9 1053.6,635.6 1057.1,620.0 1060.4,619.0 1063.7,615.4 1065.0,619.0 1067.2,630.1 1070.5,612.1 1073.8,610.4 1077.1,610.2 1080.4,626.4 1083.9,627.9 1087.2,628.6 1090.7,631.9 1094.0,637.4 1097.3,628.8 1100.8,633.7 1104.1,637.4 1107.6,650.2 1110.9,659.8 1114.2,663.6 1117.7,645.7 1121.0,637.9 1124.3,641.1 1127.8,639.2 1131.1,642.9 1134.4,634.6 1137.9,634.1 1141.2,630.4 1144.5,631.5 1148.0,625.5 1151.3,624.0 1154.6,626.9 1158.0,624.2 1161.3,611.7 1164.7,620.0 1168.1,634.6 1171.4,629.7 1174.7,630.1 1178.0,629.7 1181.5,646.6 1184.8,657.6 1188.3,670.8 1191.6,660.3 1194.9,667.7 1198.4,671.0 1201.7,649.3 1205.0,654.8 1208.5,662.2 1211.8,659.1 1215.1,649.3 1218.4,649.9 1221.9,638.9 1225.2,675.6 1228.7,662.2 1232.0,663.5 1235.3,629.1 1238.8,626.9 1242.1,621.2 1245.4,620.0 1248.9,627.9 1252.2,630.1 1255.9,633.4 1259.0,632.3 1262.3,633.7 1265.6,632.8 1269.1,632.8 1272.4,613.5 1275.7,617.6 1279.2,612.6 1282.5,633.7 1285.8,646.6 1289.3,658.5 1292.6,661.3 1295.9,648.4 1299.4,637.4 1302.7,618.7 1306.0,620.0 1309.1,619.6 1312.8,642.0 1316.1,641.4 1319.4,627.3 1322.8,619.4 1326.1,621.8 1329.6,625.1 1332.9,619.0 1336.2,609.0 1339.7,609.5 1343.0,609.5 1346.3,605.8 1349.8,602.0 1353.1,620.0 1356.4,618.1 1359.7,613.5 1363.2,617.2 1366.5,675.9 1369.6,658.5 1373.3,649.9 1376.6,646.2 1380.1,658.5 1383.4,664.0 1386.7,662.5 1390.2,666.2 1393.5,670.1 1396.8,670.4 1400.3,669.1 1403.6,661.6 1406.9,667.3 1410.0,665.3 1413.7,652.1 1417.0,671.3 1420.5,682.4 1423.8,691.5 1427.3,697.0 1430.6,680.2 1433.9,678.7 1437.2,675.0 1440.6,672.3 1444.0,671.0 1447.3,674.1 1450.7,685.5 1454.0,677.8 1457.3,674.7 1460.8,672.3 1464.1,669.9 1467.4,665.3 1470.9,665.3 1474.2,646.2 1477.5,654.8 1481.0,664.9 1484.3,675.0 1487.6,689.7 1491.1,695.8 1494.4,683.3 1497.7,677.4 1501.2,683.3 1504.5,692.8 1507.8,682.4 1511.3,682.0 1514.6,691.5 1517.9,683.3 1521.4,684.2 1524.7,683.8 1528.0,686.0 1531.5,682.4 1534.8,662.7 1538.1,661.8 1541.6,675.6 1544.9,664.9 1548.2,664.0 1551.7,645.3 1555.0,648.0 1558.3,631.0 1561.8,624.2 1565.1,628.8 1568.4,625.5 1571.9,645.7 1575.2,637.4 1578.5,636.1 1582.0,644.4 1585.3,644.4 1588.6,647.5 1592.1,664.4 1595.4,649.3 1598.7,661.3 1602.1,651.2 1605.4,639.2 1608.8,639.6 1612.2,648.4 1615.5,659.4 1618.8,644.4 1622.3,644.7 1625.6,639.2 1628.9,636.5 1632.4,635.6 1635.7,633.7 1639.0,631.5 1642.5,638.3 1645.8,645.7 1649.1,654.8 1652.6,682.0 1655.9,675.9 1659.2,664.0 1662.7,648.8 1666.0,659.4 1669.3,665.8 1672.8,669.5 1676.1,660.9 1679.4,661.3 1682.9,650.8 1686.2,655.7 1689.5,653.9 1693.0,645.7 1696.3,638.3 1699.6,622.3 1703.1,634.6 1706.4,639.2 1709.7,643.8 1713.2,648.4 1716.5,633.7 1719.8,640.1 1723.3,647.5 1726.6,650.2 1729.9,674.1 1733.4,673.6 1736.7,664.0 1740.3,670.1" stroke="#aede80" stroke-width="1.05"/>
</g>
<clipPath id="c4"><rect x="58" y="741" width="1768" height="166"/></clipPath><g clip-path="url(#c4)" fill="none" stroke-linejoin="round">
<polyline points="720.9,844.1 727.3,849.6 737.4,854.7 743.9,861.5 750.3,864.7 756.7,862.8 764.0,857.9 771.4,850.5 778.7,840.4 784.2,829.4 788.8,823.0 792.5,821.2 797.1,820.6 802.6,814.7 808.1,809.2 814.1,806.5 820.9,812.9 830.1,823.0 839.3,837.7 848.5,852.4 855.8,864.3 861.3,870.7 866.8,874.0 871.4,875.7 876.0,871.6 881.5,864.3 886.1,861.5 892.5,861.0 898.9,860.6 905.4,857.5 912.7,856.6 918.6,855.1 922.8,862.5 927.4,869.8 932.5,872.9 939.3,869.8 945.7,856.9 952.2,845.0 958.6,834.9 965.9,823.9 973.3,814.7 978.8,810.7 986.1,810.1 993.4,812.9 1000.8,818.0 1008.1,818.8 1017.3,818.0 1022.8,819.3 1030.1,819.9 1035.7,823.0 1041.2,828.5 1046.7,833.1 1054.0,832.5 1059.5,830.3 1064.7,825.2 1065.0,824.8 1072.3,816.6 1079.7,808.3 1087.0,802.8 1092.5,801.0 1098.0,802.8 1102.6,811.1 1108.1,823.9 1114.6,833.1 1120.1,842.3 1125.6,853.3 1132.9,863.4 1138.4,869.4 1144.8,874.4 1149.4,867.0 1154.9,860.6 1160.4,855.1 1165.9,847.8 1171.4,840.4 1176.0,831.3 1179.7,827.2 1184.3,827.2 1190.7,828.0 1197.1,831.3 1201.7,835.8 1208.1,845.9 1213.7,853.3 1219.2,860.6 1224.7,868.0 1229.3,867.0 1233.8,863.9 1239.3,863.9 1245.8,863.4 1252.2,861.0 1259.5,860.3 1266.9,859.7 1274.2,858.4 1279.7,855.5 1285.2,854.6 1292.6,858.4 1298.1,856.6 1303.6,853.3 1309.1,850.2 1314.6,850.5 1321.9,852.4 1327.4,855.5 1332.9,853.3 1338.4,845.9 1344.0,838.6 1350.4,834.0 1355.9,833.6 1361.4,827.2 1366.0,825.7 1371.5,828.5 1377.0,832.2 1384.3,835.8 1389.8,838.6 1397.2,842.3 1404.5,841.9 1409.7,845.0 1410.0,845.0 1417.3,849.6 1423.8,846.9 1428.4,844.1 1435.7,844.5 1443.0,847.8 1448.5,849.6 1454.0,845.6 1459.6,839.5 1465.1,834.0 1470.6,832.7 1476.1,836.8 1481.6,840.8 1486.2,841.3 1490.7,835.8 1496.3,832.7 1500.8,833.1 1505.4,830.9 1510.9,828.5 1517.4,825.7 1522.9,820.2 1527.5,813.8 1532.0,809.8 1536.6,813.8 1542.1,818.4 1547.6,823.9 1553.1,832.2 1557.7,838.6 1562.3,841.3 1567.8,845.9 1573.3,853.3 1578.8,859.7 1584.3,862.5 1590.8,866.1 1596.3,868.3 1602.7,868.9 1609.1,871.6 1615.5,876.8 1621.0,877.1 1626.6,875.7 1632.1,874.4 1637.6,870.7 1643.1,866.1 1648.6,864.3 1654.1,857.9 1659.6,855.1 1664.2,853.6 1668.8,852.9 1674.3,849.6 1679.8,848.7 1685.3,848.7 1690.8,847.8 1695.4,847.8 1700.0,851.4 1705.5,856.9 1709.1,859.1 1713.7,859.7 1718.3,862.5 1723.8,867.0 1729.3,869.4 1734.8,870.2 1739.8,871.3" stroke="#5a5de6" stroke-width="1.2"/>
<polyline points="720.9,864.3 723.7,869.4 727.3,865.8 730.6,861.0 733.9,862.5 737.4,863.4 740.7,853.3 744.0,845.6 747.2,842.3 750.8,845.6 754.0,851.8 757.6,848.7 761.3,850.0 764.6,848.7 767.7,848.1 771.0,841.3 774.3,845.0 777.8,841.3 781.1,836.8 784.2,832.2 787.9,836.4 791.6,845.0 794.7,850.5 798.0,849.6 801.3,845.9 804.6,840.4 808.1,843.2 811.2,850.5 814.5,852.7 817.8,859.7 820.9,859.1 824.6,863.9 828.3,852.4 831.6,856.0 834.9,859.7 838.4,860.6 841.5,860.6 845.2,860.3 848.5,862.5 851.8,872.0 855.3,867.0 858.4,866.5 862.2,865.2 865.5,864.7 869.0,865.2 872.0,864.7 875.6,885.9 878.9,884.8 882.0,881.7 885.2,879.0 888.5,875.7 892.0,874.4 895.3,868.0 898.6,863.9 902.1,864.3 905.7,862.8 909.0,863.9 912.3,863.4 915.6,863.7 919.1,863.9 922.4,864.3 925.7,865.2 929.2,867.0 932.5,869.4 935.8,871.6 939.3,871.3 942.6,878.1 945.9,884.8 949.4,890.5 952.7,890.5 956.2,882.3 959.5,880.4 962.8,879.9 966.3,879.0 969.6,878.1 973.3,876.2 976.6,875.7 979.7,875.7 983.0,874.9 986.1,844.1 989.4,844.1 992.9,838.6 996.2,834.0 999.5,833.1 1003.0,834.6 1006.3,836.8 1010.0,835.3 1013.3,835.3 1016.6,835.3 1020.1,843.2 1023.4,845.6 1026.8,847.4 1030.1,849.6 1033.5,874.4 1036.6,873.1 1040.2,874.4 1043.4,875.3 1046.7,876.2 1050.3,881.7 1053.6,882.6 1057.1,884.8 1060.4,885.9 1063.7,888.7 1065.0,887.2 1068.7,884.8 1072.3,884.8 1077.1,884.1 1080.4,878.1 1083.9,877.1 1087.2,876.8 1090.7,876.2 1094.0,875.8 1097.3,876.8 1100.8,865.2 1104.1,865.2 1107.6,864.3 1110.9,861.0 1114.2,862.5 1117.7,863.9 1121.0,866.1 1124.3,865.8 1127.8,865.2 1131.1,865.2 1134.4,868.0 1137.9,868.9 1141.2,869.4 1144.5,870.2 1148.0,879.0 1151.3,879.3 1154.6,879.9 1158.0,882.3 1161.3,883.6 1164.7,883.0 1168.1,878.6 1171.4,878.2 1174.7,883.6 1178.0,883.0 1181.5,876.2 1184.8,867.0 1188.3,860.6 1191.6,860.6 1194.9,861.0 1198.4,860.3 1201.7,861.5 1205.0,861.0 1208.5,857.3 1211.8,856.6 1215.1,859.7 1218.4,862.5 1221.9,863.9 1225.2,836.8 1228.7,833.5 1232.0,839.5 1235.3,856.9 1238.8,858.4 1242.1,859.7 1245.4,860.6 1248.9,857.3 1252.2,858.4 1255.9,859.7 1259.0,860.6 1262.3,861.0 1265.6,860.6 1269.1,861.0 1272.4,871.6 1275.7,879.0 1279.2,878.6 1282.5,874.4 1285.8,872.0 1289.3,870.7 1292.6,869.8 1295.9,879.0 1299.4,878.1 1302.7,878.1 1306.0,877.1 1309.1,876.2 1312.8,868.3 1316.1,868.0 1319.4,874.4 1322.8,879.5 1326.1,876.8 1329.6,876.2 1332.9,876.8 1336.2,880.4 1339.7,880.8 1343.0,881.2 1346.3,881.7 1349.8,881.7 1353.1,875.3 1356.4,871.6 1359.7,877.5 1363.2,876.8 1366.5,840.1 1369.6,845.9 1373.3,849.6 1376.6,851.4 1380.1,847.8 1383.4,838.6 1386.7,838.2 1390.2,839.5 1393.5,836.4 1396.8,837.7 1400.3,839.5 1403.6,842.3 1406.9,845.9 1409.7,847.4 1410.0,847.4 1412.2,866.1 1417.0,857.9 1420.5,855.1 1423.8,852.9 1427.3,846.3 1430.6,853.6 1433.9,854.2 1437.2,853.6 1440.6,856.9 1444.0,856.6 1447.3,856.0 1450.7,849.6 1454.0,844.7 1457.3,844.5 1460.8,846.5 1464.1,849.1 1467.4,849.6 1470.9,849.2 1474.2,865.2 1477.5,865.2 1481.0,863.9 1484.3,856.9 1487.6,840.4 1491.1,834.9 1494.4,836.4 1497.7,843.7 1501.2,844.1 1504.5,836.8 1507.8,838.6 1511.3,840.4 1514.6,836.2 1517.9,838.6 1521.4,839.5 1524.7,839.5 1528.0,840.4 1531.5,842.3 1534.8,856.9 1538.1,864.3 1541.6,860.6 1544.9,861.2 1548.2,860.6 1551.7,868.9 1555.0,868.3 1558.3,872.5 1561.8,879.9 1565.1,874.9 1568.4,874.0 1571.9,864.3 1575.2,863.4 1578.5,863.9 1582.0,864.3 1585.3,859.7 1588.6,858.8 1592.1,858.4 1595.4,858.8 1598.7,857.3 1602.1,860.6 1605.4,863.9 1608.8,864.7 1612.2,865.2 1615.5,859.7 1618.8,864.3 1622.3,866.1 1625.6,869.8 1628.9,870.7 1632.4,872.5 1635.7,873.8 1639.0,873.5 1642.5,872.0 1645.8,868.9 1649.1,860.6 1652.6,857.3 1655.9,856.4 1659.2,860.6 1662.7,867.6 1666.0,869.8 1669.3,855.1 1672.8,854.6 1676.1,854.7 1679.4,854.7 1682.9,856.9 1686.2,857.9 1689.5,859.1 1693.0,862.5 1696.3,870.7 1699.6,870.3 1703.1,868.9 1706.4,867.0 1709.7,866.1 1713.2,865.2 1716.5,876.2 1719.8,875.3 1723.3,871.6 1726.6,868.0 1729.9,862.5 1733.4,856.4 1736.7,855.1 1740.3,853.3" stroke="#f09a5a" stroke-width="1.1"/>
<polyline points="720.9,862.5 724.0,856.0 727.3,859.7 730.6,867.0 733.9,862.5 737.4,865.2 740.7,867.6 744.0,874.9 747.2,876.8 750.8,873.1 754.0,871.6 757.6,870.7 761.3,869.8 764.6,870.7 767.7,870.7 771.0,876.2 774.3,876.4 777.8,877.1 781.1,883.0 784.2,883.0 788.3,882.3 791.6,882.3 794.7,879.0 798.0,880.8 801.3,883.2 804.6,883.6 808.1,881.2 811.2,879.9 814.5,877.1 817.8,870.2 820.9,869.8 824.6,870.2 828.3,871.6 831.6,872.2 834.9,866.1 838.4,862.5 841.5,862.5 845.2,864.3 848.5,863.9 851.8,861.0 855.3,864.3 858.4,859.7 862.2,860.6 865.5,867.6 869.0,863.9 872.3,859.7 875.6,855.1 878.9,852.9 882.0,865.2 885.2,868.0 888.5,871.6 892.0,871.6 895.3,870.3 898.6,870.7 902.1,871.6 905.7,879.9 909.0,869.8 912.3,869.4 915.6,869.1 919.1,868.9 922.4,868.5 925.7,864.3 929.2,860.6 932.5,859.1 935.8,851.4 939.3,848.7 942.6,843.2 945.9,838.6 949.4,833.5 952.7,832.7 956.2,843.2 959.5,844.7 962.8,846.5 966.3,849.6 969.6,846.9 973.3,851.1 976.6,850.5 979.7,850.5 983.0,857.3 986.1,867.6 989.4,873.5 992.9,879.9 996.2,885.4 999.5,877.5 1003.0,877.1 1006.3,877.5 1010.0,878.1 1013.3,876.2 1016.6,876.8 1020.1,867.6 1023.4,871.3 1026.8,871.6 1030.1,870.7 1033.5,866.1 1036.6,861.5 1040.2,859.1 1043.4,856.4 1046.7,854.6 1050.3,852.9 1053.6,851.1 1057.1,845.0 1060.4,840.4 1063.7,834.6 1065.0,836.8 1067.2,843.7 1070.5,842.3 1073.8,840.4 1077.1,834.6 1080.4,839.5 1083.9,844.1 1087.2,846.9 1090.7,850.5 1094.0,855.1 1097.3,850.5 1100.8,858.4 1104.1,864.3 1107.6,869.8 1110.9,874.4 1114.2,874.7 1117.7,873.5 1121.0,862.5 1124.3,867.0 1127.8,866.1 1131.1,866.1 1134.4,859.1 1137.9,860.3 1141.2,861.5 1144.5,860.3 1148.0,856.0 1151.3,851.1 1154.6,852.9 1158.0,852.4 1161.3,843.7 1164.7,843.6 1168.1,854.6 1171.4,854.7 1174.7,854.2 1178.0,853.3 1181.5,862.1 1184.8,862.5 1188.3,865.2 1191.6,871.6 1194.9,870.7 1198.4,876.2 1201.7,862.5 1205.0,861.0 1208.5,869.4 1211.8,868.3 1215.1,862.5 1218.4,856.9 1221.9,850.0 1225.2,864.3 1228.7,871.6 1232.0,871.6 1235.3,844.1 1238.8,842.3 1242.1,837.7 1245.4,835.5 1248.9,844.1 1252.2,846.3 1255.9,847.8 1259.0,848.7 1262.3,848.7 1265.6,850.5 1269.1,851.4 1272.4,846.9 1275.7,838.6 1279.2,836.2 1282.5,859.7 1285.8,861.0 1289.3,868.0 1292.6,875.3 1295.9,870.7 1299.4,866.1 1302.7,863.4 1306.0,857.5 1309.1,862.5 1312.8,862.5 1316.1,865.2 1319.4,861.5 1322.8,856.9 1326.1,862.5 1329.6,861.5 1332.9,858.4 1336.2,848.1 1339.7,845.6 1343.0,848.7 1346.3,847.8 1349.8,845.9 1353.1,850.5 1356.4,854.2 1359.7,852.4 1363.2,851.4 1366.5,865.2 1369.6,868.3 1373.3,861.5 1376.6,859.1 1380.1,863.4 1383.4,870.2 1386.7,870.7 1390.2,869.8 1393.5,871.6 1396.8,872.5 1400.3,872.0 1403.6,869.4 1406.9,867.6 1409.7,867.0 1410.0,867.0 1413.7,863.4 1417.0,863.9 1420.5,871.6 1423.8,874.9 1427.3,875.3 1430.6,875.3 1433.9,874.9 1437.2,874.4 1440.6,872.9 1444.0,872.0 1447.3,872.5 1450.7,876.6 1454.0,880.8 1457.3,876.8 1460.8,876.2 1464.1,875.8 1467.4,875.7 1470.9,874.9 1474.2,872.2 1477.5,868.3 1481.0,872.0 1484.3,874.9 1487.6,877.5 1491.1,880.4 1494.4,878.4 1497.7,877.5 1501.2,876.2 1504.5,882.3 1507.8,878.6 1511.3,878.4 1514.6,878.6 1517.9,878.4 1521.4,878.1 1524.7,876.2 1528.0,877.5 1531.5,877.5 1534.8,876.2 1538.1,874.9 1541.6,876.8 1544.9,871.3 1548.2,870.2 1551.7,867.6 1555.0,866.1 1558.3,863.0 1561.8,859.1 1565.1,857.9 1568.4,852.4 1571.9,858.8 1575.2,857.3 1578.5,856.0 1582.0,852.4 1585.3,853.3 1588.6,853.8 1592.1,860.3 1595.4,860.3 1598.7,863.0 1602.1,859.7 1605.4,850.5 1608.8,851.8 1612.2,852.9 1615.5,858.8 1618.8,858.4 1622.3,856.9 1625.6,855.5 1628.9,858.2 1632.4,856.9 1635.7,856.6 1639.0,856.6 1642.5,857.3 1645.8,858.8 1649.1,867.0 1652.6,879.9 1655.9,881.2 1659.2,876.8 1662.7,873.5 1666.0,871.3 1669.3,874.9 1672.8,878.1 1676.1,870.7 1679.4,872.0 1682.9,873.5 1686.2,874.9 1689.5,874.9 1693.0,873.1 1696.3,867.6 1699.6,861.5 1703.1,861.9 1706.4,866.1 1709.7,868.9 1713.2,869.8 1716.5,867.0 1719.8,863.9 1723.3,872.5 1726.6,871.6 1729.9,870.7 1733.4,870.3 1736.7,870.7 1739.8,871.3" stroke="#a6de78" stroke-width="1.1"/>
</g>
<g font-family="'DejaVu Sans','Liberation Sans',sans-serif" font-size="11" fill="#a9adb5"><text x="1827.3" y="109.5">158.50</text><text x="57" y="109.5" text-anchor="end">158.50</text><text x="1827.3" y="173.5">158.00</text><text x="57" y="173.5" text-anchor="end">158.00</text><text x="1827.3" y="237.5">157.50</text><text x="57" y="237.5" text-anchor="end">157.50</text><text x="1827.3" y="301.5">157.00</text><text x="57" y="301.5" text-anchor="end">157.00</text><text x="1827.3" y="365.5">156.50</text><text x="57" y="365.5" text-anchor="end">156.50</text><text x="1827.3" y="426.5">0.3</text><text x="57" y="426.5" text-anchor="end">0.3</text><text x="1827.3" y="447.5">0.2</text><text x="57" y="447.5" text-anchor="end">0.2</text><text x="1827.3" y="468.5">0.1</text><text x="57" y="468.5" text-anchor="end">0.1</text><text x="1827.3" y="489.5">0.0</text><text x="57" y="489.5" text-anchor="end">0.0</text><text x="1827.3" y="510.5">-0.1</text><text x="57" y="510.5" text-anchor="end">-0.1</text><text x="1827.3" y="531.5">-0.2</text><text x="57" y="531.5" text-anchor="end">-0.2</text><text x="1827.3" y="552.5">-0.3</text><text x="57" y="552.5" text-anchor="end">-0.3</text><text x="1827.3" y="586.5">100</text><text x="57" y="586.5" text-anchor="end">100</text><text x="1827.3" y="615.5">80</text><text x="57" y="615.5" text-anchor="end">80</text><text x="1827.3" y="644.5">60</text><text x="57" y="644.5" text-anchor="end">60</text><text x="1827.3" y="674.5">40</text><text x="57" y="674.5" text-anchor="end">40</text><text x="1827.3" y="703.5">20</text><text x="57" y="703.5" text-anchor="end">20</text><text x="1827.3" y="732.5">0</text><text x="57" y="732.5" text-anchor="end">0</text><text x="1827.3" y="764.5">100</text><text x="57" y="764.5" text-anchor="end">100</text><text x="1827.3" y="790.5">80</text><text x="57" y="790.5" text-anchor="end">80</text><text x="1827.3" y="816.5">60</text><text x="57" y="816.5" text-anchor="end">60</text><text x="1827.3" y="842.5">40</text><text x="57" y="842.5" text-anchor="end">40</text><text x="1827.3" y="868.5">20</text><text x="57" y="868.5" text-anchor="end">20</text><text x="1827.3" y="894.5">0</text><text x="57" y="894.5" text-anchor="end">0</text></g>
<g font-family="'DejaVu Sans','Liberation Sans',sans-serif" font-size="11.5" fill="#a9adb5"><text x="744.0" y="52" text-anchor="middle">00:00</text><text x="744.0" y="919" text-anchor="middle">00:00</text><text x="983.0" y="52" text-anchor="middle">06:10</text><text x="983.0" y="919" text-anchor="middle">06:10</text><text x="1219.0" y="52" text-anchor="middle">12:00</text><text x="1219.0" y="919" text-anchor="middle">12:00</text><text x="1461.0" y="52" text-anchor="middle">18:00</text><text x="1461.0" y="919" text-anchor="middle">18:00</text><text x="1704.0" y="52" text-anchor="middle">00:00</text><text x="1704.0" y="919" text-anchor="middle">00:00</text></g>
<g font-family="'DejaVu Sans','Liberation Sans',sans-serif" font-size="11" fill="#a9adb5"><text x="61" y="416">MACD</text><text x="61" y="586">RSI</text><text x="61" y="756">DMI</text></g>
</svg><div id="tb">
<div class="cb" style="left:-1px;width:148px">
<svg width="34" height="17" viewBox="0 0 34 17" style="position:absolute;left:0px;top:2px">
<defs><clipPath id="cu"><circle cx="7.5" cy="8.5" r="7.5"/></clipPath>
<radialGradient id="gl" cx="0.5" cy="0.25" r="0.8"><stop offset="0" stop-color="#fff" stop-opacity="0.35"/><stop offset="1" stop-color="#000" stop-opacity="0.15"/></radialGradient></defs>
<g clip-path="url(#cu)"><rect x="0" y="1" width="15" height="15" fill="#f4f0f0"/>
<g fill="#d8414a"><rect x="0" y="1" width="15" height="1.6"/><rect x="0" y="4.2" width="15" height="1.6"/><rect x="0" y="7.4" width="15" height="1.6"/><rect x="0" y="10.6" width="15" height="1.6"/><rect x="0" y="13.8" width="15" height="1.6"/></g>
<rect x="0" y="1" width="8.5" height="8" fill="#54608f"/></g>
<circle cx="7.5" cy="8.5" r="7.5" fill="url(#gl)"/>
<circle cx="24.5" cy="8.5" r="7.5" fill="#ecdcdc"/><circle cx="24.5" cy="8.5" r="7" fill="#f7f3f3"/><circle cx="24.5" cy="8.7" r="4.3" fill="#e01010"/>
</svg>
<span style="position:absolute;left:37px;top:0;font-size:13px;letter-spacing:-1.75px">ドル/円</span><i class="ar" style="left:132px"></i></div>
<div class="cb" style="left:150px;width:82px"><span style="position:absolute;left:9px;top:0;font-size:13px;letter-spacing:-1.9px">5分足</span><i class="ar" style="left:66px"></i></div>
<div class="bt" style="left:235px;width:93px;text-align:left"><span style="position:absolute;left:5px;top:0;font-size:13px;letter-spacing:-2.9px;white-space:nowrap">テクニカル選択</span><i style="position:absolute;left:81px;top:7px;width:0;height:0;border-left:4px solid transparent;border-right:4px solid transparent;border-top:4px solid #fff"></i></div>
<div class="bt" style="left:332px"><svg width="23" height="17" viewBox="0 0 23 17"><g transform="translate(11.5 8.5) rotate(-45)"><rect x="-6" y="-2.6" width="10.5" height="5.2" fill="#fff"/><path d="M-6 -2.6 L-9 0 L-6 2.6 Z" fill="#fff"/><path d="M-5 -0.9 H4 M-5 0.9 H4" stroke="#222" stroke-width="0.7"/><rect x="5.2" y="-2.6" width="1.8" height="5.2" fill="#fff"/></g></svg></div>
<div class="bt" style="left:360px"><svg width="23" height="17" viewBox="0 0 23 17"><circle cx="11.5" cy="8.3" r="5.6" fill="#fff"/><rect x="10.5" y="7.3" width="2.2" height="4.6" fill="#111"/><circle cx="11.6" cy="5.4" r="1.3" fill="#111"/></svg></div>
<div class="bt" style="left:388px"><svg width="23" height="17" viewBox="0 0 23 17"><path d="M3 13 V10 L7.5 6.2 L9.5 8 L12 4.5 L14.2 7.4 L16 6 L20 10 V13 Z" fill="#fff"/></svg></div>
<div class="bt" style="left:416px;width:59px;background:none;overflow:hidden"><span style="position:absolute;left:0;top:0;width:29px;height:17px;background:linear-gradient(#6cb2f0 0%,#3a8de0 48%,#1c6fd0 52%,#2f86e4 100%);font-size:12.5px;letter-spacing:-0.1px;color:#e8f2ff">Bid</span><span style="position:absolute;left:29px;top:0;width:28px;height:17px;background:linear-gradient(#4a4a4a 0%,#2a2a2a 45%,#0c0c0c 50%,#161616 100%);font-size:12.5px;letter-spacing:-0.2px">Ask</span></div>
<div class="bt" style="left:478px"><svg width="23" height="17" viewBox="0 0 23 17"><path d="M3.5 5 V2.5 H19.5 V5 M3.5 12 V14.5 H19.5 V12" fill="none" stroke="#3f8be0" stroke-width="1.3"/><path d="M6.5 6 V12 M9 7 V12 M11.5 5 V11 M14 6.5 V12 M16.5 4.5 V10" stroke="#5aa2ee" stroke-width="1.1"/></svg></div>
<div class="bt" style="left:506px"><svg width="23" height="17" viewBox="0 0 23 17"><circle cx="13.2" cy="7" r="4.4" fill="none" stroke="#fff" stroke-width="1.5"/><path d="M16.4 10.2 L20 13.8" stroke="#fff" stroke-width="2"/><path d="M11 7 H15.4" stroke="#fff" stroke-width="1.3"/><path d="M4.5 5 V14 M2.8 7.5 H6.2 M2.8 11.5 H6.2" stroke="#fff" stroke-width="1.1"/></svg></div>
<div class="bt" style="left:534px"><svg width="23" height="17" viewBox="0 0 23 17"><circle cx="13.2" cy="7" r="4.4" fill="none" stroke="#fff" stroke-width="1.5"/><path d="M16.4 10.2 L20 13.8" stroke="#fff" stroke-width="2"/><path d="M11 7 H15.4 M13.2 4.8 V9.2" stroke="#fff" stroke-width="1.3"/><path d="M4.5 4 V14 M2.6 6 L4.5 3.6 L6.4 6 M2.6 12 L4.5 14.4 L6.4 12" stroke="#fff" stroke-width="1.1" fill="none"/></svg></div>
</div>

<div id="news"><div id="nt"><span>ニュース本文</span><svg width="12" height="12" style="position:absolute;left:629.5px;top:2px"><path d="M2 2 L9.6 9.6 M9.6 2 L2 9.6" stroke="#fff" stroke-width="2"/></svg></div>
<div id="nc">
<div id="hd"><span style="position:absolute;left:-1px;top:0;white-space:nowrap;font-size:14.5px;letter-spacing:0.42px;font-weight:normal;-webkit-text-stroke:0.45px #fff">2024/06/14 17:07:00</span><div style="position:absolute;left:157px;top:0;width:490px;white-space:nowrap;letter-spacing:0.235px;text-indent:-6px">「ドル･円は伸び悩みか、日本の為替介入への警戒感で」／為替市場今日の<br>まとめ</div></div>
<div id="bd">[今日の東京市場]
*17:07JST 「ドル・円は伸び悩みか、日本の為替介入への警戒感で」
ドル・円は強含み、日銀会合後に158円台
14日の東京市場でドル・円は強含み。157円付近でもみ合い後、正午前に仕掛け的な売
りで156円84銭まで下落。その後は日銀による想定内の政策内容で円売り優勢となり、
158円を目指す展開に。日銀総裁発言で円売りが再開し158円25銭まで上昇した。
・ユーロ・円は168円51銭から169円79銭まで上昇。
・ユーロ・ドルは1.0744ドルから1.0706ドルまで値を下げた。
・日経平均株価：始値38,587.57円、高値39,025.70円、安値38,554.75円、終値38,81
4.56円（前日比94.09円高）
・17時時点：ドル円157円70-80銭、ユーロ・円168円90-00銭
【金融政策】
・日銀
・金融市場調節方針（全員一致）
無担保コールレート（オーバーナイト物）を0-0.1％程度で推移するよう促す。
・長期国債およびCP等・社債等の買入れ（賛成8反対1）
2024 年３月の金融政策決定会合において決定された方針に沿って実施。
その後については、金融市場において長期金利がより自由な形で形成されるよう、長
期
国債買入れを減額していく方針を決定。
次回金融政策決定会合において、今後1-2年程度の具体的な減額計画を決定。
【要人発言】
・植田日銀総裁
「市場の状況を確認したうえで国債買入れの減額方針を決定」
「国債買入れ減額は相応の規模になる」
「具体的な政策長瀬野時期、現時点では言えない」
「7月会合、データや情報次第で緩和度合いの調整もありうる」
「予告型の国債買入れ減、例外的な措置」
「円安を含め輸入物価に再上昇の気配が見える」
「7月会合までの情報次第で短期金利の引き上げは当然ありうる」
「7月会合、国債買入れ減額の影響を考慮したうえで決定」
・林官房長官
「引き続き政府との密接な連携の下、適切な金融政策運営が行われると期待」
「為替市場の動向を引き続き注視」
【経済指標】
・日・4月鉱工業生産改定値：前月比：-0.9％（速報値： -0.1％）


[今日の海外市場]
　14日の欧米外為市場では、ドル・円は伸び悩む展開を予想する。米インフレ上昇圧
力は弱まり、ドル買いは縮小の見通し。一方、日銀は現行の金融政策維持により円売
りに振れやすいものの、158円以上は為替介入が警戒され、円売りは縮小しそうだ。

　前日発表された米国の生産者物価指数（PPI）は予想外に弱く、連邦準備制度理事会
（FRB）の引き締め政策長期化への期待は後退。一方、欧州株式市場の軟調地合いでユ
</div>
<div id="sb"><b></b><i></i></div>
</div></div>
</body></html>
